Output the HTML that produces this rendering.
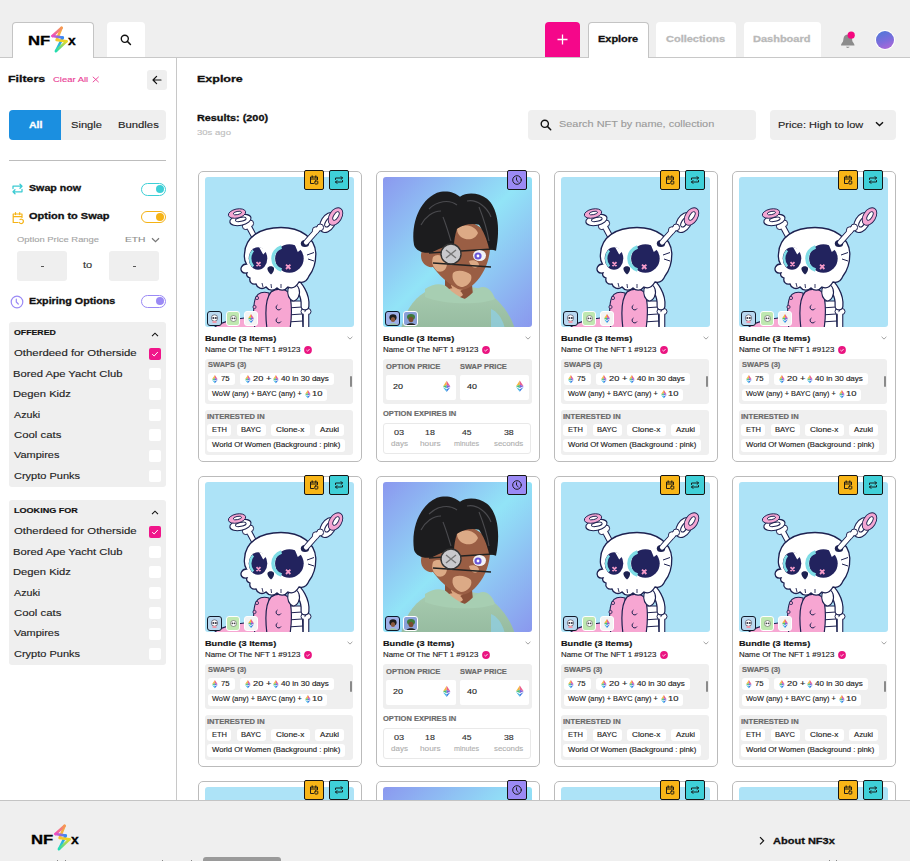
<!DOCTYPE html><html><head><meta charset="utf-8"><style>
*{margin:0;padding:0;box-sizing:border-box}
html,body{width:910px;height:861px;overflow:hidden;background:#fff;font-family:"Liberation Sans", sans-serif;color:#111}
.t{position:absolute;white-space:nowrap}
.r{position:absolute}
.card{position:absolute;width:164px;height:291px;border:1px solid #c4c4c4;border-radius:5px;background:#fff}
.card .t,.card .r,.card svg{position:absolute}
svg{position:absolute;overflow:visible}
</style></head><body><div class="r" style="left:0px;top:0px;width:910px;height:57px;background:#efefef;"></div><div class="r" style="left:0px;top:57px;width:910px;height:1px;background:#c8c8c8;"></div><div class="r" style="left:12px;top:22px;width:81.5px;height:36px;background:#fff;border:1px solid #c4c4c4;border-bottom:none;border-radius:4px 4px 0 0;"></div><div class="t" style="left:28.22px;top:34.00px;font-size:13px;line-height:13px;font-weight:700;-webkit-text-stroke:0.3px currentColor;color:#000;transform:scaleX(1.282);transform-origin:0 0;">NF</div><div class="t" style="left:68.26px;top:34.00px;font-size:13.5px;line-height:13.5px;font-weight:700;-webkit-text-stroke:0.3px currentColor;color:#000;transform:scaleX(1.029);transform-origin:0 0;">x</div><svg style="left:48.3px;top:24.2px" width="20.0" height="28.0" viewBox="0 0 20 28" fill="none" stroke-linecap="round" stroke-linejoin="round" stroke-width="2.6"><defs><linearGradient id="ba1" gradientUnits="userSpaceOnUse" x1="13" y1="3" x2="4" y2="12"><stop offset="0" stop-color="#f59a52"/><stop offset="1" stop-color="#f24bbd"/></linearGradient><linearGradient id="bb1" gradientUnits="userSpaceOnUse" x1="4.5" y1="12" x2="14.8" y2="13.6"><stop offset="0" stop-color="#f24bbd"/><stop offset="1" stop-color="#2f8cf6"/></linearGradient><linearGradient id="bc1" gradientUnits="userSpaceOnUse" x1="13.6" y1="3.8" x2="18.5" y2="17.4"><stop offset="0" stop-color="#f5a04c"/><stop offset="0.6" stop-color="#f6c033"/><stop offset="1" stop-color="#ecd81e"/></linearGradient><linearGradient id="bd1" gradientUnits="userSpaceOnUse" x1="18.5" y1="17.4" x2="8" y2="27"><stop offset="0" stop-color="#e9d824"/><stop offset="1" stop-color="#22dcb0"/></linearGradient><linearGradient id="be1" gradientUnits="userSpaceOnUse" x1="14.8" y1="13.6" x2="8" y2="27"><stop offset="0" stop-color="#3b86f4"/><stop offset="1" stop-color="#1ee0c8"/></linearGradient></defs><path d="M14.8 13.6 L8 27" stroke="url(#be1)"/><path d="M13.6 3.8 L8.6 16 L18.5 17.4" stroke="url(#bc1)"/><path d="M18.5 17.4 L8 27" stroke="url(#bd1)"/><path d="M13.6 3.8 L4.5 12" stroke="url(#ba1)"/><path d="M4.5 12 L14.8 13.6" stroke="url(#bb1)"/></svg><div class="r" style="left:107px;top:22px;width:38px;height:35px;background:#fff;border-radius:4px 4px 0 0;"></div><svg style="left:119.6px;top:33.8px" width="12" height="12" viewBox="0 0 14 14"><circle cx="5.6" cy="5.6" r="4.1" fill="none" stroke="#111" stroke-width="1.6"/><path d="M8.6 8.6 L12.2 12.2" stroke="#111" stroke-width="1.7" stroke-linecap="round"/></svg><div class="r" style="left:545px;top:22px;width:35px;height:35px;background:#f5078a;border-radius:4px 4px 0 0;"></div><svg style="left:556px;top:33px" width="13" height="13" viewBox="0 0 13 13"><path d="M6.5 1.5V11.5M1.5 6.5H11.5" stroke="#fff" stroke-width="1.3"/></svg><div class="r" style="left:588px;top:22px;width:60.5px;height:36px;background:#fff;border:1px solid #c4c4c4;border-bottom:none;border-radius:4px 4px 0 0;"></div><div class="t" style="left:597.79px;top:35.00px;font-size:9px;line-height:9px;font-weight:700;-webkit-text-stroke:0.3px currentColor;transform:scaleX(1.216);transform-origin:0 0;">Explore</div><div class="r" style="left:656px;top:22px;width:80px;height:35px;background:#fff;border-radius:4px 4px 0 0;"></div><div class="t" style="left:666.16px;top:35.00px;font-size:9px;line-height:9px;font-weight:700;-webkit-text-stroke:0.3px currentColor;color:#b9b9b9;transform:scaleX(1.220);transform-origin:0 0;">Collections</div><div class="r" style="left:743.5px;top:22px;width:77.5px;height:35px;background:#fff;border-radius:4px 4px 0 0;"></div><div class="t" style="left:752.68px;top:35.00px;font-size:9px;line-height:9px;font-weight:700;-webkit-text-stroke:0.3px currentColor;color:#b9b9b9;transform:scaleX(1.222);transform-origin:0 0;">Dashboard</div><svg style="left:840px;top:30px" width="18" height="20" viewBox="0 0 18 20"><path d="M1 15.5 C1 13.5 2.5 12.5 3 11.5 C3.5 10 3.2 7 5 5.5 C6.5 4.2 9 4.2 10.5 5.5 C12.3 7 12 10 12.5 11.5 C13 12.5 14.5 13.5 14.5 15.5 Z" fill="#8c8c8c"/><path d="M6 16.8 C6.5 18.3 9 18.3 9.5 16.8 Z" fill="#8c8c8c"/><circle cx="11.2" cy="5.2" r="3.6" fill="#f5077f"/></svg><div class="r" style="left:875.7px;top:30.7px;width:18.6px;height:18.6px;border-radius:50%;box-shadow:0 0 0 1px #fff;background:linear-gradient(160deg,#4a7ad8 0%,#7d6cdc 55%,#b866d6 100%)"></div><div class="r" style="left:176px;top:58px;width:1px;height:742px;background:#c8c8c8;"></div><div class="t" style="left:8.40px;top:74.00px;font-size:9.8px;line-height:9.8px;font-weight:700;-webkit-text-stroke:0.3px currentColor;transform:scaleX(1.262);transform-origin:0 0;">Filters</div><div class="t" style="left:53.33px;top:76.00px;font-size:8px;line-height:8px;-webkit-text-stroke:0.12px currentColor;color:#ea3d95;transform:scaleX(1.179);transform-origin:0 0;">Clear All</div><svg style="left:91.8px;top:76.2px" width="7.5" height="7" viewBox="0 0 7.5 7"><path d="M0.8 0.8L6.7 6.2M6.7 0.8L0.8 6.2" stroke="#ea3d95" stroke-width="0.9"/></svg><div class="r" style="left:147px;top:69.5px;width:20px;height:20px;background:#efefef;border-radius:3px;"></div><svg style="left:151px;top:73.5px" width="12" height="12" viewBox="0 0 12 12"><path d="M10 6H2.2M5.6 2.4L2 6L5.6 9.6" fill="none" stroke="#111" stroke-width="1.2" stroke-linecap="round" stroke-linejoin="round"/></svg><div class="r" style="left:9px;top:110px;width:157px;height:30px;background:#efefef;border-radius:4px;"></div><div class="r" style="left:9px;top:110px;width:52px;height:30px;background:#1b8fe0;border-radius:4px 0 0 4px;"></div><div class="t" style="left:28.74px;top:121.00px;font-size:8.5px;line-height:8.5px;font-weight:700;-webkit-text-stroke:0.3px currentColor;color:#fff;transform:scaleX(1.241);transform-origin:0 0;">All</div><div class="t" style="left:71.00px;top:121.00px;font-size:8.5px;line-height:8.5px;-webkit-text-stroke:0.12px currentColor;color:#222;transform:scaleX(1.312);transform-origin:0 0;">Single</div><div class="t" style="left:118.10px;top:121.00px;font-size:8.5px;line-height:8.5px;-webkit-text-stroke:0.12px currentColor;color:#222;transform:scaleX(1.328);transform-origin:0 0;">Bundles</div><div class="r" style="left:9px;top:160px;width:157px;height:1px;background:#bdbdbd;"></div><svg style="left:10.5px;top:182px" width="13" height="14" viewBox="0 0 13 14" fill="none" stroke="#3ccbd3" stroke-width="1.3" stroke-linecap="round" stroke-linejoin="round"><path d="M2 6.5V4.2H11M9 2.2L11 4.2L9 6.2M11 7.5V9.8H2M4 7.8L2 9.8L4 11.8"/></svg><div class="t" style="left:29.18px;top:184.00px;font-size:9.2px;line-height:9.2px;font-weight:700;-webkit-text-stroke:0.3px currentColor;transform:scaleX(1.159);transform-origin:0 0;">Swap now</div><div class="r" style="left:141px;top:183px;width:25px;height:12.5px;border:1.2px solid #3ecfd6;border-radius:7px;background:#fff"></div><div class="r" style="left:155.5px;top:185.2px;width:8.2px;height:8.2px;border-radius:50%;background:#3ecfd6"></div><svg style="left:11px;top:210.5px" width="14" height="14" viewBox="0 0 14 14" fill="none" stroke="#f5b315" stroke-width="1.2" stroke-linecap="round" stroke-linejoin="round"><path d="M7 11.5H2.2V3H11V6.5M2.2 5.6H11M4.5 1.5V3.6M8.7 1.5V3.6"/><path d="M9 8.5A2.2 2.2 0 1 1 8.3 11.5"/></svg><div class="t" style="left:29.06px;top:212.00px;font-size:9.2px;line-height:9.2px;font-weight:700;-webkit-text-stroke:0.3px currentColor;transform:scaleX(1.196);transform-origin:0 0;">Option to Swap</div><div class="r" style="left:141px;top:210.5px;width:25px;height:12.5px;border:1.2px solid #f5b315;border-radius:7px;background:#fff"></div><div class="r" style="left:155.5px;top:212.7px;width:8.2px;height:8.2px;border-radius:50%;background:#f5b315"></div><div class="t" style="left:16.68px;top:236.00px;font-size:7.8px;line-height:7.8px;-webkit-text-stroke:0.12px currentColor;color:#a5a5a5;transform:scaleX(1.206);transform-origin:0 0;">Option Price Range</div><div class="t" style="left:124.58px;top:236.00px;font-size:7.8px;line-height:7.8px;-webkit-text-stroke:0.12px currentColor;color:#8d8d8d;transform:scaleX(1.317);transform-origin:0 0;">ETH</div><svg style="left:151px;top:236.5px" width="9" height="6" viewBox="0 0 9 6"><path d="M1 1.2L4.5 4.6L8 1.2" fill="none" stroke="#777" stroke-width="1.2"/></svg><div class="r" style="left:17px;top:251px;width:50px;height:30px;background:#efefef;border-radius:3px;"></div><div class="r" style="left:109px;top:251px;width:50px;height:30px;background:#efefef;border-radius:3px;"></div><div class="r" style="left:40.5px;top:265.5px;width:3px;height:1.1px;background:#555;"></div><div class="r" style="left:132.5px;top:265.5px;width:3px;height:1.1px;background:#555;"></div><div class="t" style="left:83.23px;top:261.00px;font-size:8.6px;line-height:8.6px;-webkit-text-stroke:0.12px currentColor;color:#333;transform:scaleX(1.282);transform-origin:0 0;">to</div><svg style="left:9.5px;top:294.5px" width="14" height="14" viewBox="0 0 14 14" fill="none" stroke="#9b8af5" stroke-width="1.2" stroke-linecap="round"><circle cx="7" cy="7" r="5.8"/><path d="M6.3 4.2L6.3 7L8.3 9"/></svg><div class="t" style="left:28.80px;top:297.00px;font-size:9.2px;line-height:9.2px;font-weight:700;-webkit-text-stroke:0.3px currentColor;transform:scaleX(1.166);transform-origin:0 0;">Expiring Options</div><div class="r" style="left:141px;top:295px;width:25px;height:12.5px;border:1.2px solid #9b8af5;border-radius:7px;background:#fff"></div><div class="r" style="left:155.5px;top:297.2px;width:8.2px;height:8.2px;border-radius:50%;background:#9b8af5"></div><div class="r" style="left:9px;top:322px;width:157px;height:165px;background:#efefef;border-radius:3px;"></div><div class="t" style="left:13.85px;top:330.00px;font-size:6.9px;line-height:6.9px;font-weight:700;-webkit-text-stroke:0.15px currentColor;transform:scaleX(1.272);transform-origin:0 0;">OFFERED</div><svg style="left:151px;top:331.5px" width="8" height="5" viewBox="0 0 8 5"><path d="M1 4.2L4 1.2L7 4.2" fill="none" stroke="#111" stroke-width="1.1"/></svg><div class="t" style="left:13.69px;top:349.00px;font-size:8.6px;line-height:8.6px;-webkit-text-stroke:0.12px currentColor;color:#222;transform:scaleX(1.323);transform-origin:0 0;">Otherdeed for Otherside</div><div class="r" style="left:149px;top:347.5px;width:12px;height:12px;background:#f0158a;border-radius:2px;"></div><svg style="left:149px;top:347.5px" width="12" height="12" viewBox="0 0 12 12"><path d="M3.2 6.2L5.2 8L8.8 4" fill="none" stroke="#fff" stroke-width="1"/></svg><div class="t" style="left:13.30px;top:370.00px;font-size:8.6px;line-height:8.6px;-webkit-text-stroke:0.12px currentColor;color:#222;transform:scaleX(1.306);transform-origin:0 0;">Bored Ape Yacht Club</div><div class="r" style="left:149px;top:367.9px;width:12px;height:12px;background:#fff;border-radius:2px;"></div><div class="t" style="left:13.30px;top:390.00px;font-size:8.6px;line-height:8.6px;-webkit-text-stroke:0.12px currentColor;color:#222;transform:scaleX(1.304);transform-origin:0 0;">Degen Kidz</div><div class="r" style="left:149px;top:388.3px;width:12px;height:12px;background:#fff;border-radius:2px;"></div><div class="t" style="left:14.20px;top:411.00px;font-size:8.6px;line-height:8.6px;-webkit-text-stroke:0.12px currentColor;color:#222;transform:scaleX(1.246);transform-origin:0 0;">Azuki</div><div class="r" style="left:149px;top:408.7px;width:12px;height:12px;background:#fff;border-radius:2px;"></div><div class="t" style="left:13.63px;top:431.00px;font-size:8.6px;line-height:8.6px;-webkit-text-stroke:0.12px currentColor;color:#222;transform:scaleX(1.321);transform-origin:0 0;">Cool cats</div><div class="r" style="left:149px;top:429.1px;width:12px;height:12px;background:#fff;border-radius:2px;"></div><div class="t" style="left:14.15px;top:451.00px;font-size:8.6px;line-height:8.6px;-webkit-text-stroke:0.12px currentColor;color:#222;transform:scaleX(1.273);transform-origin:0 0;">Vampires</div><div class="r" style="left:149px;top:449.5px;width:12px;height:12px;background:#fff;border-radius:2px;"></div><div class="t" style="left:13.65px;top:472.00px;font-size:8.6px;line-height:8.6px;-webkit-text-stroke:0.12px currentColor;color:#222;transform:scaleX(1.281);transform-origin:0 0;">Crypto Punks</div><div class="r" style="left:149px;top:469.9px;width:12px;height:12px;background:#fff;border-radius:2px;"></div><div class="r" style="left:9px;top:500px;width:157px;height:165px;background:#efefef;border-radius:3px;"></div><div class="t" style="left:13.61px;top:508.00px;font-size:6.9px;line-height:6.9px;font-weight:700;-webkit-text-stroke:0.15px currentColor;transform:scaleX(1.314);transform-origin:0 0;">LOOKING FOR</div><svg style="left:151px;top:509.5px" width="8" height="5" viewBox="0 0 8 5"><path d="M1 4.2L4 1.2L7 4.2" fill="none" stroke="#111" stroke-width="1.1"/></svg><div class="t" style="left:13.69px;top:527.00px;font-size:8.6px;line-height:8.6px;-webkit-text-stroke:0.12px currentColor;color:#222;transform:scaleX(1.323);transform-origin:0 0;">Otherdeed for Otherside</div><div class="r" style="left:149px;top:525.5px;width:12px;height:12px;background:#f0158a;border-radius:2px;"></div><svg style="left:149px;top:525.5px" width="12" height="12" viewBox="0 0 12 12"><path d="M3.2 6.2L5.2 8L8.8 4" fill="none" stroke="#fff" stroke-width="1"/></svg><div class="t" style="left:13.30px;top:548.00px;font-size:8.6px;line-height:8.6px;-webkit-text-stroke:0.12px currentColor;color:#222;transform:scaleX(1.306);transform-origin:0 0;">Bored Ape Yacht Club</div><div class="r" style="left:149px;top:545.9px;width:12px;height:12px;background:#fff;border-radius:2px;"></div><div class="t" style="left:13.30px;top:568.00px;font-size:8.6px;line-height:8.6px;-webkit-text-stroke:0.12px currentColor;color:#222;transform:scaleX(1.304);transform-origin:0 0;">Degen Kidz</div><div class="r" style="left:149px;top:566.3px;width:12px;height:12px;background:#fff;border-radius:2px;"></div><div class="t" style="left:14.20px;top:589.00px;font-size:8.6px;line-height:8.6px;-webkit-text-stroke:0.12px currentColor;color:#222;transform:scaleX(1.246);transform-origin:0 0;">Azuki</div><div class="r" style="left:149px;top:586.7px;width:12px;height:12px;background:#fff;border-radius:2px;"></div><div class="t" style="left:13.63px;top:609.00px;font-size:8.6px;line-height:8.6px;-webkit-text-stroke:0.12px currentColor;color:#222;transform:scaleX(1.321);transform-origin:0 0;">Cool cats</div><div class="r" style="left:149px;top:607.1px;width:12px;height:12px;background:#fff;border-radius:2px;"></div><div class="t" style="left:14.15px;top:629.00px;font-size:8.6px;line-height:8.6px;-webkit-text-stroke:0.12px currentColor;color:#222;transform:scaleX(1.273);transform-origin:0 0;">Vampires</div><div class="r" style="left:149px;top:627.5px;width:12px;height:12px;background:#fff;border-radius:2px;"></div><div class="t" style="left:13.65px;top:650.00px;font-size:8.6px;line-height:8.6px;-webkit-text-stroke:0.12px currentColor;color:#222;transform:scaleX(1.281);transform-origin:0 0;">Crypto Punks</div><div class="r" style="left:149px;top:647.9px;width:12px;height:12px;background:#fff;border-radius:2px;"></div><div class="t" style="left:196.69px;top:74.00px;font-size:9.8px;line-height:9.8px;font-weight:700;-webkit-text-stroke:0.3px currentColor;transform:scaleX(1.274);transform-origin:0 0;">Explore</div><div class="t" style="left:196.70px;top:114.00px;font-size:9.3px;line-height:9.3px;font-weight:700;-webkit-text-stroke:0.3px currentColor;transform:scaleX(1.165);transform-origin:0 0;">Results: (200)</div><div class="t" style="left:197.02px;top:129.00px;font-size:8px;line-height:8px;-webkit-text-stroke:0.12px currentColor;color:#bdbdbd;transform:scaleX(1.193);transform-origin:0 0;">30s ago</div><div class="r" style="left:528px;top:110px;width:228px;height:30px;background:#efefef;border-radius:4px;"></div><svg style="left:539.6px;top:118.8px" width="12" height="12" viewBox="0 0 13 13"><circle cx="5.2" cy="5.2" r="3.9" fill="none" stroke="#111" stroke-width="1.5"/><path d="M8 8L11.6 11.6" stroke="#111" stroke-width="1.6" stroke-linecap="round"/></svg><div class="t" style="left:558.91px;top:120.00px;font-size:9.2px;line-height:9.2px;-webkit-text-stroke:0.12px currentColor;color:#9a9a9a;transform:scaleX(1.189);transform-origin:0 0;">Search NFT by name, collection</div><div class="r" style="left:770px;top:109.5px;width:126px;height:30px;background:#efefef;border-radius:4px;"></div><div class="t" style="left:778.42px;top:121.00px;font-size:9.2px;line-height:9.2px;-webkit-text-stroke:0.12px currentColor;color:#222;transform:scaleX(1.192);transform-origin:0 0;">Price: High to low</div><svg style="left:874.5px;top:121px" width="9" height="6" viewBox="0 0 9 6"><path d="M1 1.2L4.5 4.6L8 1.2" fill="none" stroke="#111" stroke-width="1.4"/></svg><div class="r" style="left:197.5px;top:170.5px;width:164px;height:291px"><div class="r" style="left:0;top:0;width:164px;height:291px;border:1px solid #bbb;border-radius:5px;background:#fff"></div><svg style="left:7.5px;top:6.5px" width="149" height="150" viewBox="0 0 149 150"><defs><clipPath id="ck"><rect width="149" height="150" rx="3"/></clipPath></defs><g clip-path="url(#ck)"><rect width="149" height="150" fill="#ade3f7"/><path d="M8 152 C12 146 30 141 50 140 L54 152 Z" fill="#f7a8d3" stroke="#1d2150" stroke-width="1.1"/><path d="M80 124 L97 124 L98 152 L80 152 Z" fill="#fff" stroke="#1d2150" stroke-width="1.1"/><path d="M82 131 L97 130 M82 138 L97 137 M82 145 L98 144" stroke="#1d2150" stroke-width="1"/><path d="M101 137 L101 153" stroke="#1d2150" stroke-width="6.6" stroke-linecap="round"/><circle cx="99" cy="134.5" r="3" fill="#fff" stroke="#1d2150" stroke-width="1"/><circle cx="103" cy="134.5" r="3" fill="#fff" stroke="#1d2150" stroke-width="1"/><path d="M101 137 L101 153" stroke="#fff" stroke-width="4.4" stroke-linecap="round"/><path d="M50 152 C48 140 48 126 51 120 C53 116 58 114 64 116 L67 152 Z" fill="#f5a2d0" stroke="#1d2150" stroke-width="1.1"/><circle cx="52" cy="121" r="1.6" fill="#f5a2d0" stroke="#1d2150" stroke-width="0.8"/><circle cx="49.5" cy="130" r="1.6" fill="#f5a2d0" stroke="#1d2150" stroke-width="0.8"/><path d="M87 103 C94 108 101 118 100 129" stroke="#1d2150" stroke-width="9" stroke-linecap="round" fill="none"/><path d="M87 103 C94 108 101 118 100 129" stroke="#fff" stroke-width="6.6" stroke-linecap="round" fill="none"/><path d="M62 152 C60 136 61 121 66 115 C71 111 80 111 84 116 C87 124 87 140 85 152 Z" fill="#f7a6d2" stroke="#1d2150" stroke-width="1.2"/><path d="M72.5 128 a2.6 2.6 0 1 0 3.5 3.5 M72.5 141 a2.6 2.6 0 1 0 3.5 3.5" fill="none" stroke="#1d2150" stroke-width="1"/><path d="M83 112 C86 106 92 106 94 112 C96 118 92 124 88 124 C84 122 82 118 83 112Z" fill="#fff" stroke="#1d2150" stroke-width="1.1"/><path d="M43 48L50.5 62" stroke="#1d2150" stroke-width="6.2" stroke-linecap="round"/><circle cx="40.8" cy="49.2" r="3.4" fill="#fff" stroke="#1d2150" stroke-width="1"/><circle cx="45.2" cy="46.4" r="3.4" fill="#fff" stroke="#1d2150" stroke-width="1"/><path d="M43 48L50.5 62" stroke="#fff" stroke-width="4.2" stroke-linecap="round"/><g transform="rotate(-12 35 41)"><ellipse cx="35" cy="43" rx="10.8" ry="5.4" fill="#fff" stroke="#1d2150" stroke-width="1.1"/><ellipse cx="35.5" cy="42.5" rx="5.4" ry="2" fill="#fff" stroke="#1d2150" stroke-width="1"/><ellipse cx="33" cy="36" rx="8.8" ry="4.5" fill="#f4a6d2" stroke="#1d2150" stroke-width="0.9"/><ellipse cx="33.5" cy="35.6" rx="4.2" ry="1.6" fill="#fff" stroke="#1d2150" stroke-width="0.9"/></g><ellipse cx="123" cy="45.5" rx="11" ry="7" transform="rotate(-58 123 45.5)" fill="#fff" stroke="#1d2150" stroke-width="1.1"/><ellipse cx="123.5" cy="45" rx="5.6" ry="2.6" transform="rotate(-58 123.5 45)" fill="#fff" stroke="#1d2150" stroke-width="1"/><ellipse cx="130.5" cy="39.5" rx="9.6" ry="6.2" transform="rotate(-58 130.5 39.5)" fill="#f4a6d2" stroke="#1d2150" stroke-width="0.9"/><ellipse cx="131" cy="39" rx="4.8" ry="2.2" transform="rotate(-58 131 39)" fill="#fff" stroke="#1d2150" stroke-width="0.9"/><path d="M39.5 77 C40 60 55 50.5 76 50.5 C96 50.5 110 61 110.8 76 C111 86 108 94 104 99 C102 104 98 106 94 105 C91 110 87 112 83 110 C80 114 75 114 72 111 C69 114 64 114 61 110 C57 113 52 111 51 107 C47 108 44 105 45 101 C42 100 41 98 42 96 C37 97 35 93 36.5 90 C38 87 40 87 41.5 87 C39.5 84 39 81 39.5 77 Z" fill="#fff" stroke="#1d2150" stroke-width="1.3"/><path d="M102 78 L109 75.5 M103 82 L109 84" stroke="#1d2150" stroke-width="1"/><ellipse cx="100" cy="66.5" rx="4.2" ry="3.6" fill="#1d2150"/><path d="M113 52L101 65.5" stroke="#1d2150" stroke-width="6.2" stroke-linecap="round"/><circle cx="110.8" cy="53.2" r="3.4" fill="#fff" stroke="#1d2150" stroke-width="1"/><circle cx="115.2" cy="50.4" r="3.4" fill="#fff" stroke="#1d2150" stroke-width="1"/><path d="M113 52L101 65.5" stroke="#fff" stroke-width="4.2" stroke-linecap="round"/><ellipse cx="53" cy="81.5" rx="9.3" ry="11.3" fill="#22235e"/><circle cx="84.4" cy="81.5" r="14.3" fill="#22235e"/><path d="M54 70 L58.2 77.5 L62.5 73 Z M89.5 67 L92.8 75 L98.6 70.5 Z" fill="#fff"/><path d="M48.2 73.5 A8.5 10.5 0 0 0 48.2 89.5" fill="none" stroke="#7fdde6" stroke-width="2.4"/><path d="M76.5 70 A12 12 0 0 0 76.5 93" fill="none" stroke="#7fdde6" stroke-width="3.4"/><path d="M51.5 85.2l4 4m0-4l-4 4M81 87.6l4.4 4.4m0-4.4l-4.4 4.4" stroke="#f39ac8" stroke-width="1.8"/><path d="M62.5 91 C63.5 88.5 68 88.5 69 91 C69.5 93 68 96 66 97.5 C64 96 62 93 62.5 91Z" fill="#1d2150"/><path d="M57 106 L58 110 M66 107 L66.5 111 M76 107 L76 111" stroke="#1d2150" stroke-width="0.9"/></g></svg><div class="r" style="left:9.7px;top:140.9px;width:15px;height:15px;border:1.6px solid #111a2a;border-radius:3px;background:#b9d8f0"></div><svg style="left:12.7px;top:143.9px" width="9" height="9" viewBox="0 0 9 9"><circle cx="4.5" cy="4" r="3.2" fill="#fff" stroke="#334" stroke-width="0.6"/><circle cx="3.3" cy="4" r="1" fill="#334"/><circle cx="5.8" cy="4" r="1.1" fill="#334"/><rect x="2.5" y="7" width="4" height="2" fill="#e9a"/></svg><div class="r" style="left:28.2px;top:140.9px;width:14.5px;height:15px;border:1.4px solid #fff;border-radius:3px;background:#bfe8b0"></div><svg style="left:31.2px;top:143.9px" width="9" height="9" viewBox="0 0 9 9"><circle cx="4.5" cy="4.5" r="3" fill="#fff" stroke="#555" stroke-width="0.6"/><circle cx="3.4" cy="4.3" r="0.9" fill="#444"/><circle cx="5.6" cy="4.3" r="0.9" fill="#444"/></svg><div class="r" style="left:46.099999999999994px;top:140.9px;width:14px;height:15px;border:1.2px solid #fff;border-radius:3px;background:#f4f4f4"></div><svg style="left:50.099999999999994px;top:143.9px" width="6" height="9" viewBox="0 0 6 9"><path d="M3 0L0 4.6L3 3.4Z" fill="#f5b63b"/><path d="M3 0L6 4.6L3 3.4Z" fill="#ea5e8e"/><path d="M0 4.6L3 3.4L3 6.1Z" fill="#45c27a"/><path d="M6 4.6L3 3.4L3 6.1Z" fill="#7c62dc"/><path d="M0 5.3L3 9L3 6.9Z" fill="#3fb6e6"/><path d="M6 5.3L3 9L3 6.9Z" fill="#3a78e0"/></svg><div class="r" style="left:106.2px;top:-0.5px;width:20px;height:20px;background:#f8b517;border:1.4px solid #161616;border-radius:2px"></div><svg style="left:110.2px;top:3.5px" width="12" height="12" viewBox="0 0 12 12" fill="none" stroke="#161616" stroke-width="0.95" stroke-linecap="round" stroke-linejoin="round"><path d="M5.5 9.5H2.5V3H9.5V5.5M2.5 5H9.5M4.2 1.8V3.4M7.8 1.8V3.4"/><rect x="6.8" y="7" width="3" height="3" rx="0.6"/></svg><div class="r" style="left:131.5px;top:-0.5px;width:20px;height:20px;background:#3fd0d8;border:1.4px solid #161616;border-radius:2px"></div><svg style="left:135.5px;top:3.5px" width="12" height="12" viewBox="0 0 12 12" fill="none" stroke="#161616" stroke-width="0.95" stroke-linecap="round" stroke-linejoin="round"><path d="M2.5 5.5V4H9.5M8 2.5L9.5 4L8 5.5M9.5 6.5V8H2.5M4 6.5L2.5 8L4 9.5"/></svg><div class="t" style="left:7.10px;top:164.50px;font-size:7.6px;line-height:7.6px;font-weight:700;-webkit-text-stroke:0.15px currentColor;transform:scaleX(1.205);transform-origin:0 0;">Bundle (3 Items)</div><div class="t" style="left:7.07px;top:176.50px;font-size:6.9px;line-height:6.9px;-webkit-text-stroke:0.12px currentColor;color:#222;transform:scaleX(1.145);transform-origin:0 0;">Name Of The NFT 1 #9123</div><svg style="left:106px;top:175.3px" width="8" height="8" viewBox="0 0 8 8"><circle cx="4" cy="4" r="3.9" fill="#ea1581"/><path d="M2.4 4.1L3.6 5.2L5.6 3" fill="none" stroke="#fff" stroke-width="0.8"/></svg><svg style="left:149.2px;top:165.8px" width="6" height="4" viewBox="0 0 6 4"><path d="M0.6 0.8L3 3.1L5.4 0.8" fill="none" stroke="#8a8a8a" stroke-width="0.8"/></svg><div class="r" style="left:7.3px;top:188.5px;width:148.7px;height:44.7px;background:#efefef;border-radius:3px;"></div><div class="t" style="left:10.17px;top:191.50px;font-size:6.4px;line-height:6.4px;font-weight:700;-webkit-text-stroke:0.15px currentColor;color:#6a6a6a;transform:scaleX(1.173);transform-origin:0 0;">SWAPS (3)</div><div class="r" style="left:10px;top:202.5px;width:27.2px;height:11.5px;background:#fff;border-radius:3px"></div><svg style="left:14.8px;top:204.3px" width="5.7" height="8.3" viewBox="0 0 6 9"><path d="M3 0L0 4.6L3 3.4Z" fill="#f5b63b"/><path d="M3 0L6 4.6L3 3.4Z" fill="#ea5e8e"/><path d="M0 4.6L3 3.4L3 6.1Z" fill="#45c27a"/><path d="M6 4.6L3 3.4L3 6.1Z" fill="#7c62dc"/><path d="M0 5.3L3 9L3 6.9Z" fill="#3fb6e6"/><path d="M6 5.3L3 9L3 6.9Z" fill="#3a78e0"/></svg><div class="t" style="left:23.81px;top:205.50px;font-size:6.6px;line-height:6.6px;-webkit-text-stroke:0.12px currentColor;color:#222;transform:scaleX(1.173);transform-origin:0 0;">75</div><div class="r" style="left:42.5px;top:202.5px;width:93.7px;height:11.5px;background:#fff;border-radius:3px"></div><svg style="left:47.8px;top:204.3px" width="5.7" height="8.3" viewBox="0 0 6 9"><path d="M3 0L0 4.6L3 3.4Z" fill="#f5b63b"/><path d="M3 0L6 4.6L3 3.4Z" fill="#ea5e8e"/><path d="M0 4.6L3 3.4L3 6.1Z" fill="#45c27a"/><path d="M6 4.6L3 3.4L3 6.1Z" fill="#7c62dc"/><path d="M0 5.3L3 9L3 6.9Z" fill="#3fb6e6"/><path d="M6 5.3L3 9L3 6.9Z" fill="#3a78e0"/></svg><div class="t" style="left:55.34px;top:205.50px;font-size:6.6px;line-height:6.6px;-webkit-text-stroke:0.12px currentColor;color:#222;transform:scaleX(1.406);transform-origin:0 0;">20 +</div><svg style="left:75.6px;top:204.3px" width="5.7" height="8.3" viewBox="0 0 6 9"><path d="M3 0L0 4.6L3 3.4Z" fill="#f5b63b"/><path d="M3 0L6 4.6L3 3.4Z" fill="#ea5e8e"/><path d="M0 4.6L3 3.4L3 6.1Z" fill="#45c27a"/><path d="M6 4.6L3 3.4L3 6.1Z" fill="#7c62dc"/><path d="M0 5.3L3 9L3 6.9Z" fill="#3fb6e6"/><path d="M6 5.3L3 9L3 6.9Z" fill="#3a78e0"/></svg><div class="t" style="left:83.34px;top:205.50px;font-size:6.6px;line-height:6.6px;-webkit-text-stroke:0.12px currentColor;color:#222;transform:scaleX(1.221);transform-origin:0 0;">40 in 30 days</div><div class="r" style="left:152.5px;top:205.5px;width:2px;height:10.8px;background:#8a8a8a;border-radius:1px;"></div><div class="r" style="left:10px;top:218px;width:119.2px;height:12.2px;background:#fff;border-radius:3px"></div><div class="t" style="left:14.86px;top:220.50px;font-size:6.6px;line-height:6.6px;-webkit-text-stroke:0.12px currentColor;color:#222;transform:scaleX(1.116);transform-origin:0 0;">WoW (any) + BAYC (any) +</div><svg style="left:107.2px;top:219.8px" width="5.7" height="8.3" viewBox="0 0 6 9"><path d="M3 0L0 4.6L3 3.4Z" fill="#f5b63b"/><path d="M3 0L6 4.6L3 3.4Z" fill="#ea5e8e"/><path d="M0 4.6L3 3.4L3 6.1Z" fill="#45c27a"/><path d="M6 4.6L3 3.4L3 6.1Z" fill="#7c62dc"/><path d="M0 5.3L3 9L3 6.9Z" fill="#3fb6e6"/><path d="M6 5.3L3 9L3 6.9Z" fill="#3a78e0"/></svg><div class="t" style="left:114.50px;top:220.50px;font-size:6.6px;line-height:6.6px;-webkit-text-stroke:0.12px currentColor;color:#222;transform:scaleX(1.424);transform-origin:0 0;">10</div><div class="r" style="left:7.3px;top:239.5px;width:148.7px;height:44.7px;background:#efefef;border-radius:3px;"></div><div class="t" style="left:9.91px;top:243.50px;font-size:6.4px;line-height:6.4px;font-weight:700;-webkit-text-stroke:0.15px currentColor;color:#6a6a6a;transform:scaleX(1.186);transform-origin:0 0;">INTERESTED IN</div><div class="r" style="left:9.9px;top:253.2px;width:23.700000000000003px;height:12.1px;background:#fff;border-radius:3px"></div><div class="t" style="left:14.30px;top:256.50px;font-size:6.6px;line-height:6.6px;-webkit-text-stroke:0.12px currentColor;color:#222;transform:scaleX(1.136);transform-origin:0 0;">ETH</div><div class="r" style="left:39px;top:253.2px;width:29.200000000000003px;height:12.1px;background:#fff;border-radius:3px"></div><div class="t" style="left:43.29px;top:256.50px;font-size:6.6px;line-height:6.6px;-webkit-text-stroke:0.12px currentColor;color:#222;transform:scaleX(1.150);transform-origin:0 0;">BAYC</div><div class="r" style="left:73.5px;top:253.2px;width:39.0px;height:12.1px;background:#fff;border-radius:3px"></div><div class="t" style="left:78.39px;top:256.50px;font-size:6.6px;line-height:6.6px;-webkit-text-stroke:0.12px currentColor;color:#222;transform:scaleX(1.253);transform-origin:0 0;">Clone-x</div><div class="r" style="left:117.5px;top:253.2px;width:28.900000000000006px;height:12.1px;background:#fff;border-radius:3px"></div><div class="t" style="left:122.30px;top:256.50px;font-size:6.6px;line-height:6.6px;-webkit-text-stroke:0.12px currentColor;color:#222;transform:scaleX(1.184);transform-origin:0 0;">Azuki</div><div class="r" style="left:9.9px;top:268.5px;width:137.8px;height:12.8px;background:#fff;border-radius:3px"></div><div class="t" style="left:14.86px;top:271.50px;font-size:6.6px;line-height:6.6px;-webkit-text-stroke:0.12px currentColor;color:#222;transform:scaleX(1.173);transform-origin:0 0;">World Of Women (Background : pink)</div></div><div class="r" style="left:375.5px;top:170.5px;width:164px;height:291px"><div class="r" style="left:0;top:0;width:164px;height:291px;border:1px solid #bbb;border-radius:5px;background:#fff"></div><svg style="left:7.5px;top:6.5px" width="149" height="150" viewBox="0 0 149 150"><defs><clipPath id="ca"><rect width="149" height="150" rx="3"/></clipPath><linearGradient id="abg" x1="0" y1="0" x2="1" y2="1"><stop offset="0" stop-color="#8b98ef"/><stop offset="0.48" stop-color="#92e4f7"/><stop offset="1" stop-color="#8a98ee"/></linearGradient><linearGradient id="ahd" x1="0" y1="0" x2="0" y2="1"><stop offset="0" stop-color="#a8ccb0"/><stop offset="1" stop-color="#96bba0"/></linearGradient></defs><g clip-path="url(#ca)"><rect width="149" height="150" fill="url(#abg)"/><path d="M18 152 C22 132 34 118 46 113 C58 108 90 108 100 113 C114 120 126 134 132 152 Z" fill="url(#ahd)"/><path d="M108 132 C114 134 120 142 122 152 L108 152 Z" fill="#8fd0e8" opacity="0.7"/><path d="M62 98 L88 98 L90 118 C82 124 70 124 62 118 Z" fill="#8a5038"/><path d="M68 108 C72 104 78 106 80 112 C76 116 70 116 68 108Z" fill="#d9a27c"/><path d="M44 70 C44 56 58 44 76 44 C96 44 108 56 107 72 C106 86 100 98 92 106 C86 112 80 114 75 112 C64 106 56 98 50 90 C44 91 38 86 38 79 C38 73 41 70 44 70Z" fill="#9a5e44"/><path d="M74 52 C80 46 92 48 95 56 C92 63 84 64 78 60 C76 58 74 56 74 52Z M50 80 C54 76 62 78 64 86 C64 94 58 96 54 94 C50 90 48 86 50 80Z M70 96 C74 92 84 94 88 98 C90 104 84 110 78 110 C72 108 68 102 70 96Z M86 84 C90 82 96 84 96 88 C94 92 88 92 86 84Z M66 112 C70 110 78 112 80 118 C76 122 70 122 66 118Z" fill="#dcaa86"/><path d="M42 112 C50 106 60 106 64 110 C70 116 76 120 82 122 C88 118 94 110 100 110 C106 110 110 116 112 122 C100 128 60 128 42 120 Z" fill="#a7ceb2"/><path transform="translate(0 1.8)" d="M31 66 C28 45 36 22 54 14 C62 11 72 13 77 18 C84 13 96 14 104 20 C114 28 118 48 113 72 L106 70 C104 60 100 52 96 46 C88 44 80 46 74 50 C72 56 71 62 71 67 C64 66 56 70 48 74 L42 74 C36 73 32 70 31 66 Z" fill="#1c1c1e"/><path d="M46 32 C54 24 66 22 74 28 M84 24 C94 22 104 30 108 40 M38 48 C42 40 50 34 58 34 M60 40 C64 50 66 58 68 64 M96 30 C100 40 104 52 106 64" fill="none" stroke="#4a4a4e" stroke-width="1.1"/><path d="M46 76 L110 72 M50 86 L108 90" stroke="#222" stroke-width="1.4"/><circle cx="68" cy="77" r="10" fill="#c9c9cc" stroke="#333" stroke-width="1.4"/><path d="M63 73 L73 81 M73 73 L63 81" stroke="#777" stroke-width="1.4"/><ellipse cx="96.5" cy="78.5" rx="6.5" ry="5.5" fill="#f2f2f6"/><circle cx="95" cy="79" r="3.6" fill="#6a58d8"/><circle cx="95" cy="79" r="1.4" fill="#fff"/></g></svg><div class="r" style="left:9.7px;top:140.9px;width:15px;height:15px;border:1.6px solid #0b1a2a;border-radius:3px;background:#9fb0e8"></div><svg style="left:11.299999999999999px;top:142.5px" width="12" height="12" viewBox="0 0 12 12"><ellipse cx="6" cy="4.5" rx="3.6" ry="3.2" fill="#1c1c1c"/><ellipse cx="6" cy="6.5" rx="2.2" ry="2.6" fill="#8a5a40"/><path d="M2 12 C3 9.5 9 9.5 10 12Z" fill="#9cc3a6"/></svg><div class="r" style="left:27.9px;top:140.9px;width:15px;height:15px;border:1.5px solid #fff;border-radius:3px;background:#8aa0d8"></div><svg style="left:29.4px;top:142.4px" width="12" height="12" viewBox="0 0 12 12"><ellipse cx="6" cy="4" rx="4" ry="3" fill="#3d7a3a"/><ellipse cx="6" cy="6.5" rx="2.4" ry="2.8" fill="#7a4a30"/><path d="M1.5 12 C3 9.5 9 9.5 10.5 12Z" fill="#222"/></svg><div class="r" style="left:131.5px;top:-0.5px;width:20px;height:20px;background:#9b8af5;border:1.4px solid #161616;border-radius:2px"></div><svg style="left:135.5px;top:3.5px" width="12" height="12" viewBox="0 0 12 12" fill="none" stroke="#161616" stroke-width="0.95" stroke-linecap="round" stroke-linejoin="round"><circle cx="6" cy="6" r="4.3"/><path d="M5.5 3.8V6.2L7.2 7.8"/></svg><div class="t" style="left:7.10px;top:164.50px;font-size:7.6px;line-height:7.6px;font-weight:700;-webkit-text-stroke:0.15px currentColor;transform:scaleX(1.205);transform-origin:0 0;">Bundle (3 Items)</div><div class="t" style="left:7.07px;top:176.50px;font-size:6.9px;line-height:6.9px;-webkit-text-stroke:0.12px currentColor;color:#222;transform:scaleX(1.145);transform-origin:0 0;">Name Of The NFT 1 #9123</div><svg style="left:106px;top:175.3px" width="8" height="8" viewBox="0 0 8 8"><circle cx="4" cy="4" r="3.9" fill="#ea1581"/><path d="M2.4 4.1L3.6 5.2L5.6 3" fill="none" stroke="#fff" stroke-width="0.8"/></svg><svg style="left:149.2px;top:165.8px" width="6" height="4" viewBox="0 0 6 4"><path d="M0.6 0.8L3 3.1L5.4 0.8" fill="none" stroke="#8a8a8a" stroke-width="0.8"/></svg><div class="r" style="left:7.9px;top:188.6px;width:148.3px;height:45.3px;background:#efefef;border-radius:3px;"></div><div class="t" style="left:10.20px;top:193.50px;font-size:6.3px;line-height:6.3px;font-weight:700;-webkit-text-stroke:0.15px currentColor;color:#6a6a6a;transform:scaleX(1.204);transform-origin:0 0;">OPTION PRICE</div><div class="t" style="left:84.18px;top:193.50px;font-size:6.3px;line-height:6.3px;font-weight:700;-webkit-text-stroke:0.15px currentColor;color:#6a6a6a;transform:scaleX(1.186);transform-origin:0 0;">SWAP PRICE</div><div class="r" style="left:10.5px;top:204.9px;width:70.1px;height:24.3px;background:#fff;border-radius:2px;"></div><div class="r" style="left:84px;top:204.9px;width:69.4px;height:24.3px;background:#fff;border-radius:2px;"></div><div class="t" style="left:17.85px;top:213.50px;font-size:6.8px;line-height:6.8px;-webkit-text-stroke:0.12px currentColor;color:#222;transform:scaleX(1.320);transform-origin:0 0;">20</div><div class="t" style="left:91.42px;top:213.50px;font-size:6.8px;line-height:6.8px;-webkit-text-stroke:0.12px currentColor;color:#222;transform:scaleX(1.310);transform-origin:0 0;">40</div><svg style="left:67.3px;top:209.6px" width="7.4" height="12.7" viewBox="0 0 6 9"><path d="M3 0L0 4.6L3 3.4Z" fill="#f5b63b"/><path d="M3 0L6 4.6L3 3.4Z" fill="#ea5e8e"/><path d="M0 4.6L3 3.4L3 6.1Z" fill="#45c27a"/><path d="M6 4.6L3 3.4L3 6.1Z" fill="#7c62dc"/><path d="M0 5.3L3 9L3 6.9Z" fill="#3fb6e6"/><path d="M6 5.3L3 9L3 6.9Z" fill="#3a78e0"/></svg><svg style="left:140.6px;top:209.6px" width="7.6" height="12.2" viewBox="0 0 6 9"><path d="M3 0L0 4.6L3 3.4Z" fill="#f5b63b"/><path d="M3 0L6 4.6L3 3.4Z" fill="#ea5e8e"/><path d="M0 4.6L3 3.4L3 6.1Z" fill="#45c27a"/><path d="M6 4.6L3 3.4L3 6.1Z" fill="#7c62dc"/><path d="M0 5.3L3 9L3 6.9Z" fill="#3fb6e6"/><path d="M6 5.3L3 9L3 6.9Z" fill="#3a78e0"/></svg><div class="t" style="left:7.30px;top:240.50px;font-size:6.3px;line-height:6.3px;font-weight:700;-webkit-text-stroke:0.15px currentColor;color:#6a6a6a;transform:scaleX(1.197);transform-origin:0 0;">OPTION EXPIRES IN</div><div class="r" style="left:7.9px;top:252.2px;width:148.1px;height:31.6px;border:1px solid #e9e9e9;border-radius:3px;background:#fff"></div><div class="t" style="left:18.93px;top:259.50px;font-size:6.8px;line-height:6.8px;-webkit-text-stroke:0.12px currentColor;color:#333;transform:scaleX(1.342);transform-origin:0 0;">03</div><div class="t" style="left:15.53px;top:270.50px;font-size:6.8px;line-height:6.8px;-webkit-text-stroke:0.12px currentColor;color:#b0b0b0;transform:scaleX(1.178);transform-origin:0 0;">days</div><div class="t" style="left:49.84px;top:259.50px;font-size:6.8px;line-height:6.8px;-webkit-text-stroke:0.12px currentColor;color:#333;transform:scaleX(1.301);transform-origin:0 0;">18</div><div class="t" style="left:44.42px;top:270.50px;font-size:6.8px;line-height:6.8px;-webkit-text-stroke:0.12px currentColor;color:#b0b0b0;transform:scaleX(1.216);transform-origin:0 0;">hours</div><div class="t" style="left:86.33px;top:259.50px;font-size:6.8px;line-height:6.8px;-webkit-text-stroke:0.12px currentColor;color:#333;transform:scaleX(1.261);transform-origin:0 0;">45</div><div class="t" style="left:78.28px;top:270.50px;font-size:6.8px;line-height:6.8px;-webkit-text-stroke:0.12px currentColor;color:#b0b0b0;transform:scaleX(1.060);transform-origin:0 0;">minutes</div><div class="t" style="left:128.35px;top:259.50px;font-size:6.8px;line-height:6.8px;-webkit-text-stroke:0.12px currentColor;color:#333;transform:scaleX(1.285);transform-origin:0 0;">38</div><div class="t" style="left:118.56px;top:270.50px;font-size:6.8px;line-height:6.8px;-webkit-text-stroke:0.12px currentColor;color:#b0b0b0;transform:scaleX(1.157);transform-origin:0 0;">seconds</div></div><div class="r" style="left:553.5px;top:170.5px;width:164px;height:291px"><div class="r" style="left:0;top:0;width:164px;height:291px;border:1px solid #bbb;border-radius:5px;background:#fff"></div><svg style="left:7.5px;top:6.5px" width="149" height="150" viewBox="0 0 149 150"><defs><clipPath id="ck"><rect width="149" height="150" rx="3"/></clipPath></defs><g clip-path="url(#ck)"><rect width="149" height="150" fill="#ade3f7"/><path d="M8 152 C12 146 30 141 50 140 L54 152 Z" fill="#f7a8d3" stroke="#1d2150" stroke-width="1.1"/><path d="M80 124 L97 124 L98 152 L80 152 Z" fill="#fff" stroke="#1d2150" stroke-width="1.1"/><path d="M82 131 L97 130 M82 138 L97 137 M82 145 L98 144" stroke="#1d2150" stroke-width="1"/><path d="M101 137 L101 153" stroke="#1d2150" stroke-width="6.6" stroke-linecap="round"/><circle cx="99" cy="134.5" r="3" fill="#fff" stroke="#1d2150" stroke-width="1"/><circle cx="103" cy="134.5" r="3" fill="#fff" stroke="#1d2150" stroke-width="1"/><path d="M101 137 L101 153" stroke="#fff" stroke-width="4.4" stroke-linecap="round"/><path d="M50 152 C48 140 48 126 51 120 C53 116 58 114 64 116 L67 152 Z" fill="#f5a2d0" stroke="#1d2150" stroke-width="1.1"/><circle cx="52" cy="121" r="1.6" fill="#f5a2d0" stroke="#1d2150" stroke-width="0.8"/><circle cx="49.5" cy="130" r="1.6" fill="#f5a2d0" stroke="#1d2150" stroke-width="0.8"/><path d="M87 103 C94 108 101 118 100 129" stroke="#1d2150" stroke-width="9" stroke-linecap="round" fill="none"/><path d="M87 103 C94 108 101 118 100 129" stroke="#fff" stroke-width="6.6" stroke-linecap="round" fill="none"/><path d="M62 152 C60 136 61 121 66 115 C71 111 80 111 84 116 C87 124 87 140 85 152 Z" fill="#f7a6d2" stroke="#1d2150" stroke-width="1.2"/><path d="M72.5 128 a2.6 2.6 0 1 0 3.5 3.5 M72.5 141 a2.6 2.6 0 1 0 3.5 3.5" fill="none" stroke="#1d2150" stroke-width="1"/><path d="M83 112 C86 106 92 106 94 112 C96 118 92 124 88 124 C84 122 82 118 83 112Z" fill="#fff" stroke="#1d2150" stroke-width="1.1"/><path d="M43 48L50.5 62" stroke="#1d2150" stroke-width="6.2" stroke-linecap="round"/><circle cx="40.8" cy="49.2" r="3.4" fill="#fff" stroke="#1d2150" stroke-width="1"/><circle cx="45.2" cy="46.4" r="3.4" fill="#fff" stroke="#1d2150" stroke-width="1"/><path d="M43 48L50.5 62" stroke="#fff" stroke-width="4.2" stroke-linecap="round"/><g transform="rotate(-12 35 41)"><ellipse cx="35" cy="43" rx="10.8" ry="5.4" fill="#fff" stroke="#1d2150" stroke-width="1.1"/><ellipse cx="35.5" cy="42.5" rx="5.4" ry="2" fill="#fff" stroke="#1d2150" stroke-width="1"/><ellipse cx="33" cy="36" rx="8.8" ry="4.5" fill="#f4a6d2" stroke="#1d2150" stroke-width="0.9"/><ellipse cx="33.5" cy="35.6" rx="4.2" ry="1.6" fill="#fff" stroke="#1d2150" stroke-width="0.9"/></g><ellipse cx="123" cy="45.5" rx="11" ry="7" transform="rotate(-58 123 45.5)" fill="#fff" stroke="#1d2150" stroke-width="1.1"/><ellipse cx="123.5" cy="45" rx="5.6" ry="2.6" transform="rotate(-58 123.5 45)" fill="#fff" stroke="#1d2150" stroke-width="1"/><ellipse cx="130.5" cy="39.5" rx="9.6" ry="6.2" transform="rotate(-58 130.5 39.5)" fill="#f4a6d2" stroke="#1d2150" stroke-width="0.9"/><ellipse cx="131" cy="39" rx="4.8" ry="2.2" transform="rotate(-58 131 39)" fill="#fff" stroke="#1d2150" stroke-width="0.9"/><path d="M39.5 77 C40 60 55 50.5 76 50.5 C96 50.5 110 61 110.8 76 C111 86 108 94 104 99 C102 104 98 106 94 105 C91 110 87 112 83 110 C80 114 75 114 72 111 C69 114 64 114 61 110 C57 113 52 111 51 107 C47 108 44 105 45 101 C42 100 41 98 42 96 C37 97 35 93 36.5 90 C38 87 40 87 41.5 87 C39.5 84 39 81 39.5 77 Z" fill="#fff" stroke="#1d2150" stroke-width="1.3"/><path d="M102 78 L109 75.5 M103 82 L109 84" stroke="#1d2150" stroke-width="1"/><ellipse cx="100" cy="66.5" rx="4.2" ry="3.6" fill="#1d2150"/><path d="M113 52L101 65.5" stroke="#1d2150" stroke-width="6.2" stroke-linecap="round"/><circle cx="110.8" cy="53.2" r="3.4" fill="#fff" stroke="#1d2150" stroke-width="1"/><circle cx="115.2" cy="50.4" r="3.4" fill="#fff" stroke="#1d2150" stroke-width="1"/><path d="M113 52L101 65.5" stroke="#fff" stroke-width="4.2" stroke-linecap="round"/><ellipse cx="53" cy="81.5" rx="9.3" ry="11.3" fill="#22235e"/><circle cx="84.4" cy="81.5" r="14.3" fill="#22235e"/><path d="M54 70 L58.2 77.5 L62.5 73 Z M89.5 67 L92.8 75 L98.6 70.5 Z" fill="#fff"/><path d="M48.2 73.5 A8.5 10.5 0 0 0 48.2 89.5" fill="none" stroke="#7fdde6" stroke-width="2.4"/><path d="M76.5 70 A12 12 0 0 0 76.5 93" fill="none" stroke="#7fdde6" stroke-width="3.4"/><path d="M51.5 85.2l4 4m0-4l-4 4M81 87.6l4.4 4.4m0-4.4l-4.4 4.4" stroke="#f39ac8" stroke-width="1.8"/><path d="M62.5 91 C63.5 88.5 68 88.5 69 91 C69.5 93 68 96 66 97.5 C64 96 62 93 62.5 91Z" fill="#1d2150"/><path d="M57 106 L58 110 M66 107 L66.5 111 M76 107 L76 111" stroke="#1d2150" stroke-width="0.9"/></g></svg><div class="r" style="left:9.7px;top:140.9px;width:15px;height:15px;border:1.6px solid #111a2a;border-radius:3px;background:#b9d8f0"></div><svg style="left:12.7px;top:143.9px" width="9" height="9" viewBox="0 0 9 9"><circle cx="4.5" cy="4" r="3.2" fill="#fff" stroke="#334" stroke-width="0.6"/><circle cx="3.3" cy="4" r="1" fill="#334"/><circle cx="5.8" cy="4" r="1.1" fill="#334"/><rect x="2.5" y="7" width="4" height="2" fill="#e9a"/></svg><div class="r" style="left:28.2px;top:140.9px;width:14.5px;height:15px;border:1.4px solid #fff;border-radius:3px;background:#bfe8b0"></div><svg style="left:31.2px;top:143.9px" width="9" height="9" viewBox="0 0 9 9"><circle cx="4.5" cy="4.5" r="3" fill="#fff" stroke="#555" stroke-width="0.6"/><circle cx="3.4" cy="4.3" r="0.9" fill="#444"/><circle cx="5.6" cy="4.3" r="0.9" fill="#444"/></svg><div class="r" style="left:46.099999999999994px;top:140.9px;width:14px;height:15px;border:1.2px solid #fff;border-radius:3px;background:#f4f4f4"></div><svg style="left:50.099999999999994px;top:143.9px" width="6" height="9" viewBox="0 0 6 9"><path d="M3 0L0 4.6L3 3.4Z" fill="#f5b63b"/><path d="M3 0L6 4.6L3 3.4Z" fill="#ea5e8e"/><path d="M0 4.6L3 3.4L3 6.1Z" fill="#45c27a"/><path d="M6 4.6L3 3.4L3 6.1Z" fill="#7c62dc"/><path d="M0 5.3L3 9L3 6.9Z" fill="#3fb6e6"/><path d="M6 5.3L3 9L3 6.9Z" fill="#3a78e0"/></svg><div class="r" style="left:106.2px;top:-0.5px;width:20px;height:20px;background:#f8b517;border:1.4px solid #161616;border-radius:2px"></div><svg style="left:110.2px;top:3.5px" width="12" height="12" viewBox="0 0 12 12" fill="none" stroke="#161616" stroke-width="0.95" stroke-linecap="round" stroke-linejoin="round"><path d="M5.5 9.5H2.5V3H9.5V5.5M2.5 5H9.5M4.2 1.8V3.4M7.8 1.8V3.4"/><rect x="6.8" y="7" width="3" height="3" rx="0.6"/></svg><div class="r" style="left:131.5px;top:-0.5px;width:20px;height:20px;background:#3fd0d8;border:1.4px solid #161616;border-radius:2px"></div><svg style="left:135.5px;top:3.5px" width="12" height="12" viewBox="0 0 12 12" fill="none" stroke="#161616" stroke-width="0.95" stroke-linecap="round" stroke-linejoin="round"><path d="M2.5 5.5V4H9.5M8 2.5L9.5 4L8 5.5M9.5 6.5V8H2.5M4 6.5L2.5 8L4 9.5"/></svg><div class="t" style="left:7.10px;top:164.50px;font-size:7.6px;line-height:7.6px;font-weight:700;-webkit-text-stroke:0.15px currentColor;transform:scaleX(1.205);transform-origin:0 0;">Bundle (3 Items)</div><div class="t" style="left:7.07px;top:176.50px;font-size:6.9px;line-height:6.9px;-webkit-text-stroke:0.12px currentColor;color:#222;transform:scaleX(1.145);transform-origin:0 0;">Name Of The NFT 1 #9123</div><svg style="left:106px;top:175.3px" width="8" height="8" viewBox="0 0 8 8"><circle cx="4" cy="4" r="3.9" fill="#ea1581"/><path d="M2.4 4.1L3.6 5.2L5.6 3" fill="none" stroke="#fff" stroke-width="0.8"/></svg><svg style="left:149.2px;top:165.8px" width="6" height="4" viewBox="0 0 6 4"><path d="M0.6 0.8L3 3.1L5.4 0.8" fill="none" stroke="#8a8a8a" stroke-width="0.8"/></svg><div class="r" style="left:7.3px;top:188.5px;width:148.7px;height:44.7px;background:#efefef;border-radius:3px;"></div><div class="t" style="left:10.17px;top:191.50px;font-size:6.4px;line-height:6.4px;font-weight:700;-webkit-text-stroke:0.15px currentColor;color:#6a6a6a;transform:scaleX(1.173);transform-origin:0 0;">SWAPS (3)</div><div class="r" style="left:10px;top:202.5px;width:27.2px;height:11.5px;background:#fff;border-radius:3px"></div><svg style="left:14.8px;top:204.3px" width="5.7" height="8.3" viewBox="0 0 6 9"><path d="M3 0L0 4.6L3 3.4Z" fill="#f5b63b"/><path d="M3 0L6 4.6L3 3.4Z" fill="#ea5e8e"/><path d="M0 4.6L3 3.4L3 6.1Z" fill="#45c27a"/><path d="M6 4.6L3 3.4L3 6.1Z" fill="#7c62dc"/><path d="M0 5.3L3 9L3 6.9Z" fill="#3fb6e6"/><path d="M6 5.3L3 9L3 6.9Z" fill="#3a78e0"/></svg><div class="t" style="left:23.81px;top:205.50px;font-size:6.6px;line-height:6.6px;-webkit-text-stroke:0.12px currentColor;color:#222;transform:scaleX(1.173);transform-origin:0 0;">75</div><div class="r" style="left:42.5px;top:202.5px;width:93.7px;height:11.5px;background:#fff;border-radius:3px"></div><svg style="left:47.8px;top:204.3px" width="5.7" height="8.3" viewBox="0 0 6 9"><path d="M3 0L0 4.6L3 3.4Z" fill="#f5b63b"/><path d="M3 0L6 4.6L3 3.4Z" fill="#ea5e8e"/><path d="M0 4.6L3 3.4L3 6.1Z" fill="#45c27a"/><path d="M6 4.6L3 3.4L3 6.1Z" fill="#7c62dc"/><path d="M0 5.3L3 9L3 6.9Z" fill="#3fb6e6"/><path d="M6 5.3L3 9L3 6.9Z" fill="#3a78e0"/></svg><div class="t" style="left:55.34px;top:205.50px;font-size:6.6px;line-height:6.6px;-webkit-text-stroke:0.12px currentColor;color:#222;transform:scaleX(1.406);transform-origin:0 0;">20 +</div><svg style="left:75.6px;top:204.3px" width="5.7" height="8.3" viewBox="0 0 6 9"><path d="M3 0L0 4.6L3 3.4Z" fill="#f5b63b"/><path d="M3 0L6 4.6L3 3.4Z" fill="#ea5e8e"/><path d="M0 4.6L3 3.4L3 6.1Z" fill="#45c27a"/><path d="M6 4.6L3 3.4L3 6.1Z" fill="#7c62dc"/><path d="M0 5.3L3 9L3 6.9Z" fill="#3fb6e6"/><path d="M6 5.3L3 9L3 6.9Z" fill="#3a78e0"/></svg><div class="t" style="left:83.34px;top:205.50px;font-size:6.6px;line-height:6.6px;-webkit-text-stroke:0.12px currentColor;color:#222;transform:scaleX(1.221);transform-origin:0 0;">40 in 30 days</div><div class="r" style="left:152.5px;top:205.5px;width:2px;height:10.8px;background:#8a8a8a;border-radius:1px;"></div><div class="r" style="left:10px;top:218px;width:119.2px;height:12.2px;background:#fff;border-radius:3px"></div><div class="t" style="left:14.86px;top:220.50px;font-size:6.6px;line-height:6.6px;-webkit-text-stroke:0.12px currentColor;color:#222;transform:scaleX(1.116);transform-origin:0 0;">WoW (any) + BAYC (any) +</div><svg style="left:107.2px;top:219.8px" width="5.7" height="8.3" viewBox="0 0 6 9"><path d="M3 0L0 4.6L3 3.4Z" fill="#f5b63b"/><path d="M3 0L6 4.6L3 3.4Z" fill="#ea5e8e"/><path d="M0 4.6L3 3.4L3 6.1Z" fill="#45c27a"/><path d="M6 4.6L3 3.4L3 6.1Z" fill="#7c62dc"/><path d="M0 5.3L3 9L3 6.9Z" fill="#3fb6e6"/><path d="M6 5.3L3 9L3 6.9Z" fill="#3a78e0"/></svg><div class="t" style="left:114.50px;top:220.50px;font-size:6.6px;line-height:6.6px;-webkit-text-stroke:0.12px currentColor;color:#222;transform:scaleX(1.424);transform-origin:0 0;">10</div><div class="r" style="left:7.3px;top:239.5px;width:148.7px;height:44.7px;background:#efefef;border-radius:3px;"></div><div class="t" style="left:9.91px;top:243.50px;font-size:6.4px;line-height:6.4px;font-weight:700;-webkit-text-stroke:0.15px currentColor;color:#6a6a6a;transform:scaleX(1.186);transform-origin:0 0;">INTERESTED IN</div><div class="r" style="left:9.9px;top:253.2px;width:23.700000000000003px;height:12.1px;background:#fff;border-radius:3px"></div><div class="t" style="left:14.30px;top:256.50px;font-size:6.6px;line-height:6.6px;-webkit-text-stroke:0.12px currentColor;color:#222;transform:scaleX(1.136);transform-origin:0 0;">ETH</div><div class="r" style="left:39px;top:253.2px;width:29.200000000000003px;height:12.1px;background:#fff;border-radius:3px"></div><div class="t" style="left:43.29px;top:256.50px;font-size:6.6px;line-height:6.6px;-webkit-text-stroke:0.12px currentColor;color:#222;transform:scaleX(1.150);transform-origin:0 0;">BAYC</div><div class="r" style="left:73.5px;top:253.2px;width:39.0px;height:12.1px;background:#fff;border-radius:3px"></div><div class="t" style="left:78.39px;top:256.50px;font-size:6.6px;line-height:6.6px;-webkit-text-stroke:0.12px currentColor;color:#222;transform:scaleX(1.253);transform-origin:0 0;">Clone-x</div><div class="r" style="left:117.5px;top:253.2px;width:28.900000000000006px;height:12.1px;background:#fff;border-radius:3px"></div><div class="t" style="left:122.30px;top:256.50px;font-size:6.6px;line-height:6.6px;-webkit-text-stroke:0.12px currentColor;color:#222;transform:scaleX(1.184);transform-origin:0 0;">Azuki</div><div class="r" style="left:9.9px;top:268.5px;width:137.8px;height:12.8px;background:#fff;border-radius:3px"></div><div class="t" style="left:14.86px;top:271.50px;font-size:6.6px;line-height:6.6px;-webkit-text-stroke:0.12px currentColor;color:#222;transform:scaleX(1.173);transform-origin:0 0;">World Of Women (Background : pink)</div></div><div class="r" style="left:731.5px;top:170.5px;width:164px;height:291px"><div class="r" style="left:0;top:0;width:164px;height:291px;border:1px solid #bbb;border-radius:5px;background:#fff"></div><svg style="left:7.5px;top:6.5px" width="149" height="150" viewBox="0 0 149 150"><defs><clipPath id="ck"><rect width="149" height="150" rx="3"/></clipPath></defs><g clip-path="url(#ck)"><rect width="149" height="150" fill="#ade3f7"/><path d="M8 152 C12 146 30 141 50 140 L54 152 Z" fill="#f7a8d3" stroke="#1d2150" stroke-width="1.1"/><path d="M80 124 L97 124 L98 152 L80 152 Z" fill="#fff" stroke="#1d2150" stroke-width="1.1"/><path d="M82 131 L97 130 M82 138 L97 137 M82 145 L98 144" stroke="#1d2150" stroke-width="1"/><path d="M101 137 L101 153" stroke="#1d2150" stroke-width="6.6" stroke-linecap="round"/><circle cx="99" cy="134.5" r="3" fill="#fff" stroke="#1d2150" stroke-width="1"/><circle cx="103" cy="134.5" r="3" fill="#fff" stroke="#1d2150" stroke-width="1"/><path d="M101 137 L101 153" stroke="#fff" stroke-width="4.4" stroke-linecap="round"/><path d="M50 152 C48 140 48 126 51 120 C53 116 58 114 64 116 L67 152 Z" fill="#f5a2d0" stroke="#1d2150" stroke-width="1.1"/><circle cx="52" cy="121" r="1.6" fill="#f5a2d0" stroke="#1d2150" stroke-width="0.8"/><circle cx="49.5" cy="130" r="1.6" fill="#f5a2d0" stroke="#1d2150" stroke-width="0.8"/><path d="M87 103 C94 108 101 118 100 129" stroke="#1d2150" stroke-width="9" stroke-linecap="round" fill="none"/><path d="M87 103 C94 108 101 118 100 129" stroke="#fff" stroke-width="6.6" stroke-linecap="round" fill="none"/><path d="M62 152 C60 136 61 121 66 115 C71 111 80 111 84 116 C87 124 87 140 85 152 Z" fill="#f7a6d2" stroke="#1d2150" stroke-width="1.2"/><path d="M72.5 128 a2.6 2.6 0 1 0 3.5 3.5 M72.5 141 a2.6 2.6 0 1 0 3.5 3.5" fill="none" stroke="#1d2150" stroke-width="1"/><path d="M83 112 C86 106 92 106 94 112 C96 118 92 124 88 124 C84 122 82 118 83 112Z" fill="#fff" stroke="#1d2150" stroke-width="1.1"/><path d="M43 48L50.5 62" stroke="#1d2150" stroke-width="6.2" stroke-linecap="round"/><circle cx="40.8" cy="49.2" r="3.4" fill="#fff" stroke="#1d2150" stroke-width="1"/><circle cx="45.2" cy="46.4" r="3.4" fill="#fff" stroke="#1d2150" stroke-width="1"/><path d="M43 48L50.5 62" stroke="#fff" stroke-width="4.2" stroke-linecap="round"/><g transform="rotate(-12 35 41)"><ellipse cx="35" cy="43" rx="10.8" ry="5.4" fill="#fff" stroke="#1d2150" stroke-width="1.1"/><ellipse cx="35.5" cy="42.5" rx="5.4" ry="2" fill="#fff" stroke="#1d2150" stroke-width="1"/><ellipse cx="33" cy="36" rx="8.8" ry="4.5" fill="#f4a6d2" stroke="#1d2150" stroke-width="0.9"/><ellipse cx="33.5" cy="35.6" rx="4.2" ry="1.6" fill="#fff" stroke="#1d2150" stroke-width="0.9"/></g><ellipse cx="123" cy="45.5" rx="11" ry="7" transform="rotate(-58 123 45.5)" fill="#fff" stroke="#1d2150" stroke-width="1.1"/><ellipse cx="123.5" cy="45" rx="5.6" ry="2.6" transform="rotate(-58 123.5 45)" fill="#fff" stroke="#1d2150" stroke-width="1"/><ellipse cx="130.5" cy="39.5" rx="9.6" ry="6.2" transform="rotate(-58 130.5 39.5)" fill="#f4a6d2" stroke="#1d2150" stroke-width="0.9"/><ellipse cx="131" cy="39" rx="4.8" ry="2.2" transform="rotate(-58 131 39)" fill="#fff" stroke="#1d2150" stroke-width="0.9"/><path d="M39.5 77 C40 60 55 50.5 76 50.5 C96 50.5 110 61 110.8 76 C111 86 108 94 104 99 C102 104 98 106 94 105 C91 110 87 112 83 110 C80 114 75 114 72 111 C69 114 64 114 61 110 C57 113 52 111 51 107 C47 108 44 105 45 101 C42 100 41 98 42 96 C37 97 35 93 36.5 90 C38 87 40 87 41.5 87 C39.5 84 39 81 39.5 77 Z" fill="#fff" stroke="#1d2150" stroke-width="1.3"/><path d="M102 78 L109 75.5 M103 82 L109 84" stroke="#1d2150" stroke-width="1"/><ellipse cx="100" cy="66.5" rx="4.2" ry="3.6" fill="#1d2150"/><path d="M113 52L101 65.5" stroke="#1d2150" stroke-width="6.2" stroke-linecap="round"/><circle cx="110.8" cy="53.2" r="3.4" fill="#fff" stroke="#1d2150" stroke-width="1"/><circle cx="115.2" cy="50.4" r="3.4" fill="#fff" stroke="#1d2150" stroke-width="1"/><path d="M113 52L101 65.5" stroke="#fff" stroke-width="4.2" stroke-linecap="round"/><ellipse cx="53" cy="81.5" rx="9.3" ry="11.3" fill="#22235e"/><circle cx="84.4" cy="81.5" r="14.3" fill="#22235e"/><path d="M54 70 L58.2 77.5 L62.5 73 Z M89.5 67 L92.8 75 L98.6 70.5 Z" fill="#fff"/><path d="M48.2 73.5 A8.5 10.5 0 0 0 48.2 89.5" fill="none" stroke="#7fdde6" stroke-width="2.4"/><path d="M76.5 70 A12 12 0 0 0 76.5 93" fill="none" stroke="#7fdde6" stroke-width="3.4"/><path d="M51.5 85.2l4 4m0-4l-4 4M81 87.6l4.4 4.4m0-4.4l-4.4 4.4" stroke="#f39ac8" stroke-width="1.8"/><path d="M62.5 91 C63.5 88.5 68 88.5 69 91 C69.5 93 68 96 66 97.5 C64 96 62 93 62.5 91Z" fill="#1d2150"/><path d="M57 106 L58 110 M66 107 L66.5 111 M76 107 L76 111" stroke="#1d2150" stroke-width="0.9"/></g></svg><div class="r" style="left:9.7px;top:140.9px;width:15px;height:15px;border:1.6px solid #111a2a;border-radius:3px;background:#b9d8f0"></div><svg style="left:12.7px;top:143.9px" width="9" height="9" viewBox="0 0 9 9"><circle cx="4.5" cy="4" r="3.2" fill="#fff" stroke="#334" stroke-width="0.6"/><circle cx="3.3" cy="4" r="1" fill="#334"/><circle cx="5.8" cy="4" r="1.1" fill="#334"/><rect x="2.5" y="7" width="4" height="2" fill="#e9a"/></svg><div class="r" style="left:28.2px;top:140.9px;width:14.5px;height:15px;border:1.4px solid #fff;border-radius:3px;background:#bfe8b0"></div><svg style="left:31.2px;top:143.9px" width="9" height="9" viewBox="0 0 9 9"><circle cx="4.5" cy="4.5" r="3" fill="#fff" stroke="#555" stroke-width="0.6"/><circle cx="3.4" cy="4.3" r="0.9" fill="#444"/><circle cx="5.6" cy="4.3" r="0.9" fill="#444"/></svg><div class="r" style="left:46.099999999999994px;top:140.9px;width:14px;height:15px;border:1.2px solid #fff;border-radius:3px;background:#f4f4f4"></div><svg style="left:50.099999999999994px;top:143.9px" width="6" height="9" viewBox="0 0 6 9"><path d="M3 0L0 4.6L3 3.4Z" fill="#f5b63b"/><path d="M3 0L6 4.6L3 3.4Z" fill="#ea5e8e"/><path d="M0 4.6L3 3.4L3 6.1Z" fill="#45c27a"/><path d="M6 4.6L3 3.4L3 6.1Z" fill="#7c62dc"/><path d="M0 5.3L3 9L3 6.9Z" fill="#3fb6e6"/><path d="M6 5.3L3 9L3 6.9Z" fill="#3a78e0"/></svg><div class="r" style="left:106.2px;top:-0.5px;width:20px;height:20px;background:#f8b517;border:1.4px solid #161616;border-radius:2px"></div><svg style="left:110.2px;top:3.5px" width="12" height="12" viewBox="0 0 12 12" fill="none" stroke="#161616" stroke-width="0.95" stroke-linecap="round" stroke-linejoin="round"><path d="M5.5 9.5H2.5V3H9.5V5.5M2.5 5H9.5M4.2 1.8V3.4M7.8 1.8V3.4"/><rect x="6.8" y="7" width="3" height="3" rx="0.6"/></svg><div class="r" style="left:131.5px;top:-0.5px;width:20px;height:20px;background:#3fd0d8;border:1.4px solid #161616;border-radius:2px"></div><svg style="left:135.5px;top:3.5px" width="12" height="12" viewBox="0 0 12 12" fill="none" stroke="#161616" stroke-width="0.95" stroke-linecap="round" stroke-linejoin="round"><path d="M2.5 5.5V4H9.5M8 2.5L9.5 4L8 5.5M9.5 6.5V8H2.5M4 6.5L2.5 8L4 9.5"/></svg><div class="t" style="left:7.10px;top:164.50px;font-size:7.6px;line-height:7.6px;font-weight:700;-webkit-text-stroke:0.15px currentColor;transform:scaleX(1.205);transform-origin:0 0;">Bundle (3 Items)</div><div class="t" style="left:7.07px;top:176.50px;font-size:6.9px;line-height:6.9px;-webkit-text-stroke:0.12px currentColor;color:#222;transform:scaleX(1.145);transform-origin:0 0;">Name Of The NFT 1 #9123</div><svg style="left:106px;top:175.3px" width="8" height="8" viewBox="0 0 8 8"><circle cx="4" cy="4" r="3.9" fill="#ea1581"/><path d="M2.4 4.1L3.6 5.2L5.6 3" fill="none" stroke="#fff" stroke-width="0.8"/></svg><svg style="left:149.2px;top:165.8px" width="6" height="4" viewBox="0 0 6 4"><path d="M0.6 0.8L3 3.1L5.4 0.8" fill="none" stroke="#8a8a8a" stroke-width="0.8"/></svg><div class="r" style="left:7.3px;top:188.5px;width:148.7px;height:44.7px;background:#efefef;border-radius:3px;"></div><div class="t" style="left:10.17px;top:191.50px;font-size:6.4px;line-height:6.4px;font-weight:700;-webkit-text-stroke:0.15px currentColor;color:#6a6a6a;transform:scaleX(1.173);transform-origin:0 0;">SWAPS (3)</div><div class="r" style="left:10px;top:202.5px;width:27.2px;height:11.5px;background:#fff;border-radius:3px"></div><svg style="left:14.8px;top:204.3px" width="5.7" height="8.3" viewBox="0 0 6 9"><path d="M3 0L0 4.6L3 3.4Z" fill="#f5b63b"/><path d="M3 0L6 4.6L3 3.4Z" fill="#ea5e8e"/><path d="M0 4.6L3 3.4L3 6.1Z" fill="#45c27a"/><path d="M6 4.6L3 3.4L3 6.1Z" fill="#7c62dc"/><path d="M0 5.3L3 9L3 6.9Z" fill="#3fb6e6"/><path d="M6 5.3L3 9L3 6.9Z" fill="#3a78e0"/></svg><div class="t" style="left:23.81px;top:205.50px;font-size:6.6px;line-height:6.6px;-webkit-text-stroke:0.12px currentColor;color:#222;transform:scaleX(1.173);transform-origin:0 0;">75</div><div class="r" style="left:42.5px;top:202.5px;width:93.7px;height:11.5px;background:#fff;border-radius:3px"></div><svg style="left:47.8px;top:204.3px" width="5.7" height="8.3" viewBox="0 0 6 9"><path d="M3 0L0 4.6L3 3.4Z" fill="#f5b63b"/><path d="M3 0L6 4.6L3 3.4Z" fill="#ea5e8e"/><path d="M0 4.6L3 3.4L3 6.1Z" fill="#45c27a"/><path d="M6 4.6L3 3.4L3 6.1Z" fill="#7c62dc"/><path d="M0 5.3L3 9L3 6.9Z" fill="#3fb6e6"/><path d="M6 5.3L3 9L3 6.9Z" fill="#3a78e0"/></svg><div class="t" style="left:55.34px;top:205.50px;font-size:6.6px;line-height:6.6px;-webkit-text-stroke:0.12px currentColor;color:#222;transform:scaleX(1.406);transform-origin:0 0;">20 +</div><svg style="left:75.6px;top:204.3px" width="5.7" height="8.3" viewBox="0 0 6 9"><path d="M3 0L0 4.6L3 3.4Z" fill="#f5b63b"/><path d="M3 0L6 4.6L3 3.4Z" fill="#ea5e8e"/><path d="M0 4.6L3 3.4L3 6.1Z" fill="#45c27a"/><path d="M6 4.6L3 3.4L3 6.1Z" fill="#7c62dc"/><path d="M0 5.3L3 9L3 6.9Z" fill="#3fb6e6"/><path d="M6 5.3L3 9L3 6.9Z" fill="#3a78e0"/></svg><div class="t" style="left:83.34px;top:205.50px;font-size:6.6px;line-height:6.6px;-webkit-text-stroke:0.12px currentColor;color:#222;transform:scaleX(1.221);transform-origin:0 0;">40 in 30 days</div><div class="r" style="left:152.5px;top:205.5px;width:2px;height:10.8px;background:#8a8a8a;border-radius:1px;"></div><div class="r" style="left:10px;top:218px;width:119.2px;height:12.2px;background:#fff;border-radius:3px"></div><div class="t" style="left:14.86px;top:220.50px;font-size:6.6px;line-height:6.6px;-webkit-text-stroke:0.12px currentColor;color:#222;transform:scaleX(1.116);transform-origin:0 0;">WoW (any) + BAYC (any) +</div><svg style="left:107.2px;top:219.8px" width="5.7" height="8.3" viewBox="0 0 6 9"><path d="M3 0L0 4.6L3 3.4Z" fill="#f5b63b"/><path d="M3 0L6 4.6L3 3.4Z" fill="#ea5e8e"/><path d="M0 4.6L3 3.4L3 6.1Z" fill="#45c27a"/><path d="M6 4.6L3 3.4L3 6.1Z" fill="#7c62dc"/><path d="M0 5.3L3 9L3 6.9Z" fill="#3fb6e6"/><path d="M6 5.3L3 9L3 6.9Z" fill="#3a78e0"/></svg><div class="t" style="left:114.50px;top:220.50px;font-size:6.6px;line-height:6.6px;-webkit-text-stroke:0.12px currentColor;color:#222;transform:scaleX(1.424);transform-origin:0 0;">10</div><div class="r" style="left:7.3px;top:239.5px;width:148.7px;height:44.7px;background:#efefef;border-radius:3px;"></div><div class="t" style="left:9.91px;top:243.50px;font-size:6.4px;line-height:6.4px;font-weight:700;-webkit-text-stroke:0.15px currentColor;color:#6a6a6a;transform:scaleX(1.186);transform-origin:0 0;">INTERESTED IN</div><div class="r" style="left:9.9px;top:253.2px;width:23.700000000000003px;height:12.1px;background:#fff;border-radius:3px"></div><div class="t" style="left:14.30px;top:256.50px;font-size:6.6px;line-height:6.6px;-webkit-text-stroke:0.12px currentColor;color:#222;transform:scaleX(1.136);transform-origin:0 0;">ETH</div><div class="r" style="left:39px;top:253.2px;width:29.200000000000003px;height:12.1px;background:#fff;border-radius:3px"></div><div class="t" style="left:43.29px;top:256.50px;font-size:6.6px;line-height:6.6px;-webkit-text-stroke:0.12px currentColor;color:#222;transform:scaleX(1.150);transform-origin:0 0;">BAYC</div><div class="r" style="left:73.5px;top:253.2px;width:39.0px;height:12.1px;background:#fff;border-radius:3px"></div><div class="t" style="left:78.39px;top:256.50px;font-size:6.6px;line-height:6.6px;-webkit-text-stroke:0.12px currentColor;color:#222;transform:scaleX(1.253);transform-origin:0 0;">Clone-x</div><div class="r" style="left:117.5px;top:253.2px;width:28.900000000000006px;height:12.1px;background:#fff;border-radius:3px"></div><div class="t" style="left:122.30px;top:256.50px;font-size:6.6px;line-height:6.6px;-webkit-text-stroke:0.12px currentColor;color:#222;transform:scaleX(1.184);transform-origin:0 0;">Azuki</div><div class="r" style="left:9.9px;top:268.5px;width:137.8px;height:12.8px;background:#fff;border-radius:3px"></div><div class="t" style="left:14.86px;top:271.50px;font-size:6.6px;line-height:6.6px;-webkit-text-stroke:0.12px currentColor;color:#222;transform:scaleX(1.173);transform-origin:0 0;">World Of Women (Background : pink)</div></div><div class="r" style="left:197.5px;top:475.5px;width:164px;height:291px"><div class="r" style="left:0;top:0;width:164px;height:291px;border:1px solid #bbb;border-radius:5px;background:#fff"></div><svg style="left:7.5px;top:6.5px" width="149" height="150" viewBox="0 0 149 150"><defs><clipPath id="ck"><rect width="149" height="150" rx="3"/></clipPath></defs><g clip-path="url(#ck)"><rect width="149" height="150" fill="#ade3f7"/><path d="M8 152 C12 146 30 141 50 140 L54 152 Z" fill="#f7a8d3" stroke="#1d2150" stroke-width="1.1"/><path d="M80 124 L97 124 L98 152 L80 152 Z" fill="#fff" stroke="#1d2150" stroke-width="1.1"/><path d="M82 131 L97 130 M82 138 L97 137 M82 145 L98 144" stroke="#1d2150" stroke-width="1"/><path d="M101 137 L101 153" stroke="#1d2150" stroke-width="6.6" stroke-linecap="round"/><circle cx="99" cy="134.5" r="3" fill="#fff" stroke="#1d2150" stroke-width="1"/><circle cx="103" cy="134.5" r="3" fill="#fff" stroke="#1d2150" stroke-width="1"/><path d="M101 137 L101 153" stroke="#fff" stroke-width="4.4" stroke-linecap="round"/><path d="M50 152 C48 140 48 126 51 120 C53 116 58 114 64 116 L67 152 Z" fill="#f5a2d0" stroke="#1d2150" stroke-width="1.1"/><circle cx="52" cy="121" r="1.6" fill="#f5a2d0" stroke="#1d2150" stroke-width="0.8"/><circle cx="49.5" cy="130" r="1.6" fill="#f5a2d0" stroke="#1d2150" stroke-width="0.8"/><path d="M87 103 C94 108 101 118 100 129" stroke="#1d2150" stroke-width="9" stroke-linecap="round" fill="none"/><path d="M87 103 C94 108 101 118 100 129" stroke="#fff" stroke-width="6.6" stroke-linecap="round" fill="none"/><path d="M62 152 C60 136 61 121 66 115 C71 111 80 111 84 116 C87 124 87 140 85 152 Z" fill="#f7a6d2" stroke="#1d2150" stroke-width="1.2"/><path d="M72.5 128 a2.6 2.6 0 1 0 3.5 3.5 M72.5 141 a2.6 2.6 0 1 0 3.5 3.5" fill="none" stroke="#1d2150" stroke-width="1"/><path d="M83 112 C86 106 92 106 94 112 C96 118 92 124 88 124 C84 122 82 118 83 112Z" fill="#fff" stroke="#1d2150" stroke-width="1.1"/><path d="M43 48L50.5 62" stroke="#1d2150" stroke-width="6.2" stroke-linecap="round"/><circle cx="40.8" cy="49.2" r="3.4" fill="#fff" stroke="#1d2150" stroke-width="1"/><circle cx="45.2" cy="46.4" r="3.4" fill="#fff" stroke="#1d2150" stroke-width="1"/><path d="M43 48L50.5 62" stroke="#fff" stroke-width="4.2" stroke-linecap="round"/><g transform="rotate(-12 35 41)"><ellipse cx="35" cy="43" rx="10.8" ry="5.4" fill="#fff" stroke="#1d2150" stroke-width="1.1"/><ellipse cx="35.5" cy="42.5" rx="5.4" ry="2" fill="#fff" stroke="#1d2150" stroke-width="1"/><ellipse cx="33" cy="36" rx="8.8" ry="4.5" fill="#f4a6d2" stroke="#1d2150" stroke-width="0.9"/><ellipse cx="33.5" cy="35.6" rx="4.2" ry="1.6" fill="#fff" stroke="#1d2150" stroke-width="0.9"/></g><ellipse cx="123" cy="45.5" rx="11" ry="7" transform="rotate(-58 123 45.5)" fill="#fff" stroke="#1d2150" stroke-width="1.1"/><ellipse cx="123.5" cy="45" rx="5.6" ry="2.6" transform="rotate(-58 123.5 45)" fill="#fff" stroke="#1d2150" stroke-width="1"/><ellipse cx="130.5" cy="39.5" rx="9.6" ry="6.2" transform="rotate(-58 130.5 39.5)" fill="#f4a6d2" stroke="#1d2150" stroke-width="0.9"/><ellipse cx="131" cy="39" rx="4.8" ry="2.2" transform="rotate(-58 131 39)" fill="#fff" stroke="#1d2150" stroke-width="0.9"/><path d="M39.5 77 C40 60 55 50.5 76 50.5 C96 50.5 110 61 110.8 76 C111 86 108 94 104 99 C102 104 98 106 94 105 C91 110 87 112 83 110 C80 114 75 114 72 111 C69 114 64 114 61 110 C57 113 52 111 51 107 C47 108 44 105 45 101 C42 100 41 98 42 96 C37 97 35 93 36.5 90 C38 87 40 87 41.5 87 C39.5 84 39 81 39.5 77 Z" fill="#fff" stroke="#1d2150" stroke-width="1.3"/><path d="M102 78 L109 75.5 M103 82 L109 84" stroke="#1d2150" stroke-width="1"/><ellipse cx="100" cy="66.5" rx="4.2" ry="3.6" fill="#1d2150"/><path d="M113 52L101 65.5" stroke="#1d2150" stroke-width="6.2" stroke-linecap="round"/><circle cx="110.8" cy="53.2" r="3.4" fill="#fff" stroke="#1d2150" stroke-width="1"/><circle cx="115.2" cy="50.4" r="3.4" fill="#fff" stroke="#1d2150" stroke-width="1"/><path d="M113 52L101 65.5" stroke="#fff" stroke-width="4.2" stroke-linecap="round"/><ellipse cx="53" cy="81.5" rx="9.3" ry="11.3" fill="#22235e"/><circle cx="84.4" cy="81.5" r="14.3" fill="#22235e"/><path d="M54 70 L58.2 77.5 L62.5 73 Z M89.5 67 L92.8 75 L98.6 70.5 Z" fill="#fff"/><path d="M48.2 73.5 A8.5 10.5 0 0 0 48.2 89.5" fill="none" stroke="#7fdde6" stroke-width="2.4"/><path d="M76.5 70 A12 12 0 0 0 76.5 93" fill="none" stroke="#7fdde6" stroke-width="3.4"/><path d="M51.5 85.2l4 4m0-4l-4 4M81 87.6l4.4 4.4m0-4.4l-4.4 4.4" stroke="#f39ac8" stroke-width="1.8"/><path d="M62.5 91 C63.5 88.5 68 88.5 69 91 C69.5 93 68 96 66 97.5 C64 96 62 93 62.5 91Z" fill="#1d2150"/><path d="M57 106 L58 110 M66 107 L66.5 111 M76 107 L76 111" stroke="#1d2150" stroke-width="0.9"/></g></svg><div class="r" style="left:9.7px;top:140.9px;width:15px;height:15px;border:1.6px solid #111a2a;border-radius:3px;background:#b9d8f0"></div><svg style="left:12.7px;top:143.9px" width="9" height="9" viewBox="0 0 9 9"><circle cx="4.5" cy="4" r="3.2" fill="#fff" stroke="#334" stroke-width="0.6"/><circle cx="3.3" cy="4" r="1" fill="#334"/><circle cx="5.8" cy="4" r="1.1" fill="#334"/><rect x="2.5" y="7" width="4" height="2" fill="#e9a"/></svg><div class="r" style="left:28.2px;top:140.9px;width:14.5px;height:15px;border:1.4px solid #fff;border-radius:3px;background:#bfe8b0"></div><svg style="left:31.2px;top:143.9px" width="9" height="9" viewBox="0 0 9 9"><circle cx="4.5" cy="4.5" r="3" fill="#fff" stroke="#555" stroke-width="0.6"/><circle cx="3.4" cy="4.3" r="0.9" fill="#444"/><circle cx="5.6" cy="4.3" r="0.9" fill="#444"/></svg><div class="r" style="left:46.099999999999994px;top:140.9px;width:14px;height:15px;border:1.2px solid #fff;border-radius:3px;background:#f4f4f4"></div><svg style="left:50.099999999999994px;top:143.9px" width="6" height="9" viewBox="0 0 6 9"><path d="M3 0L0 4.6L3 3.4Z" fill="#f5b63b"/><path d="M3 0L6 4.6L3 3.4Z" fill="#ea5e8e"/><path d="M0 4.6L3 3.4L3 6.1Z" fill="#45c27a"/><path d="M6 4.6L3 3.4L3 6.1Z" fill="#7c62dc"/><path d="M0 5.3L3 9L3 6.9Z" fill="#3fb6e6"/><path d="M6 5.3L3 9L3 6.9Z" fill="#3a78e0"/></svg><div class="r" style="left:106.2px;top:-0.5px;width:20px;height:20px;background:#f8b517;border:1.4px solid #161616;border-radius:2px"></div><svg style="left:110.2px;top:3.5px" width="12" height="12" viewBox="0 0 12 12" fill="none" stroke="#161616" stroke-width="0.95" stroke-linecap="round" stroke-linejoin="round"><path d="M5.5 9.5H2.5V3H9.5V5.5M2.5 5H9.5M4.2 1.8V3.4M7.8 1.8V3.4"/><rect x="6.8" y="7" width="3" height="3" rx="0.6"/></svg><div class="r" style="left:131.5px;top:-0.5px;width:20px;height:20px;background:#3fd0d8;border:1.4px solid #161616;border-radius:2px"></div><svg style="left:135.5px;top:3.5px" width="12" height="12" viewBox="0 0 12 12" fill="none" stroke="#161616" stroke-width="0.95" stroke-linecap="round" stroke-linejoin="round"><path d="M2.5 5.5V4H9.5M8 2.5L9.5 4L8 5.5M9.5 6.5V8H2.5M4 6.5L2.5 8L4 9.5"/></svg><div class="t" style="left:7.10px;top:164.50px;font-size:7.6px;line-height:7.6px;font-weight:700;-webkit-text-stroke:0.15px currentColor;transform:scaleX(1.205);transform-origin:0 0;">Bundle (3 Items)</div><div class="t" style="left:7.07px;top:176.50px;font-size:6.9px;line-height:6.9px;-webkit-text-stroke:0.12px currentColor;color:#222;transform:scaleX(1.145);transform-origin:0 0;">Name Of The NFT 1 #9123</div><svg style="left:106px;top:175.3px" width="8" height="8" viewBox="0 0 8 8"><circle cx="4" cy="4" r="3.9" fill="#ea1581"/><path d="M2.4 4.1L3.6 5.2L5.6 3" fill="none" stroke="#fff" stroke-width="0.8"/></svg><svg style="left:149.2px;top:165.8px" width="6" height="4" viewBox="0 0 6 4"><path d="M0.6 0.8L3 3.1L5.4 0.8" fill="none" stroke="#8a8a8a" stroke-width="0.8"/></svg><div class="r" style="left:7.3px;top:188.5px;width:148.7px;height:44.7px;background:#efefef;border-radius:3px;"></div><div class="t" style="left:10.17px;top:191.50px;font-size:6.4px;line-height:6.4px;font-weight:700;-webkit-text-stroke:0.15px currentColor;color:#6a6a6a;transform:scaleX(1.173);transform-origin:0 0;">SWAPS (3)</div><div class="r" style="left:10px;top:202.5px;width:27.2px;height:11.5px;background:#fff;border-radius:3px"></div><svg style="left:14.8px;top:204.3px" width="5.7" height="8.3" viewBox="0 0 6 9"><path d="M3 0L0 4.6L3 3.4Z" fill="#f5b63b"/><path d="M3 0L6 4.6L3 3.4Z" fill="#ea5e8e"/><path d="M0 4.6L3 3.4L3 6.1Z" fill="#45c27a"/><path d="M6 4.6L3 3.4L3 6.1Z" fill="#7c62dc"/><path d="M0 5.3L3 9L3 6.9Z" fill="#3fb6e6"/><path d="M6 5.3L3 9L3 6.9Z" fill="#3a78e0"/></svg><div class="t" style="left:23.81px;top:205.50px;font-size:6.6px;line-height:6.6px;-webkit-text-stroke:0.12px currentColor;color:#222;transform:scaleX(1.173);transform-origin:0 0;">75</div><div class="r" style="left:42.5px;top:202.5px;width:93.7px;height:11.5px;background:#fff;border-radius:3px"></div><svg style="left:47.8px;top:204.3px" width="5.7" height="8.3" viewBox="0 0 6 9"><path d="M3 0L0 4.6L3 3.4Z" fill="#f5b63b"/><path d="M3 0L6 4.6L3 3.4Z" fill="#ea5e8e"/><path d="M0 4.6L3 3.4L3 6.1Z" fill="#45c27a"/><path d="M6 4.6L3 3.4L3 6.1Z" fill="#7c62dc"/><path d="M0 5.3L3 9L3 6.9Z" fill="#3fb6e6"/><path d="M6 5.3L3 9L3 6.9Z" fill="#3a78e0"/></svg><div class="t" style="left:55.34px;top:205.50px;font-size:6.6px;line-height:6.6px;-webkit-text-stroke:0.12px currentColor;color:#222;transform:scaleX(1.406);transform-origin:0 0;">20 +</div><svg style="left:75.6px;top:204.3px" width="5.7" height="8.3" viewBox="0 0 6 9"><path d="M3 0L0 4.6L3 3.4Z" fill="#f5b63b"/><path d="M3 0L6 4.6L3 3.4Z" fill="#ea5e8e"/><path d="M0 4.6L3 3.4L3 6.1Z" fill="#45c27a"/><path d="M6 4.6L3 3.4L3 6.1Z" fill="#7c62dc"/><path d="M0 5.3L3 9L3 6.9Z" fill="#3fb6e6"/><path d="M6 5.3L3 9L3 6.9Z" fill="#3a78e0"/></svg><div class="t" style="left:83.34px;top:205.50px;font-size:6.6px;line-height:6.6px;-webkit-text-stroke:0.12px currentColor;color:#222;transform:scaleX(1.221);transform-origin:0 0;">40 in 30 days</div><div class="r" style="left:152.5px;top:205.5px;width:2px;height:10.8px;background:#8a8a8a;border-radius:1px;"></div><div class="r" style="left:10px;top:218px;width:119.2px;height:12.2px;background:#fff;border-radius:3px"></div><div class="t" style="left:14.86px;top:220.50px;font-size:6.6px;line-height:6.6px;-webkit-text-stroke:0.12px currentColor;color:#222;transform:scaleX(1.116);transform-origin:0 0;">WoW (any) + BAYC (any) +</div><svg style="left:107.2px;top:219.8px" width="5.7" height="8.3" viewBox="0 0 6 9"><path d="M3 0L0 4.6L3 3.4Z" fill="#f5b63b"/><path d="M3 0L6 4.6L3 3.4Z" fill="#ea5e8e"/><path d="M0 4.6L3 3.4L3 6.1Z" fill="#45c27a"/><path d="M6 4.6L3 3.4L3 6.1Z" fill="#7c62dc"/><path d="M0 5.3L3 9L3 6.9Z" fill="#3fb6e6"/><path d="M6 5.3L3 9L3 6.9Z" fill="#3a78e0"/></svg><div class="t" style="left:114.50px;top:220.50px;font-size:6.6px;line-height:6.6px;-webkit-text-stroke:0.12px currentColor;color:#222;transform:scaleX(1.424);transform-origin:0 0;">10</div><div class="r" style="left:7.3px;top:239.5px;width:148.7px;height:44.7px;background:#efefef;border-radius:3px;"></div><div class="t" style="left:9.91px;top:243.50px;font-size:6.4px;line-height:6.4px;font-weight:700;-webkit-text-stroke:0.15px currentColor;color:#6a6a6a;transform:scaleX(1.186);transform-origin:0 0;">INTERESTED IN</div><div class="r" style="left:9.9px;top:253.2px;width:23.700000000000003px;height:12.1px;background:#fff;border-radius:3px"></div><div class="t" style="left:14.30px;top:256.50px;font-size:6.6px;line-height:6.6px;-webkit-text-stroke:0.12px currentColor;color:#222;transform:scaleX(1.136);transform-origin:0 0;">ETH</div><div class="r" style="left:39px;top:253.2px;width:29.200000000000003px;height:12.1px;background:#fff;border-radius:3px"></div><div class="t" style="left:43.29px;top:256.50px;font-size:6.6px;line-height:6.6px;-webkit-text-stroke:0.12px currentColor;color:#222;transform:scaleX(1.150);transform-origin:0 0;">BAYC</div><div class="r" style="left:73.5px;top:253.2px;width:39.0px;height:12.1px;background:#fff;border-radius:3px"></div><div class="t" style="left:78.39px;top:256.50px;font-size:6.6px;line-height:6.6px;-webkit-text-stroke:0.12px currentColor;color:#222;transform:scaleX(1.253);transform-origin:0 0;">Clone-x</div><div class="r" style="left:117.5px;top:253.2px;width:28.900000000000006px;height:12.1px;background:#fff;border-radius:3px"></div><div class="t" style="left:122.30px;top:256.50px;font-size:6.6px;line-height:6.6px;-webkit-text-stroke:0.12px currentColor;color:#222;transform:scaleX(1.184);transform-origin:0 0;">Azuki</div><div class="r" style="left:9.9px;top:268.5px;width:137.8px;height:12.8px;background:#fff;border-radius:3px"></div><div class="t" style="left:14.86px;top:271.50px;font-size:6.6px;line-height:6.6px;-webkit-text-stroke:0.12px currentColor;color:#222;transform:scaleX(1.173);transform-origin:0 0;">World Of Women (Background : pink)</div></div><div class="r" style="left:375.5px;top:475.5px;width:164px;height:291px"><div class="r" style="left:0;top:0;width:164px;height:291px;border:1px solid #bbb;border-radius:5px;background:#fff"></div><svg style="left:7.5px;top:6.5px" width="149" height="150" viewBox="0 0 149 150"><defs><clipPath id="ca"><rect width="149" height="150" rx="3"/></clipPath><linearGradient id="abg" x1="0" y1="0" x2="1" y2="1"><stop offset="0" stop-color="#8b98ef"/><stop offset="0.48" stop-color="#92e4f7"/><stop offset="1" stop-color="#8a98ee"/></linearGradient><linearGradient id="ahd" x1="0" y1="0" x2="0" y2="1"><stop offset="0" stop-color="#a8ccb0"/><stop offset="1" stop-color="#96bba0"/></linearGradient></defs><g clip-path="url(#ca)"><rect width="149" height="150" fill="url(#abg)"/><path d="M18 152 C22 132 34 118 46 113 C58 108 90 108 100 113 C114 120 126 134 132 152 Z" fill="url(#ahd)"/><path d="M108 132 C114 134 120 142 122 152 L108 152 Z" fill="#8fd0e8" opacity="0.7"/><path d="M62 98 L88 98 L90 118 C82 124 70 124 62 118 Z" fill="#8a5038"/><path d="M68 108 C72 104 78 106 80 112 C76 116 70 116 68 108Z" fill="#d9a27c"/><path d="M44 70 C44 56 58 44 76 44 C96 44 108 56 107 72 C106 86 100 98 92 106 C86 112 80 114 75 112 C64 106 56 98 50 90 C44 91 38 86 38 79 C38 73 41 70 44 70Z" fill="#9a5e44"/><path d="M74 52 C80 46 92 48 95 56 C92 63 84 64 78 60 C76 58 74 56 74 52Z M50 80 C54 76 62 78 64 86 C64 94 58 96 54 94 C50 90 48 86 50 80Z M70 96 C74 92 84 94 88 98 C90 104 84 110 78 110 C72 108 68 102 70 96Z M86 84 C90 82 96 84 96 88 C94 92 88 92 86 84Z M66 112 C70 110 78 112 80 118 C76 122 70 122 66 118Z" fill="#dcaa86"/><path d="M42 112 C50 106 60 106 64 110 C70 116 76 120 82 122 C88 118 94 110 100 110 C106 110 110 116 112 122 C100 128 60 128 42 120 Z" fill="#a7ceb2"/><path transform="translate(0 1.8)" d="M31 66 C28 45 36 22 54 14 C62 11 72 13 77 18 C84 13 96 14 104 20 C114 28 118 48 113 72 L106 70 C104 60 100 52 96 46 C88 44 80 46 74 50 C72 56 71 62 71 67 C64 66 56 70 48 74 L42 74 C36 73 32 70 31 66 Z" fill="#1c1c1e"/><path d="M46 32 C54 24 66 22 74 28 M84 24 C94 22 104 30 108 40 M38 48 C42 40 50 34 58 34 M60 40 C64 50 66 58 68 64 M96 30 C100 40 104 52 106 64" fill="none" stroke="#4a4a4e" stroke-width="1.1"/><path d="M46 76 L110 72 M50 86 L108 90" stroke="#222" stroke-width="1.4"/><circle cx="68" cy="77" r="10" fill="#c9c9cc" stroke="#333" stroke-width="1.4"/><path d="M63 73 L73 81 M73 73 L63 81" stroke="#777" stroke-width="1.4"/><ellipse cx="96.5" cy="78.5" rx="6.5" ry="5.5" fill="#f2f2f6"/><circle cx="95" cy="79" r="3.6" fill="#6a58d8"/><circle cx="95" cy="79" r="1.4" fill="#fff"/></g></svg><div class="r" style="left:9.7px;top:140.9px;width:15px;height:15px;border:1.6px solid #0b1a2a;border-radius:3px;background:#9fb0e8"></div><svg style="left:11.299999999999999px;top:142.5px" width="12" height="12" viewBox="0 0 12 12"><ellipse cx="6" cy="4.5" rx="3.6" ry="3.2" fill="#1c1c1c"/><ellipse cx="6" cy="6.5" rx="2.2" ry="2.6" fill="#8a5a40"/><path d="M2 12 C3 9.5 9 9.5 10 12Z" fill="#9cc3a6"/></svg><div class="r" style="left:27.9px;top:140.9px;width:15px;height:15px;border:1.5px solid #fff;border-radius:3px;background:#8aa0d8"></div><svg style="left:29.4px;top:142.4px" width="12" height="12" viewBox="0 0 12 12"><ellipse cx="6" cy="4" rx="4" ry="3" fill="#3d7a3a"/><ellipse cx="6" cy="6.5" rx="2.4" ry="2.8" fill="#7a4a30"/><path d="M1.5 12 C3 9.5 9 9.5 10.5 12Z" fill="#222"/></svg><div class="r" style="left:131.5px;top:-0.5px;width:20px;height:20px;background:#9b8af5;border:1.4px solid #161616;border-radius:2px"></div><svg style="left:135.5px;top:3.5px" width="12" height="12" viewBox="0 0 12 12" fill="none" stroke="#161616" stroke-width="0.95" stroke-linecap="round" stroke-linejoin="round"><circle cx="6" cy="6" r="4.3"/><path d="M5.5 3.8V6.2L7.2 7.8"/></svg><div class="t" style="left:7.10px;top:164.50px;font-size:7.6px;line-height:7.6px;font-weight:700;-webkit-text-stroke:0.15px currentColor;transform:scaleX(1.205);transform-origin:0 0;">Bundle (3 Items)</div><div class="t" style="left:7.07px;top:176.50px;font-size:6.9px;line-height:6.9px;-webkit-text-stroke:0.12px currentColor;color:#222;transform:scaleX(1.145);transform-origin:0 0;">Name Of The NFT 1 #9123</div><svg style="left:106px;top:175.3px" width="8" height="8" viewBox="0 0 8 8"><circle cx="4" cy="4" r="3.9" fill="#ea1581"/><path d="M2.4 4.1L3.6 5.2L5.6 3" fill="none" stroke="#fff" stroke-width="0.8"/></svg><svg style="left:149.2px;top:165.8px" width="6" height="4" viewBox="0 0 6 4"><path d="M0.6 0.8L3 3.1L5.4 0.8" fill="none" stroke="#8a8a8a" stroke-width="0.8"/></svg><div class="r" style="left:7.9px;top:188.6px;width:148.3px;height:45.3px;background:#efefef;border-radius:3px;"></div><div class="t" style="left:10.20px;top:193.50px;font-size:6.3px;line-height:6.3px;font-weight:700;-webkit-text-stroke:0.15px currentColor;color:#6a6a6a;transform:scaleX(1.204);transform-origin:0 0;">OPTION PRICE</div><div class="t" style="left:84.18px;top:193.50px;font-size:6.3px;line-height:6.3px;font-weight:700;-webkit-text-stroke:0.15px currentColor;color:#6a6a6a;transform:scaleX(1.186);transform-origin:0 0;">SWAP PRICE</div><div class="r" style="left:10.5px;top:204.9px;width:70.1px;height:24.3px;background:#fff;border-radius:2px;"></div><div class="r" style="left:84px;top:204.9px;width:69.4px;height:24.3px;background:#fff;border-radius:2px;"></div><div class="t" style="left:17.85px;top:213.50px;font-size:6.8px;line-height:6.8px;-webkit-text-stroke:0.12px currentColor;color:#222;transform:scaleX(1.320);transform-origin:0 0;">20</div><div class="t" style="left:91.42px;top:213.50px;font-size:6.8px;line-height:6.8px;-webkit-text-stroke:0.12px currentColor;color:#222;transform:scaleX(1.310);transform-origin:0 0;">40</div><svg style="left:67.3px;top:209.6px" width="7.4" height="12.7" viewBox="0 0 6 9"><path d="M3 0L0 4.6L3 3.4Z" fill="#f5b63b"/><path d="M3 0L6 4.6L3 3.4Z" fill="#ea5e8e"/><path d="M0 4.6L3 3.4L3 6.1Z" fill="#45c27a"/><path d="M6 4.6L3 3.4L3 6.1Z" fill="#7c62dc"/><path d="M0 5.3L3 9L3 6.9Z" fill="#3fb6e6"/><path d="M6 5.3L3 9L3 6.9Z" fill="#3a78e0"/></svg><svg style="left:140.6px;top:209.6px" width="7.6" height="12.2" viewBox="0 0 6 9"><path d="M3 0L0 4.6L3 3.4Z" fill="#f5b63b"/><path d="M3 0L6 4.6L3 3.4Z" fill="#ea5e8e"/><path d="M0 4.6L3 3.4L3 6.1Z" fill="#45c27a"/><path d="M6 4.6L3 3.4L3 6.1Z" fill="#7c62dc"/><path d="M0 5.3L3 9L3 6.9Z" fill="#3fb6e6"/><path d="M6 5.3L3 9L3 6.9Z" fill="#3a78e0"/></svg><div class="t" style="left:7.30px;top:240.50px;font-size:6.3px;line-height:6.3px;font-weight:700;-webkit-text-stroke:0.15px currentColor;color:#6a6a6a;transform:scaleX(1.197);transform-origin:0 0;">OPTION EXPIRES IN</div><div class="r" style="left:7.9px;top:252.2px;width:148.1px;height:31.6px;border:1px solid #e9e9e9;border-radius:3px;background:#fff"></div><div class="t" style="left:18.93px;top:259.50px;font-size:6.8px;line-height:6.8px;-webkit-text-stroke:0.12px currentColor;color:#333;transform:scaleX(1.342);transform-origin:0 0;">03</div><div class="t" style="left:15.53px;top:270.50px;font-size:6.8px;line-height:6.8px;-webkit-text-stroke:0.12px currentColor;color:#b0b0b0;transform:scaleX(1.178);transform-origin:0 0;">days</div><div class="t" style="left:49.84px;top:259.50px;font-size:6.8px;line-height:6.8px;-webkit-text-stroke:0.12px currentColor;color:#333;transform:scaleX(1.301);transform-origin:0 0;">18</div><div class="t" style="left:44.42px;top:270.50px;font-size:6.8px;line-height:6.8px;-webkit-text-stroke:0.12px currentColor;color:#b0b0b0;transform:scaleX(1.216);transform-origin:0 0;">hours</div><div class="t" style="left:86.33px;top:259.50px;font-size:6.8px;line-height:6.8px;-webkit-text-stroke:0.12px currentColor;color:#333;transform:scaleX(1.261);transform-origin:0 0;">45</div><div class="t" style="left:78.28px;top:270.50px;font-size:6.8px;line-height:6.8px;-webkit-text-stroke:0.12px currentColor;color:#b0b0b0;transform:scaleX(1.060);transform-origin:0 0;">minutes</div><div class="t" style="left:128.35px;top:259.50px;font-size:6.8px;line-height:6.8px;-webkit-text-stroke:0.12px currentColor;color:#333;transform:scaleX(1.285);transform-origin:0 0;">38</div><div class="t" style="left:118.56px;top:270.50px;font-size:6.8px;line-height:6.8px;-webkit-text-stroke:0.12px currentColor;color:#b0b0b0;transform:scaleX(1.157);transform-origin:0 0;">seconds</div></div><div class="r" style="left:553.5px;top:475.5px;width:164px;height:291px"><div class="r" style="left:0;top:0;width:164px;height:291px;border:1px solid #bbb;border-radius:5px;background:#fff"></div><svg style="left:7.5px;top:6.5px" width="149" height="150" viewBox="0 0 149 150"><defs><clipPath id="ck"><rect width="149" height="150" rx="3"/></clipPath></defs><g clip-path="url(#ck)"><rect width="149" height="150" fill="#ade3f7"/><path d="M8 152 C12 146 30 141 50 140 L54 152 Z" fill="#f7a8d3" stroke="#1d2150" stroke-width="1.1"/><path d="M80 124 L97 124 L98 152 L80 152 Z" fill="#fff" stroke="#1d2150" stroke-width="1.1"/><path d="M82 131 L97 130 M82 138 L97 137 M82 145 L98 144" stroke="#1d2150" stroke-width="1"/><path d="M101 137 L101 153" stroke="#1d2150" stroke-width="6.6" stroke-linecap="round"/><circle cx="99" cy="134.5" r="3" fill="#fff" stroke="#1d2150" stroke-width="1"/><circle cx="103" cy="134.5" r="3" fill="#fff" stroke="#1d2150" stroke-width="1"/><path d="M101 137 L101 153" stroke="#fff" stroke-width="4.4" stroke-linecap="round"/><path d="M50 152 C48 140 48 126 51 120 C53 116 58 114 64 116 L67 152 Z" fill="#f5a2d0" stroke="#1d2150" stroke-width="1.1"/><circle cx="52" cy="121" r="1.6" fill="#f5a2d0" stroke="#1d2150" stroke-width="0.8"/><circle cx="49.5" cy="130" r="1.6" fill="#f5a2d0" stroke="#1d2150" stroke-width="0.8"/><path d="M87 103 C94 108 101 118 100 129" stroke="#1d2150" stroke-width="9" stroke-linecap="round" fill="none"/><path d="M87 103 C94 108 101 118 100 129" stroke="#fff" stroke-width="6.6" stroke-linecap="round" fill="none"/><path d="M62 152 C60 136 61 121 66 115 C71 111 80 111 84 116 C87 124 87 140 85 152 Z" fill="#f7a6d2" stroke="#1d2150" stroke-width="1.2"/><path d="M72.5 128 a2.6 2.6 0 1 0 3.5 3.5 M72.5 141 a2.6 2.6 0 1 0 3.5 3.5" fill="none" stroke="#1d2150" stroke-width="1"/><path d="M83 112 C86 106 92 106 94 112 C96 118 92 124 88 124 C84 122 82 118 83 112Z" fill="#fff" stroke="#1d2150" stroke-width="1.1"/><path d="M43 48L50.5 62" stroke="#1d2150" stroke-width="6.2" stroke-linecap="round"/><circle cx="40.8" cy="49.2" r="3.4" fill="#fff" stroke="#1d2150" stroke-width="1"/><circle cx="45.2" cy="46.4" r="3.4" fill="#fff" stroke="#1d2150" stroke-width="1"/><path d="M43 48L50.5 62" stroke="#fff" stroke-width="4.2" stroke-linecap="round"/><g transform="rotate(-12 35 41)"><ellipse cx="35" cy="43" rx="10.8" ry="5.4" fill="#fff" stroke="#1d2150" stroke-width="1.1"/><ellipse cx="35.5" cy="42.5" rx="5.4" ry="2" fill="#fff" stroke="#1d2150" stroke-width="1"/><ellipse cx="33" cy="36" rx="8.8" ry="4.5" fill="#f4a6d2" stroke="#1d2150" stroke-width="0.9"/><ellipse cx="33.5" cy="35.6" rx="4.2" ry="1.6" fill="#fff" stroke="#1d2150" stroke-width="0.9"/></g><ellipse cx="123" cy="45.5" rx="11" ry="7" transform="rotate(-58 123 45.5)" fill="#fff" stroke="#1d2150" stroke-width="1.1"/><ellipse cx="123.5" cy="45" rx="5.6" ry="2.6" transform="rotate(-58 123.5 45)" fill="#fff" stroke="#1d2150" stroke-width="1"/><ellipse cx="130.5" cy="39.5" rx="9.6" ry="6.2" transform="rotate(-58 130.5 39.5)" fill="#f4a6d2" stroke="#1d2150" stroke-width="0.9"/><ellipse cx="131" cy="39" rx="4.8" ry="2.2" transform="rotate(-58 131 39)" fill="#fff" stroke="#1d2150" stroke-width="0.9"/><path d="M39.5 77 C40 60 55 50.5 76 50.5 C96 50.5 110 61 110.8 76 C111 86 108 94 104 99 C102 104 98 106 94 105 C91 110 87 112 83 110 C80 114 75 114 72 111 C69 114 64 114 61 110 C57 113 52 111 51 107 C47 108 44 105 45 101 C42 100 41 98 42 96 C37 97 35 93 36.5 90 C38 87 40 87 41.5 87 C39.5 84 39 81 39.5 77 Z" fill="#fff" stroke="#1d2150" stroke-width="1.3"/><path d="M102 78 L109 75.5 M103 82 L109 84" stroke="#1d2150" stroke-width="1"/><ellipse cx="100" cy="66.5" rx="4.2" ry="3.6" fill="#1d2150"/><path d="M113 52L101 65.5" stroke="#1d2150" stroke-width="6.2" stroke-linecap="round"/><circle cx="110.8" cy="53.2" r="3.4" fill="#fff" stroke="#1d2150" stroke-width="1"/><circle cx="115.2" cy="50.4" r="3.4" fill="#fff" stroke="#1d2150" stroke-width="1"/><path d="M113 52L101 65.5" stroke="#fff" stroke-width="4.2" stroke-linecap="round"/><ellipse cx="53" cy="81.5" rx="9.3" ry="11.3" fill="#22235e"/><circle cx="84.4" cy="81.5" r="14.3" fill="#22235e"/><path d="M54 70 L58.2 77.5 L62.5 73 Z M89.5 67 L92.8 75 L98.6 70.5 Z" fill="#fff"/><path d="M48.2 73.5 A8.5 10.5 0 0 0 48.2 89.5" fill="none" stroke="#7fdde6" stroke-width="2.4"/><path d="M76.5 70 A12 12 0 0 0 76.5 93" fill="none" stroke="#7fdde6" stroke-width="3.4"/><path d="M51.5 85.2l4 4m0-4l-4 4M81 87.6l4.4 4.4m0-4.4l-4.4 4.4" stroke="#f39ac8" stroke-width="1.8"/><path d="M62.5 91 C63.5 88.5 68 88.5 69 91 C69.5 93 68 96 66 97.5 C64 96 62 93 62.5 91Z" fill="#1d2150"/><path d="M57 106 L58 110 M66 107 L66.5 111 M76 107 L76 111" stroke="#1d2150" stroke-width="0.9"/></g></svg><div class="r" style="left:9.7px;top:140.9px;width:15px;height:15px;border:1.6px solid #111a2a;border-radius:3px;background:#b9d8f0"></div><svg style="left:12.7px;top:143.9px" width="9" height="9" viewBox="0 0 9 9"><circle cx="4.5" cy="4" r="3.2" fill="#fff" stroke="#334" stroke-width="0.6"/><circle cx="3.3" cy="4" r="1" fill="#334"/><circle cx="5.8" cy="4" r="1.1" fill="#334"/><rect x="2.5" y="7" width="4" height="2" fill="#e9a"/></svg><div class="r" style="left:28.2px;top:140.9px;width:14.5px;height:15px;border:1.4px solid #fff;border-radius:3px;background:#bfe8b0"></div><svg style="left:31.2px;top:143.9px" width="9" height="9" viewBox="0 0 9 9"><circle cx="4.5" cy="4.5" r="3" fill="#fff" stroke="#555" stroke-width="0.6"/><circle cx="3.4" cy="4.3" r="0.9" fill="#444"/><circle cx="5.6" cy="4.3" r="0.9" fill="#444"/></svg><div class="r" style="left:46.099999999999994px;top:140.9px;width:14px;height:15px;border:1.2px solid #fff;border-radius:3px;background:#f4f4f4"></div><svg style="left:50.099999999999994px;top:143.9px" width="6" height="9" viewBox="0 0 6 9"><path d="M3 0L0 4.6L3 3.4Z" fill="#f5b63b"/><path d="M3 0L6 4.6L3 3.4Z" fill="#ea5e8e"/><path d="M0 4.6L3 3.4L3 6.1Z" fill="#45c27a"/><path d="M6 4.6L3 3.4L3 6.1Z" fill="#7c62dc"/><path d="M0 5.3L3 9L3 6.9Z" fill="#3fb6e6"/><path d="M6 5.3L3 9L3 6.9Z" fill="#3a78e0"/></svg><div class="r" style="left:106.2px;top:-0.5px;width:20px;height:20px;background:#f8b517;border:1.4px solid #161616;border-radius:2px"></div><svg style="left:110.2px;top:3.5px" width="12" height="12" viewBox="0 0 12 12" fill="none" stroke="#161616" stroke-width="0.95" stroke-linecap="round" stroke-linejoin="round"><path d="M5.5 9.5H2.5V3H9.5V5.5M2.5 5H9.5M4.2 1.8V3.4M7.8 1.8V3.4"/><rect x="6.8" y="7" width="3" height="3" rx="0.6"/></svg><div class="r" style="left:131.5px;top:-0.5px;width:20px;height:20px;background:#3fd0d8;border:1.4px solid #161616;border-radius:2px"></div><svg style="left:135.5px;top:3.5px" width="12" height="12" viewBox="0 0 12 12" fill="none" stroke="#161616" stroke-width="0.95" stroke-linecap="round" stroke-linejoin="round"><path d="M2.5 5.5V4H9.5M8 2.5L9.5 4L8 5.5M9.5 6.5V8H2.5M4 6.5L2.5 8L4 9.5"/></svg><div class="t" style="left:7.10px;top:164.50px;font-size:7.6px;line-height:7.6px;font-weight:700;-webkit-text-stroke:0.15px currentColor;transform:scaleX(1.205);transform-origin:0 0;">Bundle (3 Items)</div><div class="t" style="left:7.07px;top:176.50px;font-size:6.9px;line-height:6.9px;-webkit-text-stroke:0.12px currentColor;color:#222;transform:scaleX(1.145);transform-origin:0 0;">Name Of The NFT 1 #9123</div><svg style="left:106px;top:175.3px" width="8" height="8" viewBox="0 0 8 8"><circle cx="4" cy="4" r="3.9" fill="#ea1581"/><path d="M2.4 4.1L3.6 5.2L5.6 3" fill="none" stroke="#fff" stroke-width="0.8"/></svg><svg style="left:149.2px;top:165.8px" width="6" height="4" viewBox="0 0 6 4"><path d="M0.6 0.8L3 3.1L5.4 0.8" fill="none" stroke="#8a8a8a" stroke-width="0.8"/></svg><div class="r" style="left:7.3px;top:188.5px;width:148.7px;height:44.7px;background:#efefef;border-radius:3px;"></div><div class="t" style="left:10.17px;top:191.50px;font-size:6.4px;line-height:6.4px;font-weight:700;-webkit-text-stroke:0.15px currentColor;color:#6a6a6a;transform:scaleX(1.173);transform-origin:0 0;">SWAPS (3)</div><div class="r" style="left:10px;top:202.5px;width:27.2px;height:11.5px;background:#fff;border-radius:3px"></div><svg style="left:14.8px;top:204.3px" width="5.7" height="8.3" viewBox="0 0 6 9"><path d="M3 0L0 4.6L3 3.4Z" fill="#f5b63b"/><path d="M3 0L6 4.6L3 3.4Z" fill="#ea5e8e"/><path d="M0 4.6L3 3.4L3 6.1Z" fill="#45c27a"/><path d="M6 4.6L3 3.4L3 6.1Z" fill="#7c62dc"/><path d="M0 5.3L3 9L3 6.9Z" fill="#3fb6e6"/><path d="M6 5.3L3 9L3 6.9Z" fill="#3a78e0"/></svg><div class="t" style="left:23.81px;top:205.50px;font-size:6.6px;line-height:6.6px;-webkit-text-stroke:0.12px currentColor;color:#222;transform:scaleX(1.173);transform-origin:0 0;">75</div><div class="r" style="left:42.5px;top:202.5px;width:93.7px;height:11.5px;background:#fff;border-radius:3px"></div><svg style="left:47.8px;top:204.3px" width="5.7" height="8.3" viewBox="0 0 6 9"><path d="M3 0L0 4.6L3 3.4Z" fill="#f5b63b"/><path d="M3 0L6 4.6L3 3.4Z" fill="#ea5e8e"/><path d="M0 4.6L3 3.4L3 6.1Z" fill="#45c27a"/><path d="M6 4.6L3 3.4L3 6.1Z" fill="#7c62dc"/><path d="M0 5.3L3 9L3 6.9Z" fill="#3fb6e6"/><path d="M6 5.3L3 9L3 6.9Z" fill="#3a78e0"/></svg><div class="t" style="left:55.34px;top:205.50px;font-size:6.6px;line-height:6.6px;-webkit-text-stroke:0.12px currentColor;color:#222;transform:scaleX(1.406);transform-origin:0 0;">20 +</div><svg style="left:75.6px;top:204.3px" width="5.7" height="8.3" viewBox="0 0 6 9"><path d="M3 0L0 4.6L3 3.4Z" fill="#f5b63b"/><path d="M3 0L6 4.6L3 3.4Z" fill="#ea5e8e"/><path d="M0 4.6L3 3.4L3 6.1Z" fill="#45c27a"/><path d="M6 4.6L3 3.4L3 6.1Z" fill="#7c62dc"/><path d="M0 5.3L3 9L3 6.9Z" fill="#3fb6e6"/><path d="M6 5.3L3 9L3 6.9Z" fill="#3a78e0"/></svg><div class="t" style="left:83.34px;top:205.50px;font-size:6.6px;line-height:6.6px;-webkit-text-stroke:0.12px currentColor;color:#222;transform:scaleX(1.221);transform-origin:0 0;">40 in 30 days</div><div class="r" style="left:152.5px;top:205.5px;width:2px;height:10.8px;background:#8a8a8a;border-radius:1px;"></div><div class="r" style="left:10px;top:218px;width:119.2px;height:12.2px;background:#fff;border-radius:3px"></div><div class="t" style="left:14.86px;top:220.50px;font-size:6.6px;line-height:6.6px;-webkit-text-stroke:0.12px currentColor;color:#222;transform:scaleX(1.116);transform-origin:0 0;">WoW (any) + BAYC (any) +</div><svg style="left:107.2px;top:219.8px" width="5.7" height="8.3" viewBox="0 0 6 9"><path d="M3 0L0 4.6L3 3.4Z" fill="#f5b63b"/><path d="M3 0L6 4.6L3 3.4Z" fill="#ea5e8e"/><path d="M0 4.6L3 3.4L3 6.1Z" fill="#45c27a"/><path d="M6 4.6L3 3.4L3 6.1Z" fill="#7c62dc"/><path d="M0 5.3L3 9L3 6.9Z" fill="#3fb6e6"/><path d="M6 5.3L3 9L3 6.9Z" fill="#3a78e0"/></svg><div class="t" style="left:114.50px;top:220.50px;font-size:6.6px;line-height:6.6px;-webkit-text-stroke:0.12px currentColor;color:#222;transform:scaleX(1.424);transform-origin:0 0;">10</div><div class="r" style="left:7.3px;top:239.5px;width:148.7px;height:44.7px;background:#efefef;border-radius:3px;"></div><div class="t" style="left:9.91px;top:243.50px;font-size:6.4px;line-height:6.4px;font-weight:700;-webkit-text-stroke:0.15px currentColor;color:#6a6a6a;transform:scaleX(1.186);transform-origin:0 0;">INTERESTED IN</div><div class="r" style="left:9.9px;top:253.2px;width:23.700000000000003px;height:12.1px;background:#fff;border-radius:3px"></div><div class="t" style="left:14.30px;top:256.50px;font-size:6.6px;line-height:6.6px;-webkit-text-stroke:0.12px currentColor;color:#222;transform:scaleX(1.136);transform-origin:0 0;">ETH</div><div class="r" style="left:39px;top:253.2px;width:29.200000000000003px;height:12.1px;background:#fff;border-radius:3px"></div><div class="t" style="left:43.29px;top:256.50px;font-size:6.6px;line-height:6.6px;-webkit-text-stroke:0.12px currentColor;color:#222;transform:scaleX(1.150);transform-origin:0 0;">BAYC</div><div class="r" style="left:73.5px;top:253.2px;width:39.0px;height:12.1px;background:#fff;border-radius:3px"></div><div class="t" style="left:78.39px;top:256.50px;font-size:6.6px;line-height:6.6px;-webkit-text-stroke:0.12px currentColor;color:#222;transform:scaleX(1.253);transform-origin:0 0;">Clone-x</div><div class="r" style="left:117.5px;top:253.2px;width:28.900000000000006px;height:12.1px;background:#fff;border-radius:3px"></div><div class="t" style="left:122.30px;top:256.50px;font-size:6.6px;line-height:6.6px;-webkit-text-stroke:0.12px currentColor;color:#222;transform:scaleX(1.184);transform-origin:0 0;">Azuki</div><div class="r" style="left:9.9px;top:268.5px;width:137.8px;height:12.8px;background:#fff;border-radius:3px"></div><div class="t" style="left:14.86px;top:271.50px;font-size:6.6px;line-height:6.6px;-webkit-text-stroke:0.12px currentColor;color:#222;transform:scaleX(1.173);transform-origin:0 0;">World Of Women (Background : pink)</div></div><div class="r" style="left:731.5px;top:475.5px;width:164px;height:291px"><div class="r" style="left:0;top:0;width:164px;height:291px;border:1px solid #bbb;border-radius:5px;background:#fff"></div><svg style="left:7.5px;top:6.5px" width="149" height="150" viewBox="0 0 149 150"><defs><clipPath id="ck"><rect width="149" height="150" rx="3"/></clipPath></defs><g clip-path="url(#ck)"><rect width="149" height="150" fill="#ade3f7"/><path d="M8 152 C12 146 30 141 50 140 L54 152 Z" fill="#f7a8d3" stroke="#1d2150" stroke-width="1.1"/><path d="M80 124 L97 124 L98 152 L80 152 Z" fill="#fff" stroke="#1d2150" stroke-width="1.1"/><path d="M82 131 L97 130 M82 138 L97 137 M82 145 L98 144" stroke="#1d2150" stroke-width="1"/><path d="M101 137 L101 153" stroke="#1d2150" stroke-width="6.6" stroke-linecap="round"/><circle cx="99" cy="134.5" r="3" fill="#fff" stroke="#1d2150" stroke-width="1"/><circle cx="103" cy="134.5" r="3" fill="#fff" stroke="#1d2150" stroke-width="1"/><path d="M101 137 L101 153" stroke="#fff" stroke-width="4.4" stroke-linecap="round"/><path d="M50 152 C48 140 48 126 51 120 C53 116 58 114 64 116 L67 152 Z" fill="#f5a2d0" stroke="#1d2150" stroke-width="1.1"/><circle cx="52" cy="121" r="1.6" fill="#f5a2d0" stroke="#1d2150" stroke-width="0.8"/><circle cx="49.5" cy="130" r="1.6" fill="#f5a2d0" stroke="#1d2150" stroke-width="0.8"/><path d="M87 103 C94 108 101 118 100 129" stroke="#1d2150" stroke-width="9" stroke-linecap="round" fill="none"/><path d="M87 103 C94 108 101 118 100 129" stroke="#fff" stroke-width="6.6" stroke-linecap="round" fill="none"/><path d="M62 152 C60 136 61 121 66 115 C71 111 80 111 84 116 C87 124 87 140 85 152 Z" fill="#f7a6d2" stroke="#1d2150" stroke-width="1.2"/><path d="M72.5 128 a2.6 2.6 0 1 0 3.5 3.5 M72.5 141 a2.6 2.6 0 1 0 3.5 3.5" fill="none" stroke="#1d2150" stroke-width="1"/><path d="M83 112 C86 106 92 106 94 112 C96 118 92 124 88 124 C84 122 82 118 83 112Z" fill="#fff" stroke="#1d2150" stroke-width="1.1"/><path d="M43 48L50.5 62" stroke="#1d2150" stroke-width="6.2" stroke-linecap="round"/><circle cx="40.8" cy="49.2" r="3.4" fill="#fff" stroke="#1d2150" stroke-width="1"/><circle cx="45.2" cy="46.4" r="3.4" fill="#fff" stroke="#1d2150" stroke-width="1"/><path d="M43 48L50.5 62" stroke="#fff" stroke-width="4.2" stroke-linecap="round"/><g transform="rotate(-12 35 41)"><ellipse cx="35" cy="43" rx="10.8" ry="5.4" fill="#fff" stroke="#1d2150" stroke-width="1.1"/><ellipse cx="35.5" cy="42.5" rx="5.4" ry="2" fill="#fff" stroke="#1d2150" stroke-width="1"/><ellipse cx="33" cy="36" rx="8.8" ry="4.5" fill="#f4a6d2" stroke="#1d2150" stroke-width="0.9"/><ellipse cx="33.5" cy="35.6" rx="4.2" ry="1.6" fill="#fff" stroke="#1d2150" stroke-width="0.9"/></g><ellipse cx="123" cy="45.5" rx="11" ry="7" transform="rotate(-58 123 45.5)" fill="#fff" stroke="#1d2150" stroke-width="1.1"/><ellipse cx="123.5" cy="45" rx="5.6" ry="2.6" transform="rotate(-58 123.5 45)" fill="#fff" stroke="#1d2150" stroke-width="1"/><ellipse cx="130.5" cy="39.5" rx="9.6" ry="6.2" transform="rotate(-58 130.5 39.5)" fill="#f4a6d2" stroke="#1d2150" stroke-width="0.9"/><ellipse cx="131" cy="39" rx="4.8" ry="2.2" transform="rotate(-58 131 39)" fill="#fff" stroke="#1d2150" stroke-width="0.9"/><path d="M39.5 77 C40 60 55 50.5 76 50.5 C96 50.5 110 61 110.8 76 C111 86 108 94 104 99 C102 104 98 106 94 105 C91 110 87 112 83 110 C80 114 75 114 72 111 C69 114 64 114 61 110 C57 113 52 111 51 107 C47 108 44 105 45 101 C42 100 41 98 42 96 C37 97 35 93 36.5 90 C38 87 40 87 41.5 87 C39.5 84 39 81 39.5 77 Z" fill="#fff" stroke="#1d2150" stroke-width="1.3"/><path d="M102 78 L109 75.5 M103 82 L109 84" stroke="#1d2150" stroke-width="1"/><ellipse cx="100" cy="66.5" rx="4.2" ry="3.6" fill="#1d2150"/><path d="M113 52L101 65.5" stroke="#1d2150" stroke-width="6.2" stroke-linecap="round"/><circle cx="110.8" cy="53.2" r="3.4" fill="#fff" stroke="#1d2150" stroke-width="1"/><circle cx="115.2" cy="50.4" r="3.4" fill="#fff" stroke="#1d2150" stroke-width="1"/><path d="M113 52L101 65.5" stroke="#fff" stroke-width="4.2" stroke-linecap="round"/><ellipse cx="53" cy="81.5" rx="9.3" ry="11.3" fill="#22235e"/><circle cx="84.4" cy="81.5" r="14.3" fill="#22235e"/><path d="M54 70 L58.2 77.5 L62.5 73 Z M89.5 67 L92.8 75 L98.6 70.5 Z" fill="#fff"/><path d="M48.2 73.5 A8.5 10.5 0 0 0 48.2 89.5" fill="none" stroke="#7fdde6" stroke-width="2.4"/><path d="M76.5 70 A12 12 0 0 0 76.5 93" fill="none" stroke="#7fdde6" stroke-width="3.4"/><path d="M51.5 85.2l4 4m0-4l-4 4M81 87.6l4.4 4.4m0-4.4l-4.4 4.4" stroke="#f39ac8" stroke-width="1.8"/><path d="M62.5 91 C63.5 88.5 68 88.5 69 91 C69.5 93 68 96 66 97.5 C64 96 62 93 62.5 91Z" fill="#1d2150"/><path d="M57 106 L58 110 M66 107 L66.5 111 M76 107 L76 111" stroke="#1d2150" stroke-width="0.9"/></g></svg><div class="r" style="left:9.7px;top:140.9px;width:15px;height:15px;border:1.6px solid #111a2a;border-radius:3px;background:#b9d8f0"></div><svg style="left:12.7px;top:143.9px" width="9" height="9" viewBox="0 0 9 9"><circle cx="4.5" cy="4" r="3.2" fill="#fff" stroke="#334" stroke-width="0.6"/><circle cx="3.3" cy="4" r="1" fill="#334"/><circle cx="5.8" cy="4" r="1.1" fill="#334"/><rect x="2.5" y="7" width="4" height="2" fill="#e9a"/></svg><div class="r" style="left:28.2px;top:140.9px;width:14.5px;height:15px;border:1.4px solid #fff;border-radius:3px;background:#bfe8b0"></div><svg style="left:31.2px;top:143.9px" width="9" height="9" viewBox="0 0 9 9"><circle cx="4.5" cy="4.5" r="3" fill="#fff" stroke="#555" stroke-width="0.6"/><circle cx="3.4" cy="4.3" r="0.9" fill="#444"/><circle cx="5.6" cy="4.3" r="0.9" fill="#444"/></svg><div class="r" style="left:46.099999999999994px;top:140.9px;width:14px;height:15px;border:1.2px solid #fff;border-radius:3px;background:#f4f4f4"></div><svg style="left:50.099999999999994px;top:143.9px" width="6" height="9" viewBox="0 0 6 9"><path d="M3 0L0 4.6L3 3.4Z" fill="#f5b63b"/><path d="M3 0L6 4.6L3 3.4Z" fill="#ea5e8e"/><path d="M0 4.6L3 3.4L3 6.1Z" fill="#45c27a"/><path d="M6 4.6L3 3.4L3 6.1Z" fill="#7c62dc"/><path d="M0 5.3L3 9L3 6.9Z" fill="#3fb6e6"/><path d="M6 5.3L3 9L3 6.9Z" fill="#3a78e0"/></svg><div class="r" style="left:106.2px;top:-0.5px;width:20px;height:20px;background:#f8b517;border:1.4px solid #161616;border-radius:2px"></div><svg style="left:110.2px;top:3.5px" width="12" height="12" viewBox="0 0 12 12" fill="none" stroke="#161616" stroke-width="0.95" stroke-linecap="round" stroke-linejoin="round"><path d="M5.5 9.5H2.5V3H9.5V5.5M2.5 5H9.5M4.2 1.8V3.4M7.8 1.8V3.4"/><rect x="6.8" y="7" width="3" height="3" rx="0.6"/></svg><div class="r" style="left:131.5px;top:-0.5px;width:20px;height:20px;background:#3fd0d8;border:1.4px solid #161616;border-radius:2px"></div><svg style="left:135.5px;top:3.5px" width="12" height="12" viewBox="0 0 12 12" fill="none" stroke="#161616" stroke-width="0.95" stroke-linecap="round" stroke-linejoin="round"><path d="M2.5 5.5V4H9.5M8 2.5L9.5 4L8 5.5M9.5 6.5V8H2.5M4 6.5L2.5 8L4 9.5"/></svg><div class="t" style="left:7.10px;top:164.50px;font-size:7.6px;line-height:7.6px;font-weight:700;-webkit-text-stroke:0.15px currentColor;transform:scaleX(1.205);transform-origin:0 0;">Bundle (3 Items)</div><div class="t" style="left:7.07px;top:176.50px;font-size:6.9px;line-height:6.9px;-webkit-text-stroke:0.12px currentColor;color:#222;transform:scaleX(1.145);transform-origin:0 0;">Name Of The NFT 1 #9123</div><svg style="left:106px;top:175.3px" width="8" height="8" viewBox="0 0 8 8"><circle cx="4" cy="4" r="3.9" fill="#ea1581"/><path d="M2.4 4.1L3.6 5.2L5.6 3" fill="none" stroke="#fff" stroke-width="0.8"/></svg><svg style="left:149.2px;top:165.8px" width="6" height="4" viewBox="0 0 6 4"><path d="M0.6 0.8L3 3.1L5.4 0.8" fill="none" stroke="#8a8a8a" stroke-width="0.8"/></svg><div class="r" style="left:7.3px;top:188.5px;width:148.7px;height:44.7px;background:#efefef;border-radius:3px;"></div><div class="t" style="left:10.17px;top:191.50px;font-size:6.4px;line-height:6.4px;font-weight:700;-webkit-text-stroke:0.15px currentColor;color:#6a6a6a;transform:scaleX(1.173);transform-origin:0 0;">SWAPS (3)</div><div class="r" style="left:10px;top:202.5px;width:27.2px;height:11.5px;background:#fff;border-radius:3px"></div><svg style="left:14.8px;top:204.3px" width="5.7" height="8.3" viewBox="0 0 6 9"><path d="M3 0L0 4.6L3 3.4Z" fill="#f5b63b"/><path d="M3 0L6 4.6L3 3.4Z" fill="#ea5e8e"/><path d="M0 4.6L3 3.4L3 6.1Z" fill="#45c27a"/><path d="M6 4.6L3 3.4L3 6.1Z" fill="#7c62dc"/><path d="M0 5.3L3 9L3 6.9Z" fill="#3fb6e6"/><path d="M6 5.3L3 9L3 6.9Z" fill="#3a78e0"/></svg><div class="t" style="left:23.81px;top:205.50px;font-size:6.6px;line-height:6.6px;-webkit-text-stroke:0.12px currentColor;color:#222;transform:scaleX(1.173);transform-origin:0 0;">75</div><div class="r" style="left:42.5px;top:202.5px;width:93.7px;height:11.5px;background:#fff;border-radius:3px"></div><svg style="left:47.8px;top:204.3px" width="5.7" height="8.3" viewBox="0 0 6 9"><path d="M3 0L0 4.6L3 3.4Z" fill="#f5b63b"/><path d="M3 0L6 4.6L3 3.4Z" fill="#ea5e8e"/><path d="M0 4.6L3 3.4L3 6.1Z" fill="#45c27a"/><path d="M6 4.6L3 3.4L3 6.1Z" fill="#7c62dc"/><path d="M0 5.3L3 9L3 6.9Z" fill="#3fb6e6"/><path d="M6 5.3L3 9L3 6.9Z" fill="#3a78e0"/></svg><div class="t" style="left:55.34px;top:205.50px;font-size:6.6px;line-height:6.6px;-webkit-text-stroke:0.12px currentColor;color:#222;transform:scaleX(1.406);transform-origin:0 0;">20 +</div><svg style="left:75.6px;top:204.3px" width="5.7" height="8.3" viewBox="0 0 6 9"><path d="M3 0L0 4.6L3 3.4Z" fill="#f5b63b"/><path d="M3 0L6 4.6L3 3.4Z" fill="#ea5e8e"/><path d="M0 4.6L3 3.4L3 6.1Z" fill="#45c27a"/><path d="M6 4.6L3 3.4L3 6.1Z" fill="#7c62dc"/><path d="M0 5.3L3 9L3 6.9Z" fill="#3fb6e6"/><path d="M6 5.3L3 9L3 6.9Z" fill="#3a78e0"/></svg><div class="t" style="left:83.34px;top:205.50px;font-size:6.6px;line-height:6.6px;-webkit-text-stroke:0.12px currentColor;color:#222;transform:scaleX(1.221);transform-origin:0 0;">40 in 30 days</div><div class="r" style="left:152.5px;top:205.5px;width:2px;height:10.8px;background:#8a8a8a;border-radius:1px;"></div><div class="r" style="left:10px;top:218px;width:119.2px;height:12.2px;background:#fff;border-radius:3px"></div><div class="t" style="left:14.86px;top:220.50px;font-size:6.6px;line-height:6.6px;-webkit-text-stroke:0.12px currentColor;color:#222;transform:scaleX(1.116);transform-origin:0 0;">WoW (any) + BAYC (any) +</div><svg style="left:107.2px;top:219.8px" width="5.7" height="8.3" viewBox="0 0 6 9"><path d="M3 0L0 4.6L3 3.4Z" fill="#f5b63b"/><path d="M3 0L6 4.6L3 3.4Z" fill="#ea5e8e"/><path d="M0 4.6L3 3.4L3 6.1Z" fill="#45c27a"/><path d="M6 4.6L3 3.4L3 6.1Z" fill="#7c62dc"/><path d="M0 5.3L3 9L3 6.9Z" fill="#3fb6e6"/><path d="M6 5.3L3 9L3 6.9Z" fill="#3a78e0"/></svg><div class="t" style="left:114.50px;top:220.50px;font-size:6.6px;line-height:6.6px;-webkit-text-stroke:0.12px currentColor;color:#222;transform:scaleX(1.424);transform-origin:0 0;">10</div><div class="r" style="left:7.3px;top:239.5px;width:148.7px;height:44.7px;background:#efefef;border-radius:3px;"></div><div class="t" style="left:9.91px;top:243.50px;font-size:6.4px;line-height:6.4px;font-weight:700;-webkit-text-stroke:0.15px currentColor;color:#6a6a6a;transform:scaleX(1.186);transform-origin:0 0;">INTERESTED IN</div><div class="r" style="left:9.9px;top:253.2px;width:23.700000000000003px;height:12.1px;background:#fff;border-radius:3px"></div><div class="t" style="left:14.30px;top:256.50px;font-size:6.6px;line-height:6.6px;-webkit-text-stroke:0.12px currentColor;color:#222;transform:scaleX(1.136);transform-origin:0 0;">ETH</div><div class="r" style="left:39px;top:253.2px;width:29.200000000000003px;height:12.1px;background:#fff;border-radius:3px"></div><div class="t" style="left:43.29px;top:256.50px;font-size:6.6px;line-height:6.6px;-webkit-text-stroke:0.12px currentColor;color:#222;transform:scaleX(1.150);transform-origin:0 0;">BAYC</div><div class="r" style="left:73.5px;top:253.2px;width:39.0px;height:12.1px;background:#fff;border-radius:3px"></div><div class="t" style="left:78.39px;top:256.50px;font-size:6.6px;line-height:6.6px;-webkit-text-stroke:0.12px currentColor;color:#222;transform:scaleX(1.253);transform-origin:0 0;">Clone-x</div><div class="r" style="left:117.5px;top:253.2px;width:28.900000000000006px;height:12.1px;background:#fff;border-radius:3px"></div><div class="t" style="left:122.30px;top:256.50px;font-size:6.6px;line-height:6.6px;-webkit-text-stroke:0.12px currentColor;color:#222;transform:scaleX(1.184);transform-origin:0 0;">Azuki</div><div class="r" style="left:9.9px;top:268.5px;width:137.8px;height:12.8px;background:#fff;border-radius:3px"></div><div class="t" style="left:14.86px;top:271.50px;font-size:6.6px;line-height:6.6px;-webkit-text-stroke:0.12px currentColor;color:#222;transform:scaleX(1.173);transform-origin:0 0;">World Of Women (Background : pink)</div></div><div class="r" style="left:197.5px;top:780.5px;width:164px;height:291px"><div class="r" style="left:0;top:0;width:164px;height:291px;border:1px solid #bbb;border-radius:5px;background:#fff"></div><svg style="left:7.5px;top:6.5px" width="149" height="150" viewBox="0 0 149 150"><defs><clipPath id="ck"><rect width="149" height="150" rx="3"/></clipPath></defs><g clip-path="url(#ck)"><rect width="149" height="150" fill="#ade3f7"/><path d="M8 152 C12 146 30 141 50 140 L54 152 Z" fill="#f7a8d3" stroke="#1d2150" stroke-width="1.1"/><path d="M80 124 L97 124 L98 152 L80 152 Z" fill="#fff" stroke="#1d2150" stroke-width="1.1"/><path d="M82 131 L97 130 M82 138 L97 137 M82 145 L98 144" stroke="#1d2150" stroke-width="1"/><path d="M101 137 L101 153" stroke="#1d2150" stroke-width="6.6" stroke-linecap="round"/><circle cx="99" cy="134.5" r="3" fill="#fff" stroke="#1d2150" stroke-width="1"/><circle cx="103" cy="134.5" r="3" fill="#fff" stroke="#1d2150" stroke-width="1"/><path d="M101 137 L101 153" stroke="#fff" stroke-width="4.4" stroke-linecap="round"/><path d="M50 152 C48 140 48 126 51 120 C53 116 58 114 64 116 L67 152 Z" fill="#f5a2d0" stroke="#1d2150" stroke-width="1.1"/><circle cx="52" cy="121" r="1.6" fill="#f5a2d0" stroke="#1d2150" stroke-width="0.8"/><circle cx="49.5" cy="130" r="1.6" fill="#f5a2d0" stroke="#1d2150" stroke-width="0.8"/><path d="M87 103 C94 108 101 118 100 129" stroke="#1d2150" stroke-width="9" stroke-linecap="round" fill="none"/><path d="M87 103 C94 108 101 118 100 129" stroke="#fff" stroke-width="6.6" stroke-linecap="round" fill="none"/><path d="M62 152 C60 136 61 121 66 115 C71 111 80 111 84 116 C87 124 87 140 85 152 Z" fill="#f7a6d2" stroke="#1d2150" stroke-width="1.2"/><path d="M72.5 128 a2.6 2.6 0 1 0 3.5 3.5 M72.5 141 a2.6 2.6 0 1 0 3.5 3.5" fill="none" stroke="#1d2150" stroke-width="1"/><path d="M83 112 C86 106 92 106 94 112 C96 118 92 124 88 124 C84 122 82 118 83 112Z" fill="#fff" stroke="#1d2150" stroke-width="1.1"/><path d="M43 48L50.5 62" stroke="#1d2150" stroke-width="6.2" stroke-linecap="round"/><circle cx="40.8" cy="49.2" r="3.4" fill="#fff" stroke="#1d2150" stroke-width="1"/><circle cx="45.2" cy="46.4" r="3.4" fill="#fff" stroke="#1d2150" stroke-width="1"/><path d="M43 48L50.5 62" stroke="#fff" stroke-width="4.2" stroke-linecap="round"/><g transform="rotate(-12 35 41)"><ellipse cx="35" cy="43" rx="10.8" ry="5.4" fill="#fff" stroke="#1d2150" stroke-width="1.1"/><ellipse cx="35.5" cy="42.5" rx="5.4" ry="2" fill="#fff" stroke="#1d2150" stroke-width="1"/><ellipse cx="33" cy="36" rx="8.8" ry="4.5" fill="#f4a6d2" stroke="#1d2150" stroke-width="0.9"/><ellipse cx="33.5" cy="35.6" rx="4.2" ry="1.6" fill="#fff" stroke="#1d2150" stroke-width="0.9"/></g><ellipse cx="123" cy="45.5" rx="11" ry="7" transform="rotate(-58 123 45.5)" fill="#fff" stroke="#1d2150" stroke-width="1.1"/><ellipse cx="123.5" cy="45" rx="5.6" ry="2.6" transform="rotate(-58 123.5 45)" fill="#fff" stroke="#1d2150" stroke-width="1"/><ellipse cx="130.5" cy="39.5" rx="9.6" ry="6.2" transform="rotate(-58 130.5 39.5)" fill="#f4a6d2" stroke="#1d2150" stroke-width="0.9"/><ellipse cx="131" cy="39" rx="4.8" ry="2.2" transform="rotate(-58 131 39)" fill="#fff" stroke="#1d2150" stroke-width="0.9"/><path d="M39.5 77 C40 60 55 50.5 76 50.5 C96 50.5 110 61 110.8 76 C111 86 108 94 104 99 C102 104 98 106 94 105 C91 110 87 112 83 110 C80 114 75 114 72 111 C69 114 64 114 61 110 C57 113 52 111 51 107 C47 108 44 105 45 101 C42 100 41 98 42 96 C37 97 35 93 36.5 90 C38 87 40 87 41.5 87 C39.5 84 39 81 39.5 77 Z" fill="#fff" stroke="#1d2150" stroke-width="1.3"/><path d="M102 78 L109 75.5 M103 82 L109 84" stroke="#1d2150" stroke-width="1"/><ellipse cx="100" cy="66.5" rx="4.2" ry="3.6" fill="#1d2150"/><path d="M113 52L101 65.5" stroke="#1d2150" stroke-width="6.2" stroke-linecap="round"/><circle cx="110.8" cy="53.2" r="3.4" fill="#fff" stroke="#1d2150" stroke-width="1"/><circle cx="115.2" cy="50.4" r="3.4" fill="#fff" stroke="#1d2150" stroke-width="1"/><path d="M113 52L101 65.5" stroke="#fff" stroke-width="4.2" stroke-linecap="round"/><ellipse cx="53" cy="81.5" rx="9.3" ry="11.3" fill="#22235e"/><circle cx="84.4" cy="81.5" r="14.3" fill="#22235e"/><path d="M54 70 L58.2 77.5 L62.5 73 Z M89.5 67 L92.8 75 L98.6 70.5 Z" fill="#fff"/><path d="M48.2 73.5 A8.5 10.5 0 0 0 48.2 89.5" fill="none" stroke="#7fdde6" stroke-width="2.4"/><path d="M76.5 70 A12 12 0 0 0 76.5 93" fill="none" stroke="#7fdde6" stroke-width="3.4"/><path d="M51.5 85.2l4 4m0-4l-4 4M81 87.6l4.4 4.4m0-4.4l-4.4 4.4" stroke="#f39ac8" stroke-width="1.8"/><path d="M62.5 91 C63.5 88.5 68 88.5 69 91 C69.5 93 68 96 66 97.5 C64 96 62 93 62.5 91Z" fill="#1d2150"/><path d="M57 106 L58 110 M66 107 L66.5 111 M76 107 L76 111" stroke="#1d2150" stroke-width="0.9"/></g></svg><div class="r" style="left:9.7px;top:140.9px;width:15px;height:15px;border:1.6px solid #111a2a;border-radius:3px;background:#b9d8f0"></div><svg style="left:12.7px;top:143.9px" width="9" height="9" viewBox="0 0 9 9"><circle cx="4.5" cy="4" r="3.2" fill="#fff" stroke="#334" stroke-width="0.6"/><circle cx="3.3" cy="4" r="1" fill="#334"/><circle cx="5.8" cy="4" r="1.1" fill="#334"/><rect x="2.5" y="7" width="4" height="2" fill="#e9a"/></svg><div class="r" style="left:28.2px;top:140.9px;width:14.5px;height:15px;border:1.4px solid #fff;border-radius:3px;background:#bfe8b0"></div><svg style="left:31.2px;top:143.9px" width="9" height="9" viewBox="0 0 9 9"><circle cx="4.5" cy="4.5" r="3" fill="#fff" stroke="#555" stroke-width="0.6"/><circle cx="3.4" cy="4.3" r="0.9" fill="#444"/><circle cx="5.6" cy="4.3" r="0.9" fill="#444"/></svg><div class="r" style="left:46.099999999999994px;top:140.9px;width:14px;height:15px;border:1.2px solid #fff;border-radius:3px;background:#f4f4f4"></div><svg style="left:50.099999999999994px;top:143.9px" width="6" height="9" viewBox="0 0 6 9"><path d="M3 0L0 4.6L3 3.4Z" fill="#f5b63b"/><path d="M3 0L6 4.6L3 3.4Z" fill="#ea5e8e"/><path d="M0 4.6L3 3.4L3 6.1Z" fill="#45c27a"/><path d="M6 4.6L3 3.4L3 6.1Z" fill="#7c62dc"/><path d="M0 5.3L3 9L3 6.9Z" fill="#3fb6e6"/><path d="M6 5.3L3 9L3 6.9Z" fill="#3a78e0"/></svg><div class="r" style="left:106.2px;top:-0.5px;width:20px;height:20px;background:#f8b517;border:1.4px solid #161616;border-radius:2px"></div><svg style="left:110.2px;top:3.5px" width="12" height="12" viewBox="0 0 12 12" fill="none" stroke="#161616" stroke-width="0.95" stroke-linecap="round" stroke-linejoin="round"><path d="M5.5 9.5H2.5V3H9.5V5.5M2.5 5H9.5M4.2 1.8V3.4M7.8 1.8V3.4"/><rect x="6.8" y="7" width="3" height="3" rx="0.6"/></svg><div class="r" style="left:131.5px;top:-0.5px;width:20px;height:20px;background:#3fd0d8;border:1.4px solid #161616;border-radius:2px"></div><svg style="left:135.5px;top:3.5px" width="12" height="12" viewBox="0 0 12 12" fill="none" stroke="#161616" stroke-width="0.95" stroke-linecap="round" stroke-linejoin="round"><path d="M2.5 5.5V4H9.5M8 2.5L9.5 4L8 5.5M9.5 6.5V8H2.5M4 6.5L2.5 8L4 9.5"/></svg><div class="t" style="left:7.10px;top:164.50px;font-size:7.6px;line-height:7.6px;font-weight:700;-webkit-text-stroke:0.15px currentColor;transform:scaleX(1.205);transform-origin:0 0;">Bundle (3 Items)</div><div class="t" style="left:7.07px;top:176.50px;font-size:6.9px;line-height:6.9px;-webkit-text-stroke:0.12px currentColor;color:#222;transform:scaleX(1.145);transform-origin:0 0;">Name Of The NFT 1 #9123</div><svg style="left:106px;top:175.3px" width="8" height="8" viewBox="0 0 8 8"><circle cx="4" cy="4" r="3.9" fill="#ea1581"/><path d="M2.4 4.1L3.6 5.2L5.6 3" fill="none" stroke="#fff" stroke-width="0.8"/></svg><svg style="left:149.2px;top:165.8px" width="6" height="4" viewBox="0 0 6 4"><path d="M0.6 0.8L3 3.1L5.4 0.8" fill="none" stroke="#8a8a8a" stroke-width="0.8"/></svg><div class="r" style="left:7.3px;top:188.5px;width:148.7px;height:44.7px;background:#efefef;border-radius:3px;"></div><div class="t" style="left:10.17px;top:191.50px;font-size:6.4px;line-height:6.4px;font-weight:700;-webkit-text-stroke:0.15px currentColor;color:#6a6a6a;transform:scaleX(1.173);transform-origin:0 0;">SWAPS (3)</div><div class="r" style="left:10px;top:202.5px;width:27.2px;height:11.5px;background:#fff;border-radius:3px"></div><svg style="left:14.8px;top:204.3px" width="5.7" height="8.3" viewBox="0 0 6 9"><path d="M3 0L0 4.6L3 3.4Z" fill="#f5b63b"/><path d="M3 0L6 4.6L3 3.4Z" fill="#ea5e8e"/><path d="M0 4.6L3 3.4L3 6.1Z" fill="#45c27a"/><path d="M6 4.6L3 3.4L3 6.1Z" fill="#7c62dc"/><path d="M0 5.3L3 9L3 6.9Z" fill="#3fb6e6"/><path d="M6 5.3L3 9L3 6.9Z" fill="#3a78e0"/></svg><div class="t" style="left:23.81px;top:205.50px;font-size:6.6px;line-height:6.6px;-webkit-text-stroke:0.12px currentColor;color:#222;transform:scaleX(1.173);transform-origin:0 0;">75</div><div class="r" style="left:42.5px;top:202.5px;width:93.7px;height:11.5px;background:#fff;border-radius:3px"></div><svg style="left:47.8px;top:204.3px" width="5.7" height="8.3" viewBox="0 0 6 9"><path d="M3 0L0 4.6L3 3.4Z" fill="#f5b63b"/><path d="M3 0L6 4.6L3 3.4Z" fill="#ea5e8e"/><path d="M0 4.6L3 3.4L3 6.1Z" fill="#45c27a"/><path d="M6 4.6L3 3.4L3 6.1Z" fill="#7c62dc"/><path d="M0 5.3L3 9L3 6.9Z" fill="#3fb6e6"/><path d="M6 5.3L3 9L3 6.9Z" fill="#3a78e0"/></svg><div class="t" style="left:55.34px;top:205.50px;font-size:6.6px;line-height:6.6px;-webkit-text-stroke:0.12px currentColor;color:#222;transform:scaleX(1.406);transform-origin:0 0;">20 +</div><svg style="left:75.6px;top:204.3px" width="5.7" height="8.3" viewBox="0 0 6 9"><path d="M3 0L0 4.6L3 3.4Z" fill="#f5b63b"/><path d="M3 0L6 4.6L3 3.4Z" fill="#ea5e8e"/><path d="M0 4.6L3 3.4L3 6.1Z" fill="#45c27a"/><path d="M6 4.6L3 3.4L3 6.1Z" fill="#7c62dc"/><path d="M0 5.3L3 9L3 6.9Z" fill="#3fb6e6"/><path d="M6 5.3L3 9L3 6.9Z" fill="#3a78e0"/></svg><div class="t" style="left:83.34px;top:205.50px;font-size:6.6px;line-height:6.6px;-webkit-text-stroke:0.12px currentColor;color:#222;transform:scaleX(1.221);transform-origin:0 0;">40 in 30 days</div><div class="r" style="left:152.5px;top:205.5px;width:2px;height:10.8px;background:#8a8a8a;border-radius:1px;"></div><div class="r" style="left:10px;top:218px;width:119.2px;height:12.2px;background:#fff;border-radius:3px"></div><div class="t" style="left:14.86px;top:220.50px;font-size:6.6px;line-height:6.6px;-webkit-text-stroke:0.12px currentColor;color:#222;transform:scaleX(1.116);transform-origin:0 0;">WoW (any) + BAYC (any) +</div><svg style="left:107.2px;top:219.8px" width="5.7" height="8.3" viewBox="0 0 6 9"><path d="M3 0L0 4.6L3 3.4Z" fill="#f5b63b"/><path d="M3 0L6 4.6L3 3.4Z" fill="#ea5e8e"/><path d="M0 4.6L3 3.4L3 6.1Z" fill="#45c27a"/><path d="M6 4.6L3 3.4L3 6.1Z" fill="#7c62dc"/><path d="M0 5.3L3 9L3 6.9Z" fill="#3fb6e6"/><path d="M6 5.3L3 9L3 6.9Z" fill="#3a78e0"/></svg><div class="t" style="left:114.50px;top:220.50px;font-size:6.6px;line-height:6.6px;-webkit-text-stroke:0.12px currentColor;color:#222;transform:scaleX(1.424);transform-origin:0 0;">10</div><div class="r" style="left:7.3px;top:239.5px;width:148.7px;height:44.7px;background:#efefef;border-radius:3px;"></div><div class="t" style="left:9.91px;top:243.50px;font-size:6.4px;line-height:6.4px;font-weight:700;-webkit-text-stroke:0.15px currentColor;color:#6a6a6a;transform:scaleX(1.186);transform-origin:0 0;">INTERESTED IN</div><div class="r" style="left:9.9px;top:253.2px;width:23.700000000000003px;height:12.1px;background:#fff;border-radius:3px"></div><div class="t" style="left:14.30px;top:256.50px;font-size:6.6px;line-height:6.6px;-webkit-text-stroke:0.12px currentColor;color:#222;transform:scaleX(1.136);transform-origin:0 0;">ETH</div><div class="r" style="left:39px;top:253.2px;width:29.200000000000003px;height:12.1px;background:#fff;border-radius:3px"></div><div class="t" style="left:43.29px;top:256.50px;font-size:6.6px;line-height:6.6px;-webkit-text-stroke:0.12px currentColor;color:#222;transform:scaleX(1.150);transform-origin:0 0;">BAYC</div><div class="r" style="left:73.5px;top:253.2px;width:39.0px;height:12.1px;background:#fff;border-radius:3px"></div><div class="t" style="left:78.39px;top:256.50px;font-size:6.6px;line-height:6.6px;-webkit-text-stroke:0.12px currentColor;color:#222;transform:scaleX(1.253);transform-origin:0 0;">Clone-x</div><div class="r" style="left:117.5px;top:253.2px;width:28.900000000000006px;height:12.1px;background:#fff;border-radius:3px"></div><div class="t" style="left:122.30px;top:256.50px;font-size:6.6px;line-height:6.6px;-webkit-text-stroke:0.12px currentColor;color:#222;transform:scaleX(1.184);transform-origin:0 0;">Azuki</div><div class="r" style="left:9.9px;top:268.5px;width:137.8px;height:12.8px;background:#fff;border-radius:3px"></div><div class="t" style="left:14.86px;top:271.50px;font-size:6.6px;line-height:6.6px;-webkit-text-stroke:0.12px currentColor;color:#222;transform:scaleX(1.173);transform-origin:0 0;">World Of Women (Background : pink)</div></div><div class="r" style="left:375.5px;top:780.5px;width:164px;height:291px"><div class="r" style="left:0;top:0;width:164px;height:291px;border:1px solid #bbb;border-radius:5px;background:#fff"></div><svg style="left:7.5px;top:6.5px" width="149" height="150" viewBox="0 0 149 150"><defs><clipPath id="ca"><rect width="149" height="150" rx="3"/></clipPath><linearGradient id="abg" x1="0" y1="0" x2="1" y2="1"><stop offset="0" stop-color="#8b98ef"/><stop offset="0.48" stop-color="#92e4f7"/><stop offset="1" stop-color="#8a98ee"/></linearGradient><linearGradient id="ahd" x1="0" y1="0" x2="0" y2="1"><stop offset="0" stop-color="#a8ccb0"/><stop offset="1" stop-color="#96bba0"/></linearGradient></defs><g clip-path="url(#ca)"><rect width="149" height="150" fill="url(#abg)"/><path d="M18 152 C22 132 34 118 46 113 C58 108 90 108 100 113 C114 120 126 134 132 152 Z" fill="url(#ahd)"/><path d="M108 132 C114 134 120 142 122 152 L108 152 Z" fill="#8fd0e8" opacity="0.7"/><path d="M62 98 L88 98 L90 118 C82 124 70 124 62 118 Z" fill="#8a5038"/><path d="M68 108 C72 104 78 106 80 112 C76 116 70 116 68 108Z" fill="#d9a27c"/><path d="M44 70 C44 56 58 44 76 44 C96 44 108 56 107 72 C106 86 100 98 92 106 C86 112 80 114 75 112 C64 106 56 98 50 90 C44 91 38 86 38 79 C38 73 41 70 44 70Z" fill="#9a5e44"/><path d="M74 52 C80 46 92 48 95 56 C92 63 84 64 78 60 C76 58 74 56 74 52Z M50 80 C54 76 62 78 64 86 C64 94 58 96 54 94 C50 90 48 86 50 80Z M70 96 C74 92 84 94 88 98 C90 104 84 110 78 110 C72 108 68 102 70 96Z M86 84 C90 82 96 84 96 88 C94 92 88 92 86 84Z M66 112 C70 110 78 112 80 118 C76 122 70 122 66 118Z" fill="#dcaa86"/><path d="M42 112 C50 106 60 106 64 110 C70 116 76 120 82 122 C88 118 94 110 100 110 C106 110 110 116 112 122 C100 128 60 128 42 120 Z" fill="#a7ceb2"/><path transform="translate(0 1.8)" d="M31 66 C28 45 36 22 54 14 C62 11 72 13 77 18 C84 13 96 14 104 20 C114 28 118 48 113 72 L106 70 C104 60 100 52 96 46 C88 44 80 46 74 50 C72 56 71 62 71 67 C64 66 56 70 48 74 L42 74 C36 73 32 70 31 66 Z" fill="#1c1c1e"/><path d="M46 32 C54 24 66 22 74 28 M84 24 C94 22 104 30 108 40 M38 48 C42 40 50 34 58 34 M60 40 C64 50 66 58 68 64 M96 30 C100 40 104 52 106 64" fill="none" stroke="#4a4a4e" stroke-width="1.1"/><path d="M46 76 L110 72 M50 86 L108 90" stroke="#222" stroke-width="1.4"/><circle cx="68" cy="77" r="10" fill="#c9c9cc" stroke="#333" stroke-width="1.4"/><path d="M63 73 L73 81 M73 73 L63 81" stroke="#777" stroke-width="1.4"/><ellipse cx="96.5" cy="78.5" rx="6.5" ry="5.5" fill="#f2f2f6"/><circle cx="95" cy="79" r="3.6" fill="#6a58d8"/><circle cx="95" cy="79" r="1.4" fill="#fff"/></g></svg><div class="r" style="left:9.7px;top:140.9px;width:15px;height:15px;border:1.6px solid #0b1a2a;border-radius:3px;background:#9fb0e8"></div><svg style="left:11.299999999999999px;top:142.5px" width="12" height="12" viewBox="0 0 12 12"><ellipse cx="6" cy="4.5" rx="3.6" ry="3.2" fill="#1c1c1c"/><ellipse cx="6" cy="6.5" rx="2.2" ry="2.6" fill="#8a5a40"/><path d="M2 12 C3 9.5 9 9.5 10 12Z" fill="#9cc3a6"/></svg><div class="r" style="left:27.9px;top:140.9px;width:15px;height:15px;border:1.5px solid #fff;border-radius:3px;background:#8aa0d8"></div><svg style="left:29.4px;top:142.4px" width="12" height="12" viewBox="0 0 12 12"><ellipse cx="6" cy="4" rx="4" ry="3" fill="#3d7a3a"/><ellipse cx="6" cy="6.5" rx="2.4" ry="2.8" fill="#7a4a30"/><path d="M1.5 12 C3 9.5 9 9.5 10.5 12Z" fill="#222"/></svg><div class="r" style="left:131.5px;top:-0.5px;width:20px;height:20px;background:#9b8af5;border:1.4px solid #161616;border-radius:2px"></div><svg style="left:135.5px;top:3.5px" width="12" height="12" viewBox="0 0 12 12" fill="none" stroke="#161616" stroke-width="0.95" stroke-linecap="round" stroke-linejoin="round"><circle cx="6" cy="6" r="4.3"/><path d="M5.5 3.8V6.2L7.2 7.8"/></svg><div class="t" style="left:7.10px;top:164.50px;font-size:7.6px;line-height:7.6px;font-weight:700;-webkit-text-stroke:0.15px currentColor;transform:scaleX(1.205);transform-origin:0 0;">Bundle (3 Items)</div><div class="t" style="left:7.07px;top:176.50px;font-size:6.9px;line-height:6.9px;-webkit-text-stroke:0.12px currentColor;color:#222;transform:scaleX(1.145);transform-origin:0 0;">Name Of The NFT 1 #9123</div><svg style="left:106px;top:175.3px" width="8" height="8" viewBox="0 0 8 8"><circle cx="4" cy="4" r="3.9" fill="#ea1581"/><path d="M2.4 4.1L3.6 5.2L5.6 3" fill="none" stroke="#fff" stroke-width="0.8"/></svg><svg style="left:149.2px;top:165.8px" width="6" height="4" viewBox="0 0 6 4"><path d="M0.6 0.8L3 3.1L5.4 0.8" fill="none" stroke="#8a8a8a" stroke-width="0.8"/></svg><div class="r" style="left:7.9px;top:188.6px;width:148.3px;height:45.3px;background:#efefef;border-radius:3px;"></div><div class="t" style="left:10.20px;top:193.50px;font-size:6.3px;line-height:6.3px;font-weight:700;-webkit-text-stroke:0.15px currentColor;color:#6a6a6a;transform:scaleX(1.204);transform-origin:0 0;">OPTION PRICE</div><div class="t" style="left:84.18px;top:193.50px;font-size:6.3px;line-height:6.3px;font-weight:700;-webkit-text-stroke:0.15px currentColor;color:#6a6a6a;transform:scaleX(1.186);transform-origin:0 0;">SWAP PRICE</div><div class="r" style="left:10.5px;top:204.9px;width:70.1px;height:24.3px;background:#fff;border-radius:2px;"></div><div class="r" style="left:84px;top:204.9px;width:69.4px;height:24.3px;background:#fff;border-radius:2px;"></div><div class="t" style="left:17.85px;top:213.50px;font-size:6.8px;line-height:6.8px;-webkit-text-stroke:0.12px currentColor;color:#222;transform:scaleX(1.320);transform-origin:0 0;">20</div><div class="t" style="left:91.42px;top:213.50px;font-size:6.8px;line-height:6.8px;-webkit-text-stroke:0.12px currentColor;color:#222;transform:scaleX(1.310);transform-origin:0 0;">40</div><svg style="left:67.3px;top:209.6px" width="7.4" height="12.7" viewBox="0 0 6 9"><path d="M3 0L0 4.6L3 3.4Z" fill="#f5b63b"/><path d="M3 0L6 4.6L3 3.4Z" fill="#ea5e8e"/><path d="M0 4.6L3 3.4L3 6.1Z" fill="#45c27a"/><path d="M6 4.6L3 3.4L3 6.1Z" fill="#7c62dc"/><path d="M0 5.3L3 9L3 6.9Z" fill="#3fb6e6"/><path d="M6 5.3L3 9L3 6.9Z" fill="#3a78e0"/></svg><svg style="left:140.6px;top:209.6px" width="7.6" height="12.2" viewBox="0 0 6 9"><path d="M3 0L0 4.6L3 3.4Z" fill="#f5b63b"/><path d="M3 0L6 4.6L3 3.4Z" fill="#ea5e8e"/><path d="M0 4.6L3 3.4L3 6.1Z" fill="#45c27a"/><path d="M6 4.6L3 3.4L3 6.1Z" fill="#7c62dc"/><path d="M0 5.3L3 9L3 6.9Z" fill="#3fb6e6"/><path d="M6 5.3L3 9L3 6.9Z" fill="#3a78e0"/></svg><div class="t" style="left:7.30px;top:240.50px;font-size:6.3px;line-height:6.3px;font-weight:700;-webkit-text-stroke:0.15px currentColor;color:#6a6a6a;transform:scaleX(1.197);transform-origin:0 0;">OPTION EXPIRES IN</div><div class="r" style="left:7.9px;top:252.2px;width:148.1px;height:31.6px;border:1px solid #e9e9e9;border-radius:3px;background:#fff"></div><div class="t" style="left:18.93px;top:259.50px;font-size:6.8px;line-height:6.8px;-webkit-text-stroke:0.12px currentColor;color:#333;transform:scaleX(1.342);transform-origin:0 0;">03</div><div class="t" style="left:15.53px;top:270.50px;font-size:6.8px;line-height:6.8px;-webkit-text-stroke:0.12px currentColor;color:#b0b0b0;transform:scaleX(1.178);transform-origin:0 0;">days</div><div class="t" style="left:49.84px;top:259.50px;font-size:6.8px;line-height:6.8px;-webkit-text-stroke:0.12px currentColor;color:#333;transform:scaleX(1.301);transform-origin:0 0;">18</div><div class="t" style="left:44.42px;top:270.50px;font-size:6.8px;line-height:6.8px;-webkit-text-stroke:0.12px currentColor;color:#b0b0b0;transform:scaleX(1.216);transform-origin:0 0;">hours</div><div class="t" style="left:86.33px;top:259.50px;font-size:6.8px;line-height:6.8px;-webkit-text-stroke:0.12px currentColor;color:#333;transform:scaleX(1.261);transform-origin:0 0;">45</div><div class="t" style="left:78.28px;top:270.50px;font-size:6.8px;line-height:6.8px;-webkit-text-stroke:0.12px currentColor;color:#b0b0b0;transform:scaleX(1.060);transform-origin:0 0;">minutes</div><div class="t" style="left:128.35px;top:259.50px;font-size:6.8px;line-height:6.8px;-webkit-text-stroke:0.12px currentColor;color:#333;transform:scaleX(1.285);transform-origin:0 0;">38</div><div class="t" style="left:118.56px;top:270.50px;font-size:6.8px;line-height:6.8px;-webkit-text-stroke:0.12px currentColor;color:#b0b0b0;transform:scaleX(1.157);transform-origin:0 0;">seconds</div></div><div class="r" style="left:553.5px;top:780.5px;width:164px;height:291px"><div class="r" style="left:0;top:0;width:164px;height:291px;border:1px solid #bbb;border-radius:5px;background:#fff"></div><svg style="left:7.5px;top:6.5px" width="149" height="150" viewBox="0 0 149 150"><defs><clipPath id="ck"><rect width="149" height="150" rx="3"/></clipPath></defs><g clip-path="url(#ck)"><rect width="149" height="150" fill="#ade3f7"/><path d="M8 152 C12 146 30 141 50 140 L54 152 Z" fill="#f7a8d3" stroke="#1d2150" stroke-width="1.1"/><path d="M80 124 L97 124 L98 152 L80 152 Z" fill="#fff" stroke="#1d2150" stroke-width="1.1"/><path d="M82 131 L97 130 M82 138 L97 137 M82 145 L98 144" stroke="#1d2150" stroke-width="1"/><path d="M101 137 L101 153" stroke="#1d2150" stroke-width="6.6" stroke-linecap="round"/><circle cx="99" cy="134.5" r="3" fill="#fff" stroke="#1d2150" stroke-width="1"/><circle cx="103" cy="134.5" r="3" fill="#fff" stroke="#1d2150" stroke-width="1"/><path d="M101 137 L101 153" stroke="#fff" stroke-width="4.4" stroke-linecap="round"/><path d="M50 152 C48 140 48 126 51 120 C53 116 58 114 64 116 L67 152 Z" fill="#f5a2d0" stroke="#1d2150" stroke-width="1.1"/><circle cx="52" cy="121" r="1.6" fill="#f5a2d0" stroke="#1d2150" stroke-width="0.8"/><circle cx="49.5" cy="130" r="1.6" fill="#f5a2d0" stroke="#1d2150" stroke-width="0.8"/><path d="M87 103 C94 108 101 118 100 129" stroke="#1d2150" stroke-width="9" stroke-linecap="round" fill="none"/><path d="M87 103 C94 108 101 118 100 129" stroke="#fff" stroke-width="6.6" stroke-linecap="round" fill="none"/><path d="M62 152 C60 136 61 121 66 115 C71 111 80 111 84 116 C87 124 87 140 85 152 Z" fill="#f7a6d2" stroke="#1d2150" stroke-width="1.2"/><path d="M72.5 128 a2.6 2.6 0 1 0 3.5 3.5 M72.5 141 a2.6 2.6 0 1 0 3.5 3.5" fill="none" stroke="#1d2150" stroke-width="1"/><path d="M83 112 C86 106 92 106 94 112 C96 118 92 124 88 124 C84 122 82 118 83 112Z" fill="#fff" stroke="#1d2150" stroke-width="1.1"/><path d="M43 48L50.5 62" stroke="#1d2150" stroke-width="6.2" stroke-linecap="round"/><circle cx="40.8" cy="49.2" r="3.4" fill="#fff" stroke="#1d2150" stroke-width="1"/><circle cx="45.2" cy="46.4" r="3.4" fill="#fff" stroke="#1d2150" stroke-width="1"/><path d="M43 48L50.5 62" stroke="#fff" stroke-width="4.2" stroke-linecap="round"/><g transform="rotate(-12 35 41)"><ellipse cx="35" cy="43" rx="10.8" ry="5.4" fill="#fff" stroke="#1d2150" stroke-width="1.1"/><ellipse cx="35.5" cy="42.5" rx="5.4" ry="2" fill="#fff" stroke="#1d2150" stroke-width="1"/><ellipse cx="33" cy="36" rx="8.8" ry="4.5" fill="#f4a6d2" stroke="#1d2150" stroke-width="0.9"/><ellipse cx="33.5" cy="35.6" rx="4.2" ry="1.6" fill="#fff" stroke="#1d2150" stroke-width="0.9"/></g><ellipse cx="123" cy="45.5" rx="11" ry="7" transform="rotate(-58 123 45.5)" fill="#fff" stroke="#1d2150" stroke-width="1.1"/><ellipse cx="123.5" cy="45" rx="5.6" ry="2.6" transform="rotate(-58 123.5 45)" fill="#fff" stroke="#1d2150" stroke-width="1"/><ellipse cx="130.5" cy="39.5" rx="9.6" ry="6.2" transform="rotate(-58 130.5 39.5)" fill="#f4a6d2" stroke="#1d2150" stroke-width="0.9"/><ellipse cx="131" cy="39" rx="4.8" ry="2.2" transform="rotate(-58 131 39)" fill="#fff" stroke="#1d2150" stroke-width="0.9"/><path d="M39.5 77 C40 60 55 50.5 76 50.5 C96 50.5 110 61 110.8 76 C111 86 108 94 104 99 C102 104 98 106 94 105 C91 110 87 112 83 110 C80 114 75 114 72 111 C69 114 64 114 61 110 C57 113 52 111 51 107 C47 108 44 105 45 101 C42 100 41 98 42 96 C37 97 35 93 36.5 90 C38 87 40 87 41.5 87 C39.5 84 39 81 39.5 77 Z" fill="#fff" stroke="#1d2150" stroke-width="1.3"/><path d="M102 78 L109 75.5 M103 82 L109 84" stroke="#1d2150" stroke-width="1"/><ellipse cx="100" cy="66.5" rx="4.2" ry="3.6" fill="#1d2150"/><path d="M113 52L101 65.5" stroke="#1d2150" stroke-width="6.2" stroke-linecap="round"/><circle cx="110.8" cy="53.2" r="3.4" fill="#fff" stroke="#1d2150" stroke-width="1"/><circle cx="115.2" cy="50.4" r="3.4" fill="#fff" stroke="#1d2150" stroke-width="1"/><path d="M113 52L101 65.5" stroke="#fff" stroke-width="4.2" stroke-linecap="round"/><ellipse cx="53" cy="81.5" rx="9.3" ry="11.3" fill="#22235e"/><circle cx="84.4" cy="81.5" r="14.3" fill="#22235e"/><path d="M54 70 L58.2 77.5 L62.5 73 Z M89.5 67 L92.8 75 L98.6 70.5 Z" fill="#fff"/><path d="M48.2 73.5 A8.5 10.5 0 0 0 48.2 89.5" fill="none" stroke="#7fdde6" stroke-width="2.4"/><path d="M76.5 70 A12 12 0 0 0 76.5 93" fill="none" stroke="#7fdde6" stroke-width="3.4"/><path d="M51.5 85.2l4 4m0-4l-4 4M81 87.6l4.4 4.4m0-4.4l-4.4 4.4" stroke="#f39ac8" stroke-width="1.8"/><path d="M62.5 91 C63.5 88.5 68 88.5 69 91 C69.5 93 68 96 66 97.5 C64 96 62 93 62.5 91Z" fill="#1d2150"/><path d="M57 106 L58 110 M66 107 L66.5 111 M76 107 L76 111" stroke="#1d2150" stroke-width="0.9"/></g></svg><div class="r" style="left:9.7px;top:140.9px;width:15px;height:15px;border:1.6px solid #111a2a;border-radius:3px;background:#b9d8f0"></div><svg style="left:12.7px;top:143.9px" width="9" height="9" viewBox="0 0 9 9"><circle cx="4.5" cy="4" r="3.2" fill="#fff" stroke="#334" stroke-width="0.6"/><circle cx="3.3" cy="4" r="1" fill="#334"/><circle cx="5.8" cy="4" r="1.1" fill="#334"/><rect x="2.5" y="7" width="4" height="2" fill="#e9a"/></svg><div class="r" style="left:28.2px;top:140.9px;width:14.5px;height:15px;border:1.4px solid #fff;border-radius:3px;background:#bfe8b0"></div><svg style="left:31.2px;top:143.9px" width="9" height="9" viewBox="0 0 9 9"><circle cx="4.5" cy="4.5" r="3" fill="#fff" stroke="#555" stroke-width="0.6"/><circle cx="3.4" cy="4.3" r="0.9" fill="#444"/><circle cx="5.6" cy="4.3" r="0.9" fill="#444"/></svg><div class="r" style="left:46.099999999999994px;top:140.9px;width:14px;height:15px;border:1.2px solid #fff;border-radius:3px;background:#f4f4f4"></div><svg style="left:50.099999999999994px;top:143.9px" width="6" height="9" viewBox="0 0 6 9"><path d="M3 0L0 4.6L3 3.4Z" fill="#f5b63b"/><path d="M3 0L6 4.6L3 3.4Z" fill="#ea5e8e"/><path d="M0 4.6L3 3.4L3 6.1Z" fill="#45c27a"/><path d="M6 4.6L3 3.4L3 6.1Z" fill="#7c62dc"/><path d="M0 5.3L3 9L3 6.9Z" fill="#3fb6e6"/><path d="M6 5.3L3 9L3 6.9Z" fill="#3a78e0"/></svg><div class="r" style="left:106.2px;top:-0.5px;width:20px;height:20px;background:#f8b517;border:1.4px solid #161616;border-radius:2px"></div><svg style="left:110.2px;top:3.5px" width="12" height="12" viewBox="0 0 12 12" fill="none" stroke="#161616" stroke-width="0.95" stroke-linecap="round" stroke-linejoin="round"><path d="M5.5 9.5H2.5V3H9.5V5.5M2.5 5H9.5M4.2 1.8V3.4M7.8 1.8V3.4"/><rect x="6.8" y="7" width="3" height="3" rx="0.6"/></svg><div class="r" style="left:131.5px;top:-0.5px;width:20px;height:20px;background:#3fd0d8;border:1.4px solid #161616;border-radius:2px"></div><svg style="left:135.5px;top:3.5px" width="12" height="12" viewBox="0 0 12 12" fill="none" stroke="#161616" stroke-width="0.95" stroke-linecap="round" stroke-linejoin="round"><path d="M2.5 5.5V4H9.5M8 2.5L9.5 4L8 5.5M9.5 6.5V8H2.5M4 6.5L2.5 8L4 9.5"/></svg><div class="t" style="left:7.10px;top:164.50px;font-size:7.6px;line-height:7.6px;font-weight:700;-webkit-text-stroke:0.15px currentColor;transform:scaleX(1.205);transform-origin:0 0;">Bundle (3 Items)</div><div class="t" style="left:7.07px;top:176.50px;font-size:6.9px;line-height:6.9px;-webkit-text-stroke:0.12px currentColor;color:#222;transform:scaleX(1.145);transform-origin:0 0;">Name Of The NFT 1 #9123</div><svg style="left:106px;top:175.3px" width="8" height="8" viewBox="0 0 8 8"><circle cx="4" cy="4" r="3.9" fill="#ea1581"/><path d="M2.4 4.1L3.6 5.2L5.6 3" fill="none" stroke="#fff" stroke-width="0.8"/></svg><svg style="left:149.2px;top:165.8px" width="6" height="4" viewBox="0 0 6 4"><path d="M0.6 0.8L3 3.1L5.4 0.8" fill="none" stroke="#8a8a8a" stroke-width="0.8"/></svg><div class="r" style="left:7.3px;top:188.5px;width:148.7px;height:44.7px;background:#efefef;border-radius:3px;"></div><div class="t" style="left:10.17px;top:191.50px;font-size:6.4px;line-height:6.4px;font-weight:700;-webkit-text-stroke:0.15px currentColor;color:#6a6a6a;transform:scaleX(1.173);transform-origin:0 0;">SWAPS (3)</div><div class="r" style="left:10px;top:202.5px;width:27.2px;height:11.5px;background:#fff;border-radius:3px"></div><svg style="left:14.8px;top:204.3px" width="5.7" height="8.3" viewBox="0 0 6 9"><path d="M3 0L0 4.6L3 3.4Z" fill="#f5b63b"/><path d="M3 0L6 4.6L3 3.4Z" fill="#ea5e8e"/><path d="M0 4.6L3 3.4L3 6.1Z" fill="#45c27a"/><path d="M6 4.6L3 3.4L3 6.1Z" fill="#7c62dc"/><path d="M0 5.3L3 9L3 6.9Z" fill="#3fb6e6"/><path d="M6 5.3L3 9L3 6.9Z" fill="#3a78e0"/></svg><div class="t" style="left:23.81px;top:205.50px;font-size:6.6px;line-height:6.6px;-webkit-text-stroke:0.12px currentColor;color:#222;transform:scaleX(1.173);transform-origin:0 0;">75</div><div class="r" style="left:42.5px;top:202.5px;width:93.7px;height:11.5px;background:#fff;border-radius:3px"></div><svg style="left:47.8px;top:204.3px" width="5.7" height="8.3" viewBox="0 0 6 9"><path d="M3 0L0 4.6L3 3.4Z" fill="#f5b63b"/><path d="M3 0L6 4.6L3 3.4Z" fill="#ea5e8e"/><path d="M0 4.6L3 3.4L3 6.1Z" fill="#45c27a"/><path d="M6 4.6L3 3.4L3 6.1Z" fill="#7c62dc"/><path d="M0 5.3L3 9L3 6.9Z" fill="#3fb6e6"/><path d="M6 5.3L3 9L3 6.9Z" fill="#3a78e0"/></svg><div class="t" style="left:55.34px;top:205.50px;font-size:6.6px;line-height:6.6px;-webkit-text-stroke:0.12px currentColor;color:#222;transform:scaleX(1.406);transform-origin:0 0;">20 +</div><svg style="left:75.6px;top:204.3px" width="5.7" height="8.3" viewBox="0 0 6 9"><path d="M3 0L0 4.6L3 3.4Z" fill="#f5b63b"/><path d="M3 0L6 4.6L3 3.4Z" fill="#ea5e8e"/><path d="M0 4.6L3 3.4L3 6.1Z" fill="#45c27a"/><path d="M6 4.6L3 3.4L3 6.1Z" fill="#7c62dc"/><path d="M0 5.3L3 9L3 6.9Z" fill="#3fb6e6"/><path d="M6 5.3L3 9L3 6.9Z" fill="#3a78e0"/></svg><div class="t" style="left:83.34px;top:205.50px;font-size:6.6px;line-height:6.6px;-webkit-text-stroke:0.12px currentColor;color:#222;transform:scaleX(1.221);transform-origin:0 0;">40 in 30 days</div><div class="r" style="left:152.5px;top:205.5px;width:2px;height:10.8px;background:#8a8a8a;border-radius:1px;"></div><div class="r" style="left:10px;top:218px;width:119.2px;height:12.2px;background:#fff;border-radius:3px"></div><div class="t" style="left:14.86px;top:220.50px;font-size:6.6px;line-height:6.6px;-webkit-text-stroke:0.12px currentColor;color:#222;transform:scaleX(1.116);transform-origin:0 0;">WoW (any) + BAYC (any) +</div><svg style="left:107.2px;top:219.8px" width="5.7" height="8.3" viewBox="0 0 6 9"><path d="M3 0L0 4.6L3 3.4Z" fill="#f5b63b"/><path d="M3 0L6 4.6L3 3.4Z" fill="#ea5e8e"/><path d="M0 4.6L3 3.4L3 6.1Z" fill="#45c27a"/><path d="M6 4.6L3 3.4L3 6.1Z" fill="#7c62dc"/><path d="M0 5.3L3 9L3 6.9Z" fill="#3fb6e6"/><path d="M6 5.3L3 9L3 6.9Z" fill="#3a78e0"/></svg><div class="t" style="left:114.50px;top:220.50px;font-size:6.6px;line-height:6.6px;-webkit-text-stroke:0.12px currentColor;color:#222;transform:scaleX(1.424);transform-origin:0 0;">10</div><div class="r" style="left:7.3px;top:239.5px;width:148.7px;height:44.7px;background:#efefef;border-radius:3px;"></div><div class="t" style="left:9.91px;top:243.50px;font-size:6.4px;line-height:6.4px;font-weight:700;-webkit-text-stroke:0.15px currentColor;color:#6a6a6a;transform:scaleX(1.186);transform-origin:0 0;">INTERESTED IN</div><div class="r" style="left:9.9px;top:253.2px;width:23.700000000000003px;height:12.1px;background:#fff;border-radius:3px"></div><div class="t" style="left:14.30px;top:256.50px;font-size:6.6px;line-height:6.6px;-webkit-text-stroke:0.12px currentColor;color:#222;transform:scaleX(1.136);transform-origin:0 0;">ETH</div><div class="r" style="left:39px;top:253.2px;width:29.200000000000003px;height:12.1px;background:#fff;border-radius:3px"></div><div class="t" style="left:43.29px;top:256.50px;font-size:6.6px;line-height:6.6px;-webkit-text-stroke:0.12px currentColor;color:#222;transform:scaleX(1.150);transform-origin:0 0;">BAYC</div><div class="r" style="left:73.5px;top:253.2px;width:39.0px;height:12.1px;background:#fff;border-radius:3px"></div><div class="t" style="left:78.39px;top:256.50px;font-size:6.6px;line-height:6.6px;-webkit-text-stroke:0.12px currentColor;color:#222;transform:scaleX(1.253);transform-origin:0 0;">Clone-x</div><div class="r" style="left:117.5px;top:253.2px;width:28.900000000000006px;height:12.1px;background:#fff;border-radius:3px"></div><div class="t" style="left:122.30px;top:256.50px;font-size:6.6px;line-height:6.6px;-webkit-text-stroke:0.12px currentColor;color:#222;transform:scaleX(1.184);transform-origin:0 0;">Azuki</div><div class="r" style="left:9.9px;top:268.5px;width:137.8px;height:12.8px;background:#fff;border-radius:3px"></div><div class="t" style="left:14.86px;top:271.50px;font-size:6.6px;line-height:6.6px;-webkit-text-stroke:0.12px currentColor;color:#222;transform:scaleX(1.173);transform-origin:0 0;">World Of Women (Background : pink)</div></div><div class="r" style="left:731.5px;top:780.5px;width:164px;height:291px"><div class="r" style="left:0;top:0;width:164px;height:291px;border:1px solid #bbb;border-radius:5px;background:#fff"></div><svg style="left:7.5px;top:6.5px" width="149" height="150" viewBox="0 0 149 150"><defs><clipPath id="ck"><rect width="149" height="150" rx="3"/></clipPath></defs><g clip-path="url(#ck)"><rect width="149" height="150" fill="#ade3f7"/><path d="M8 152 C12 146 30 141 50 140 L54 152 Z" fill="#f7a8d3" stroke="#1d2150" stroke-width="1.1"/><path d="M80 124 L97 124 L98 152 L80 152 Z" fill="#fff" stroke="#1d2150" stroke-width="1.1"/><path d="M82 131 L97 130 M82 138 L97 137 M82 145 L98 144" stroke="#1d2150" stroke-width="1"/><path d="M101 137 L101 153" stroke="#1d2150" stroke-width="6.6" stroke-linecap="round"/><circle cx="99" cy="134.5" r="3" fill="#fff" stroke="#1d2150" stroke-width="1"/><circle cx="103" cy="134.5" r="3" fill="#fff" stroke="#1d2150" stroke-width="1"/><path d="M101 137 L101 153" stroke="#fff" stroke-width="4.4" stroke-linecap="round"/><path d="M50 152 C48 140 48 126 51 120 C53 116 58 114 64 116 L67 152 Z" fill="#f5a2d0" stroke="#1d2150" stroke-width="1.1"/><circle cx="52" cy="121" r="1.6" fill="#f5a2d0" stroke="#1d2150" stroke-width="0.8"/><circle cx="49.5" cy="130" r="1.6" fill="#f5a2d0" stroke="#1d2150" stroke-width="0.8"/><path d="M87 103 C94 108 101 118 100 129" stroke="#1d2150" stroke-width="9" stroke-linecap="round" fill="none"/><path d="M87 103 C94 108 101 118 100 129" stroke="#fff" stroke-width="6.6" stroke-linecap="round" fill="none"/><path d="M62 152 C60 136 61 121 66 115 C71 111 80 111 84 116 C87 124 87 140 85 152 Z" fill="#f7a6d2" stroke="#1d2150" stroke-width="1.2"/><path d="M72.5 128 a2.6 2.6 0 1 0 3.5 3.5 M72.5 141 a2.6 2.6 0 1 0 3.5 3.5" fill="none" stroke="#1d2150" stroke-width="1"/><path d="M83 112 C86 106 92 106 94 112 C96 118 92 124 88 124 C84 122 82 118 83 112Z" fill="#fff" stroke="#1d2150" stroke-width="1.1"/><path d="M43 48L50.5 62" stroke="#1d2150" stroke-width="6.2" stroke-linecap="round"/><circle cx="40.8" cy="49.2" r="3.4" fill="#fff" stroke="#1d2150" stroke-width="1"/><circle cx="45.2" cy="46.4" r="3.4" fill="#fff" stroke="#1d2150" stroke-width="1"/><path d="M43 48L50.5 62" stroke="#fff" stroke-width="4.2" stroke-linecap="round"/><g transform="rotate(-12 35 41)"><ellipse cx="35" cy="43" rx="10.8" ry="5.4" fill="#fff" stroke="#1d2150" stroke-width="1.1"/><ellipse cx="35.5" cy="42.5" rx="5.4" ry="2" fill="#fff" stroke="#1d2150" stroke-width="1"/><ellipse cx="33" cy="36" rx="8.8" ry="4.5" fill="#f4a6d2" stroke="#1d2150" stroke-width="0.9"/><ellipse cx="33.5" cy="35.6" rx="4.2" ry="1.6" fill="#fff" stroke="#1d2150" stroke-width="0.9"/></g><ellipse cx="123" cy="45.5" rx="11" ry="7" transform="rotate(-58 123 45.5)" fill="#fff" stroke="#1d2150" stroke-width="1.1"/><ellipse cx="123.5" cy="45" rx="5.6" ry="2.6" transform="rotate(-58 123.5 45)" fill="#fff" stroke="#1d2150" stroke-width="1"/><ellipse cx="130.5" cy="39.5" rx="9.6" ry="6.2" transform="rotate(-58 130.5 39.5)" fill="#f4a6d2" stroke="#1d2150" stroke-width="0.9"/><ellipse cx="131" cy="39" rx="4.8" ry="2.2" transform="rotate(-58 131 39)" fill="#fff" stroke="#1d2150" stroke-width="0.9"/><path d="M39.5 77 C40 60 55 50.5 76 50.5 C96 50.5 110 61 110.8 76 C111 86 108 94 104 99 C102 104 98 106 94 105 C91 110 87 112 83 110 C80 114 75 114 72 111 C69 114 64 114 61 110 C57 113 52 111 51 107 C47 108 44 105 45 101 C42 100 41 98 42 96 C37 97 35 93 36.5 90 C38 87 40 87 41.5 87 C39.5 84 39 81 39.5 77 Z" fill="#fff" stroke="#1d2150" stroke-width="1.3"/><path d="M102 78 L109 75.5 M103 82 L109 84" stroke="#1d2150" stroke-width="1"/><ellipse cx="100" cy="66.5" rx="4.2" ry="3.6" fill="#1d2150"/><path d="M113 52L101 65.5" stroke="#1d2150" stroke-width="6.2" stroke-linecap="round"/><circle cx="110.8" cy="53.2" r="3.4" fill="#fff" stroke="#1d2150" stroke-width="1"/><circle cx="115.2" cy="50.4" r="3.4" fill="#fff" stroke="#1d2150" stroke-width="1"/><path d="M113 52L101 65.5" stroke="#fff" stroke-width="4.2" stroke-linecap="round"/><ellipse cx="53" cy="81.5" rx="9.3" ry="11.3" fill="#22235e"/><circle cx="84.4" cy="81.5" r="14.3" fill="#22235e"/><path d="M54 70 L58.2 77.5 L62.5 73 Z M89.5 67 L92.8 75 L98.6 70.5 Z" fill="#fff"/><path d="M48.2 73.5 A8.5 10.5 0 0 0 48.2 89.5" fill="none" stroke="#7fdde6" stroke-width="2.4"/><path d="M76.5 70 A12 12 0 0 0 76.5 93" fill="none" stroke="#7fdde6" stroke-width="3.4"/><path d="M51.5 85.2l4 4m0-4l-4 4M81 87.6l4.4 4.4m0-4.4l-4.4 4.4" stroke="#f39ac8" stroke-width="1.8"/><path d="M62.5 91 C63.5 88.5 68 88.5 69 91 C69.5 93 68 96 66 97.5 C64 96 62 93 62.5 91Z" fill="#1d2150"/><path d="M57 106 L58 110 M66 107 L66.5 111 M76 107 L76 111" stroke="#1d2150" stroke-width="0.9"/></g></svg><div class="r" style="left:9.7px;top:140.9px;width:15px;height:15px;border:1.6px solid #111a2a;border-radius:3px;background:#b9d8f0"></div><svg style="left:12.7px;top:143.9px" width="9" height="9" viewBox="0 0 9 9"><circle cx="4.5" cy="4" r="3.2" fill="#fff" stroke="#334" stroke-width="0.6"/><circle cx="3.3" cy="4" r="1" fill="#334"/><circle cx="5.8" cy="4" r="1.1" fill="#334"/><rect x="2.5" y="7" width="4" height="2" fill="#e9a"/></svg><div class="r" style="left:28.2px;top:140.9px;width:14.5px;height:15px;border:1.4px solid #fff;border-radius:3px;background:#bfe8b0"></div><svg style="left:31.2px;top:143.9px" width="9" height="9" viewBox="0 0 9 9"><circle cx="4.5" cy="4.5" r="3" fill="#fff" stroke="#555" stroke-width="0.6"/><circle cx="3.4" cy="4.3" r="0.9" fill="#444"/><circle cx="5.6" cy="4.3" r="0.9" fill="#444"/></svg><div class="r" style="left:46.099999999999994px;top:140.9px;width:14px;height:15px;border:1.2px solid #fff;border-radius:3px;background:#f4f4f4"></div><svg style="left:50.099999999999994px;top:143.9px" width="6" height="9" viewBox="0 0 6 9"><path d="M3 0L0 4.6L3 3.4Z" fill="#f5b63b"/><path d="M3 0L6 4.6L3 3.4Z" fill="#ea5e8e"/><path d="M0 4.6L3 3.4L3 6.1Z" fill="#45c27a"/><path d="M6 4.6L3 3.4L3 6.1Z" fill="#7c62dc"/><path d="M0 5.3L3 9L3 6.9Z" fill="#3fb6e6"/><path d="M6 5.3L3 9L3 6.9Z" fill="#3a78e0"/></svg><div class="r" style="left:106.2px;top:-0.5px;width:20px;height:20px;background:#f8b517;border:1.4px solid #161616;border-radius:2px"></div><svg style="left:110.2px;top:3.5px" width="12" height="12" viewBox="0 0 12 12" fill="none" stroke="#161616" stroke-width="0.95" stroke-linecap="round" stroke-linejoin="round"><path d="M5.5 9.5H2.5V3H9.5V5.5M2.5 5H9.5M4.2 1.8V3.4M7.8 1.8V3.4"/><rect x="6.8" y="7" width="3" height="3" rx="0.6"/></svg><div class="r" style="left:131.5px;top:-0.5px;width:20px;height:20px;background:#3fd0d8;border:1.4px solid #161616;border-radius:2px"></div><svg style="left:135.5px;top:3.5px" width="12" height="12" viewBox="0 0 12 12" fill="none" stroke="#161616" stroke-width="0.95" stroke-linecap="round" stroke-linejoin="round"><path d="M2.5 5.5V4H9.5M8 2.5L9.5 4L8 5.5M9.5 6.5V8H2.5M4 6.5L2.5 8L4 9.5"/></svg><div class="t" style="left:7.10px;top:164.50px;font-size:7.6px;line-height:7.6px;font-weight:700;-webkit-text-stroke:0.15px currentColor;transform:scaleX(1.205);transform-origin:0 0;">Bundle (3 Items)</div><div class="t" style="left:7.07px;top:176.50px;font-size:6.9px;line-height:6.9px;-webkit-text-stroke:0.12px currentColor;color:#222;transform:scaleX(1.145);transform-origin:0 0;">Name Of The NFT 1 #9123</div><svg style="left:106px;top:175.3px" width="8" height="8" viewBox="0 0 8 8"><circle cx="4" cy="4" r="3.9" fill="#ea1581"/><path d="M2.4 4.1L3.6 5.2L5.6 3" fill="none" stroke="#fff" stroke-width="0.8"/></svg><svg style="left:149.2px;top:165.8px" width="6" height="4" viewBox="0 0 6 4"><path d="M0.6 0.8L3 3.1L5.4 0.8" fill="none" stroke="#8a8a8a" stroke-width="0.8"/></svg><div class="r" style="left:7.3px;top:188.5px;width:148.7px;height:44.7px;background:#efefef;border-radius:3px;"></div><div class="t" style="left:10.17px;top:191.50px;font-size:6.4px;line-height:6.4px;font-weight:700;-webkit-text-stroke:0.15px currentColor;color:#6a6a6a;transform:scaleX(1.173);transform-origin:0 0;">SWAPS (3)</div><div class="r" style="left:10px;top:202.5px;width:27.2px;height:11.5px;background:#fff;border-radius:3px"></div><svg style="left:14.8px;top:204.3px" width="5.7" height="8.3" viewBox="0 0 6 9"><path d="M3 0L0 4.6L3 3.4Z" fill="#f5b63b"/><path d="M3 0L6 4.6L3 3.4Z" fill="#ea5e8e"/><path d="M0 4.6L3 3.4L3 6.1Z" fill="#45c27a"/><path d="M6 4.6L3 3.4L3 6.1Z" fill="#7c62dc"/><path d="M0 5.3L3 9L3 6.9Z" fill="#3fb6e6"/><path d="M6 5.3L3 9L3 6.9Z" fill="#3a78e0"/></svg><div class="t" style="left:23.81px;top:205.50px;font-size:6.6px;line-height:6.6px;-webkit-text-stroke:0.12px currentColor;color:#222;transform:scaleX(1.173);transform-origin:0 0;">75</div><div class="r" style="left:42.5px;top:202.5px;width:93.7px;height:11.5px;background:#fff;border-radius:3px"></div><svg style="left:47.8px;top:204.3px" width="5.7" height="8.3" viewBox="0 0 6 9"><path d="M3 0L0 4.6L3 3.4Z" fill="#f5b63b"/><path d="M3 0L6 4.6L3 3.4Z" fill="#ea5e8e"/><path d="M0 4.6L3 3.4L3 6.1Z" fill="#45c27a"/><path d="M6 4.6L3 3.4L3 6.1Z" fill="#7c62dc"/><path d="M0 5.3L3 9L3 6.9Z" fill="#3fb6e6"/><path d="M6 5.3L3 9L3 6.9Z" fill="#3a78e0"/></svg><div class="t" style="left:55.34px;top:205.50px;font-size:6.6px;line-height:6.6px;-webkit-text-stroke:0.12px currentColor;color:#222;transform:scaleX(1.406);transform-origin:0 0;">20 +</div><svg style="left:75.6px;top:204.3px" width="5.7" height="8.3" viewBox="0 0 6 9"><path d="M3 0L0 4.6L3 3.4Z" fill="#f5b63b"/><path d="M3 0L6 4.6L3 3.4Z" fill="#ea5e8e"/><path d="M0 4.6L3 3.4L3 6.1Z" fill="#45c27a"/><path d="M6 4.6L3 3.4L3 6.1Z" fill="#7c62dc"/><path d="M0 5.3L3 9L3 6.9Z" fill="#3fb6e6"/><path d="M6 5.3L3 9L3 6.9Z" fill="#3a78e0"/></svg><div class="t" style="left:83.34px;top:205.50px;font-size:6.6px;line-height:6.6px;-webkit-text-stroke:0.12px currentColor;color:#222;transform:scaleX(1.221);transform-origin:0 0;">40 in 30 days</div><div class="r" style="left:152.5px;top:205.5px;width:2px;height:10.8px;background:#8a8a8a;border-radius:1px;"></div><div class="r" style="left:10px;top:218px;width:119.2px;height:12.2px;background:#fff;border-radius:3px"></div><div class="t" style="left:14.86px;top:220.50px;font-size:6.6px;line-height:6.6px;-webkit-text-stroke:0.12px currentColor;color:#222;transform:scaleX(1.116);transform-origin:0 0;">WoW (any) + BAYC (any) +</div><svg style="left:107.2px;top:219.8px" width="5.7" height="8.3" viewBox="0 0 6 9"><path d="M3 0L0 4.6L3 3.4Z" fill="#f5b63b"/><path d="M3 0L6 4.6L3 3.4Z" fill="#ea5e8e"/><path d="M0 4.6L3 3.4L3 6.1Z" fill="#45c27a"/><path d="M6 4.6L3 3.4L3 6.1Z" fill="#7c62dc"/><path d="M0 5.3L3 9L3 6.9Z" fill="#3fb6e6"/><path d="M6 5.3L3 9L3 6.9Z" fill="#3a78e0"/></svg><div class="t" style="left:114.50px;top:220.50px;font-size:6.6px;line-height:6.6px;-webkit-text-stroke:0.12px currentColor;color:#222;transform:scaleX(1.424);transform-origin:0 0;">10</div><div class="r" style="left:7.3px;top:239.5px;width:148.7px;height:44.7px;background:#efefef;border-radius:3px;"></div><div class="t" style="left:9.91px;top:243.50px;font-size:6.4px;line-height:6.4px;font-weight:700;-webkit-text-stroke:0.15px currentColor;color:#6a6a6a;transform:scaleX(1.186);transform-origin:0 0;">INTERESTED IN</div><div class="r" style="left:9.9px;top:253.2px;width:23.700000000000003px;height:12.1px;background:#fff;border-radius:3px"></div><div class="t" style="left:14.30px;top:256.50px;font-size:6.6px;line-height:6.6px;-webkit-text-stroke:0.12px currentColor;color:#222;transform:scaleX(1.136);transform-origin:0 0;">ETH</div><div class="r" style="left:39px;top:253.2px;width:29.200000000000003px;height:12.1px;background:#fff;border-radius:3px"></div><div class="t" style="left:43.29px;top:256.50px;font-size:6.6px;line-height:6.6px;-webkit-text-stroke:0.12px currentColor;color:#222;transform:scaleX(1.150);transform-origin:0 0;">BAYC</div><div class="r" style="left:73.5px;top:253.2px;width:39.0px;height:12.1px;background:#fff;border-radius:3px"></div><div class="t" style="left:78.39px;top:256.50px;font-size:6.6px;line-height:6.6px;-webkit-text-stroke:0.12px currentColor;color:#222;transform:scaleX(1.253);transform-origin:0 0;">Clone-x</div><div class="r" style="left:117.5px;top:253.2px;width:28.900000000000006px;height:12.1px;background:#fff;border-radius:3px"></div><div class="t" style="left:122.30px;top:256.50px;font-size:6.6px;line-height:6.6px;-webkit-text-stroke:0.12px currentColor;color:#222;transform:scaleX(1.184);transform-origin:0 0;">Azuki</div><div class="r" style="left:9.9px;top:268.5px;width:137.8px;height:12.8px;background:#fff;border-radius:3px"></div><div class="t" style="left:14.86px;top:271.50px;font-size:6.6px;line-height:6.6px;-webkit-text-stroke:0.12px currentColor;color:#222;transform:scaleX(1.173);transform-origin:0 0;">World Of Women (Background : pink)</div></div><div class="r" style="left:0px;top:800px;width:910px;height:61px;background:#efefef;border-top:1px solid #c4c4c4;"></div><div class="t" style="left:31.22px;top:833.00px;font-size:13px;line-height:13px;font-weight:700;-webkit-text-stroke:0.3px currentColor;color:#000;transform:scaleX(1.282);transform-origin:0 0;">NF</div><div class="t" style="left:71.16px;top:833.00px;font-size:13.5px;line-height:13.5px;font-weight:700;-webkit-text-stroke:0.3px currentColor;color:#000;transform:scaleX(1.029);transform-origin:0 0;">x</div><svg style="left:51.4px;top:822.4px" width="20.0" height="28.0" viewBox="0 0 20 28" fill="none" stroke-linecap="round" stroke-linejoin="round" stroke-width="2.6"><defs><linearGradient id="ba2" gradientUnits="userSpaceOnUse" x1="13" y1="3" x2="4" y2="12"><stop offset="0" stop-color="#f59a52"/><stop offset="1" stop-color="#f24bbd"/></linearGradient><linearGradient id="bb2" gradientUnits="userSpaceOnUse" x1="4.5" y1="12" x2="14.8" y2="13.6"><stop offset="0" stop-color="#f24bbd"/><stop offset="1" stop-color="#2f8cf6"/></linearGradient><linearGradient id="bc2" gradientUnits="userSpaceOnUse" x1="13.6" y1="3.8" x2="18.5" y2="17.4"><stop offset="0" stop-color="#f5a04c"/><stop offset="0.6" stop-color="#f6c033"/><stop offset="1" stop-color="#ecd81e"/></linearGradient><linearGradient id="bd2" gradientUnits="userSpaceOnUse" x1="18.5" y1="17.4" x2="8" y2="27"><stop offset="0" stop-color="#e9d824"/><stop offset="1" stop-color="#22dcb0"/></linearGradient><linearGradient id="be2" gradientUnits="userSpaceOnUse" x1="14.8" y1="13.6" x2="8" y2="27"><stop offset="0" stop-color="#3b86f4"/><stop offset="1" stop-color="#1ee0c8"/></linearGradient></defs><path d="M14.8 13.6 L8 27" stroke="url(#be2)"/><path d="M13.6 3.8 L8.6 16 L18.5 17.4" stroke="url(#bc2)"/><path d="M18.5 17.4 L8 27" stroke="url(#bd2)"/><path d="M13.6 3.8 L4.5 12" stroke="url(#ba2)"/><path d="M4.5 12 L14.8 13.6" stroke="url(#bb2)"/></svg><svg style="left:758px;top:836px" width="8" height="10" viewBox="0 0 8 10"><path d="M2 1.2L5.6 4.8L2 8.4" fill="none" stroke="#111" stroke-width="1.2"/></svg><div class="t" style="left:772.92px;top:836.00px;font-size:9.8px;line-height:9.8px;font-weight:700;-webkit-text-stroke:0.3px currentColor;transform:scaleX(1.125);transform-origin:0 0;">About NF3x</div><div class="r" style="left:202.5px;top:857px;width:78px;height:8px;background:#9a9a9a;border-radius:3px;"></div><div class="r" style="left:57px;top:859.5px;width:1.2px;height:1.5px;background:#888;"></div><div class="r" style="left:64.6px;top:859.5px;width:1.2px;height:1.5px;background:#888;"></div><div class="r" style="left:161.5px;top:859.5px;width:1.2px;height:1.5px;background:#888;"></div><div class="r" style="left:190.8px;top:859.5px;width:1.2px;height:1.5px;background:#888;"></div><div class="r" style="left:828.7px;top:859.5px;width:1.2px;height:1.5px;background:#888;"></div><div class="r" style="left:835.7px;top:859.5px;width:1.2px;height:1.5px;background:#888;"></div></body></html>
